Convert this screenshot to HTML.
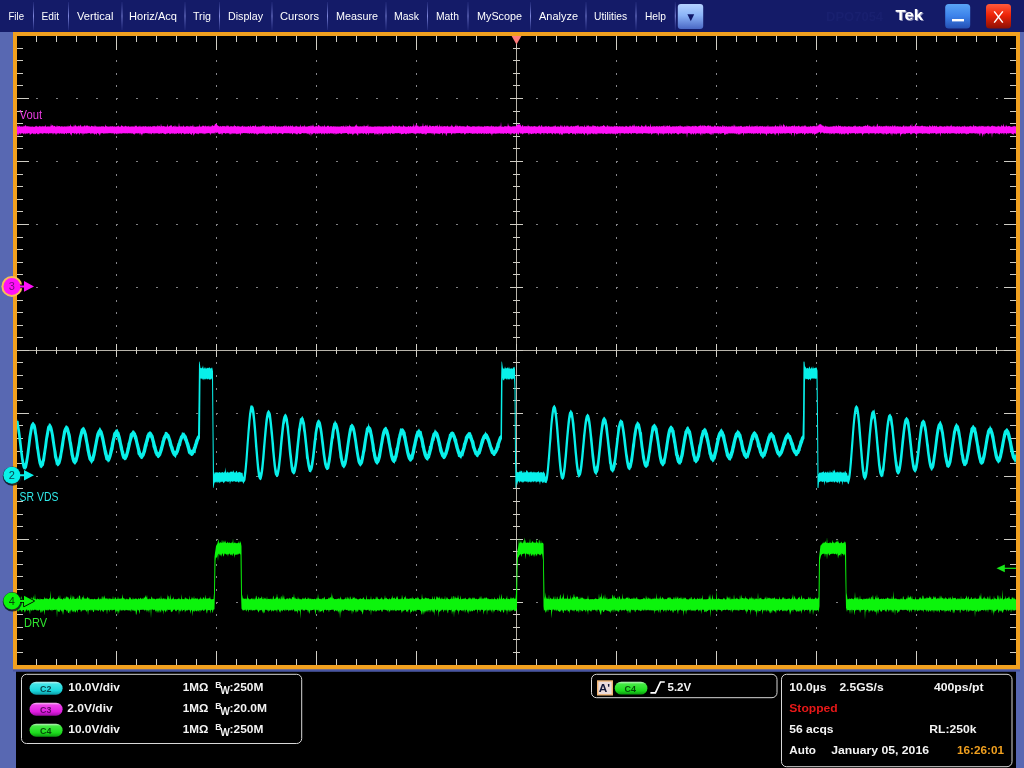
<!DOCTYPE html>
<html lang="en">
<head>
<meta charset="utf-8">
<title>Tek oscilloscope</title>
<style>
html,body{margin:0;padding:0;background:#000;}
body{width:1024px;height:768px;overflow:hidden;font-family:"Liberation Sans", sans-serif;}
svg{display:block;will-change:transform;}
</style>
</head>
<body>
<svg width="1024" height="768" viewBox="0 0 1024 768" font-family='"Liberation Sans", sans-serif'>
<defs>
<linearGradient id="gsep" x1="0" y1="0" x2="0" y2="1"><stop offset="0" stop-color="#5a64c0" stop-opacity="0.15"/><stop offset="0.5" stop-color="#8088dc" stop-opacity="1"/><stop offset="1" stop-color="#5a64c0" stop-opacity="0.15"/></linearGradient>
<linearGradient id="gdrop" x1="0" y1="0" x2="0" y2="1"><stop offset="0" stop-color="#b4d2ff"/><stop offset="0.45" stop-color="#8cb4f8"/><stop offset="1" stop-color="#4a68c4"/></linearGradient>
<linearGradient id="gmin" x1="0" y1="0" x2="0" y2="1"><stop offset="0" stop-color="#5aa4f6"/><stop offset="0.5" stop-color="#3c82ea"/><stop offset="1" stop-color="#2450b4"/></linearGradient>
<linearGradient id="gcls" x1="0" y1="0" x2="0" y2="1"><stop offset="0" stop-color="#ff5a3c"/><stop offset="0.45" stop-color="#ee2408"/><stop offset="1" stop-color="#8c1004"/></linearGradient>
<linearGradient id="gc2" x1="0" y1="0" x2="0" y2="1"><stop offset="0" stop-color="#c8f4f4"/><stop offset="0.18" stop-color="#44e6e8"/><stop offset="0.7" stop-color="#18d6dc"/><stop offset="1" stop-color="#0c98a2"/></linearGradient>
<linearGradient id="gc3" x1="0" y1="0" x2="0" y2="1"><stop offset="0" stop-color="#f8c8f4"/><stop offset="0.18" stop-color="#ee44ea"/><stop offset="0.7" stop-color="#e01ce0"/><stop offset="1" stop-color="#9c0ca2"/></linearGradient>
<linearGradient id="gc4" x1="0" y1="0" x2="0" y2="1"><stop offset="0" stop-color="#c8f4c8"/><stop offset="0.18" stop-color="#44ea44"/><stop offset="0.7" stop-color="#1cdc1c"/><stop offset="1" stop-color="#0c9810"/></linearGradient>
</defs>
<rect width="1024" height="768" fill="#5868b2"/>
<rect x="0" y="0" width="1024" height="32" fill="#141b68"/>
<rect x="16" y="671.5" width="1000" height="96.5" fill="#000"/>
<rect x="13" y="32" width="1007" height="637.5" fill="#f1a01f"/>
<rect x="17" y="36" width="999" height="629" fill="#000"/>
<rect x="13" y="669.5" width="1007" height="2" fill="#4855a2"/>
<rect x="33" y="2" width="1" height="28" fill="url(#gsep)"/>
<rect x="68" y="2" width="1" height="28" fill="url(#gsep)"/>
<rect x="121.5" y="2" width="1" height="28" fill="url(#gsep)"/>
<rect x="184.5" y="2" width="1" height="28" fill="url(#gsep)"/>
<rect x="219" y="2" width="1" height="28" fill="url(#gsep)"/>
<rect x="271.5" y="2" width="1" height="28" fill="url(#gsep)"/>
<rect x="327" y="2" width="1" height="28" fill="url(#gsep)"/>
<rect x="385.5" y="2" width="1" height="28" fill="url(#gsep)"/>
<rect x="427" y="2" width="1" height="28" fill="url(#gsep)"/>
<rect x="467.5" y="2" width="1" height="28" fill="url(#gsep)"/>
<rect x="530" y="2" width="1" height="28" fill="url(#gsep)"/>
<rect x="585.5" y="2" width="1" height="28" fill="url(#gsep)"/>
<rect x="635.5" y="2" width="1" height="28" fill="url(#gsep)"/>
<rect x="674.8" y="2" width="1" height="28" fill="url(#gsep)"/>
<text x="8.5" y="20" font-size="11" fill="#fff" textLength="15.5" lengthAdjust="spacingAndGlyphs">File</text>
<text x="41.5" y="20" font-size="11" fill="#fff" textLength="17.5" lengthAdjust="spacingAndGlyphs">Edit</text>
<text x="77" y="20" font-size="11" fill="#fff" textLength="36.5" lengthAdjust="spacingAndGlyphs">Vertical</text>
<text x="129" y="20" font-size="11" fill="#fff" textLength="48" lengthAdjust="spacingAndGlyphs">Horiz/Acq</text>
<text x="193" y="20" font-size="11" fill="#fff" textLength="18" lengthAdjust="spacingAndGlyphs">Trig</text>
<text x="228" y="20" font-size="11" fill="#fff" textLength="35" lengthAdjust="spacingAndGlyphs">Display</text>
<text x="280" y="20" font-size="11" fill="#fff" textLength="39" lengthAdjust="spacingAndGlyphs">Cursors</text>
<text x="336" y="20" font-size="11" fill="#fff" textLength="42" lengthAdjust="spacingAndGlyphs">Measure</text>
<text x="394" y="20" font-size="11" fill="#fff" textLength="25" lengthAdjust="spacingAndGlyphs">Mask</text>
<text x="436" y="20" font-size="11" fill="#fff" textLength="23" lengthAdjust="spacingAndGlyphs">Math</text>
<text x="477" y="20" font-size="11" fill="#fff" textLength="45" lengthAdjust="spacingAndGlyphs">MyScope</text>
<text x="539" y="20" font-size="11" fill="#fff" textLength="39" lengthAdjust="spacingAndGlyphs">Analyze</text>
<text x="594" y="20" font-size="11" fill="#fff" textLength="33" lengthAdjust="spacingAndGlyphs">Utilities</text>
<text x="645" y="20" font-size="11" fill="#fff" textLength="21" lengthAdjust="spacingAndGlyphs">Help</text>
<rect x="677.8" y="4" width="25.4" height="25" rx="3" fill="url(#gdrop)"/>
<path d="M687.4 14.3 L694.2 14.3 L690.8 21.3 Z" fill="#0e1668"/>
<text x="826" y="21" font-size="13" font-weight="bold" fill="#19206f">DPO7054</text>
<text x="895.6" y="20.4" font-size="15" font-weight="bold" fill="#fff" textLength="27.4" lengthAdjust="spacingAndGlyphs" style="filter:drop-shadow(1px 1px 0 #8d90b8)">Tek</text>
<rect x="945.2" y="4" width="25" height="24.4" rx="3.5" fill="url(#gmin)"/>
<rect x="952" y="19" width="12" height="2.4" fill="#fff"/>
<rect x="986" y="4" width="25" height="24.4" rx="3.5" fill="url(#gcls)"/>
<path d="M994.2 11.4 L1002.8 22.6 M1002.8 11.4 L994.2 22.6" stroke="#fff" stroke-width="1.5" fill="none"/>
<g shape-rendering="crispEdges">
<rect x="35.7" y="98" width="2.2" height="1" fill="#7e7e80"/>
<rect x="55.7" y="98" width="2.2" height="1" fill="#7e7e80"/>
<rect x="75.7" y="98" width="2.2" height="1" fill="#7e7e80"/>
<rect x="95.7" y="98" width="2.2" height="1" fill="#7e7e80"/>
<rect x="115.7" y="98" width="2.2" height="1" fill="#7e7e80"/>
<rect x="135.7" y="98" width="2.2" height="1" fill="#7e7e80"/>
<rect x="155.7" y="98" width="2.2" height="1" fill="#7e7e80"/>
<rect x="175.7" y="98" width="2.2" height="1" fill="#7e7e80"/>
<rect x="195.7" y="98" width="2.2" height="1" fill="#7e7e80"/>
<rect x="215.7" y="98" width="2.2" height="1" fill="#7e7e80"/>
<rect x="235.7" y="98" width="2.2" height="1" fill="#7e7e80"/>
<rect x="255.7" y="98" width="2.2" height="1" fill="#7e7e80"/>
<rect x="275.7" y="98" width="2.2" height="1" fill="#7e7e80"/>
<rect x="295.7" y="98" width="2.2" height="1" fill="#7e7e80"/>
<rect x="315.7" y="98" width="2.2" height="1" fill="#7e7e80"/>
<rect x="335.7" y="98" width="2.2" height="1" fill="#7e7e80"/>
<rect x="355.7" y="98" width="2.2" height="1" fill="#7e7e80"/>
<rect x="375.7" y="98" width="2.2" height="1" fill="#7e7e80"/>
<rect x="395.7" y="98" width="2.2" height="1" fill="#7e7e80"/>
<rect x="415.7" y="98" width="2.2" height="1" fill="#7e7e80"/>
<rect x="435.7" y="98" width="2.2" height="1" fill="#7e7e80"/>
<rect x="455.7" y="98" width="2.2" height="1" fill="#7e7e80"/>
<rect x="475.7" y="98" width="2.2" height="1" fill="#7e7e80"/>
<rect x="495.7" y="98" width="2.2" height="1" fill="#7e7e80"/>
<rect x="515.7" y="98" width="2.2" height="1" fill="#7e7e80"/>
<rect x="535.7" y="98" width="2.2" height="1" fill="#7e7e80"/>
<rect x="555.7" y="98" width="2.2" height="1" fill="#7e7e80"/>
<rect x="575.7" y="98" width="2.2" height="1" fill="#7e7e80"/>
<rect x="595.7" y="98" width="2.2" height="1" fill="#7e7e80"/>
<rect x="615.7" y="98" width="2.2" height="1" fill="#7e7e80"/>
<rect x="635.7" y="98" width="2.2" height="1" fill="#7e7e80"/>
<rect x="655.7" y="98" width="2.2" height="1" fill="#7e7e80"/>
<rect x="675.7" y="98" width="2.2" height="1" fill="#7e7e80"/>
<rect x="695.7" y="98" width="2.2" height="1" fill="#7e7e80"/>
<rect x="715.7" y="98" width="2.2" height="1" fill="#7e7e80"/>
<rect x="735.7" y="98" width="2.2" height="1" fill="#7e7e80"/>
<rect x="755.7" y="98" width="2.2" height="1" fill="#7e7e80"/>
<rect x="775.7" y="98" width="2.2" height="1" fill="#7e7e80"/>
<rect x="795.7" y="98" width="2.2" height="1" fill="#7e7e80"/>
<rect x="815.7" y="98" width="2.2" height="1" fill="#7e7e80"/>
<rect x="835.7" y="98" width="2.2" height="1" fill="#7e7e80"/>
<rect x="855.7" y="98" width="2.2" height="1" fill="#7e7e80"/>
<rect x="875.7" y="98" width="2.2" height="1" fill="#7e7e80"/>
<rect x="895.7" y="98" width="2.2" height="1" fill="#7e7e80"/>
<rect x="915.7" y="98" width="2.2" height="1" fill="#7e7e80"/>
<rect x="935.7" y="98" width="2.2" height="1" fill="#7e7e80"/>
<rect x="955.7" y="98" width="2.2" height="1" fill="#7e7e80"/>
<rect x="975.7" y="98" width="2.2" height="1" fill="#7e7e80"/>
<rect x="995.7" y="98" width="2.2" height="1" fill="#7e7e80"/>
<rect x="116" y="47.5" width="1" height="2" fill="#86868a"/>
<rect x="116" y="59.5" width="1" height="2" fill="#86868a"/>
<rect x="116" y="72.5" width="1" height="2" fill="#86868a"/>
<rect x="116" y="84.5" width="1" height="2" fill="#86868a"/>
<rect x="116" y="97.5" width="1" height="2" fill="#86868a"/>
<rect x="116" y="110.5" width="1" height="2" fill="#86868a"/>
<rect x="116" y="122.5" width="1" height="2" fill="#86868a"/>
<rect x="116" y="135.5" width="1" height="2" fill="#86868a"/>
<rect x="116" y="147.5" width="1" height="2" fill="#86868a"/>
<rect x="116" y="160.5" width="1" height="2" fill="#86868a"/>
<rect x="116" y="173.5" width="1" height="2" fill="#86868a"/>
<rect x="116" y="185.5" width="1" height="2" fill="#86868a"/>
<rect x="116" y="198.5" width="1" height="2" fill="#86868a"/>
<rect x="116" y="210.5" width="1" height="2" fill="#86868a"/>
<rect x="116" y="223.5" width="1" height="2" fill="#86868a"/>
<rect x="116" y="236.5" width="1" height="2" fill="#86868a"/>
<rect x="116" y="248.5" width="1" height="2" fill="#86868a"/>
<rect x="116" y="261.5" width="1" height="2" fill="#86868a"/>
<rect x="116" y="273.5" width="1" height="2" fill="#86868a"/>
<rect x="116" y="286.5" width="1" height="2" fill="#86868a"/>
<rect x="116" y="299.5" width="1" height="2" fill="#86868a"/>
<rect x="116" y="311.5" width="1" height="2" fill="#86868a"/>
<rect x="116" y="324.5" width="1" height="2" fill="#86868a"/>
<rect x="116" y="336.5" width="1" height="2" fill="#86868a"/>
<rect x="116" y="349.5" width="1" height="2" fill="#86868a"/>
<rect x="116" y="361.5" width="1" height="2" fill="#86868a"/>
<rect x="116" y="374.5" width="1" height="2" fill="#86868a"/>
<rect x="116" y="387.5" width="1" height="2" fill="#86868a"/>
<rect x="116" y="399.5" width="1" height="2" fill="#86868a"/>
<rect x="116" y="412.5" width="1" height="2" fill="#86868a"/>
<rect x="116" y="424.5" width="1" height="2" fill="#86868a"/>
<rect x="116" y="437.5" width="1" height="2" fill="#86868a"/>
<rect x="116" y="450.5" width="1" height="2" fill="#86868a"/>
<rect x="116" y="462.5" width="1" height="2" fill="#86868a"/>
<rect x="116" y="475.5" width="1" height="2" fill="#86868a"/>
<rect x="116" y="487.5" width="1" height="2" fill="#86868a"/>
<rect x="116" y="500.5" width="1" height="2" fill="#86868a"/>
<rect x="116" y="513.5" width="1" height="2" fill="#86868a"/>
<rect x="116" y="525.5" width="1" height="2" fill="#86868a"/>
<rect x="116" y="538.5" width="1" height="2" fill="#86868a"/>
<rect x="116" y="550.5" width="1" height="2" fill="#86868a"/>
<rect x="116" y="563.5" width="1" height="2" fill="#86868a"/>
<rect x="116" y="575.5" width="1" height="2" fill="#86868a"/>
<rect x="116" y="588.5" width="1" height="2" fill="#86868a"/>
<rect x="116" y="601.5" width="1" height="2" fill="#86868a"/>
<rect x="116" y="613.5" width="1" height="2" fill="#86868a"/>
<rect x="116" y="626.5" width="1" height="2" fill="#86868a"/>
<rect x="116" y="638.5" width="1" height="2" fill="#86868a"/>
<rect x="116" y="651.5" width="1" height="2" fill="#86868a"/>
<rect x="35.7" y="161" width="2.2" height="1" fill="#7e7e80"/>
<rect x="55.7" y="161" width="2.2" height="1" fill="#7e7e80"/>
<rect x="75.7" y="161" width="2.2" height="1" fill="#7e7e80"/>
<rect x="95.7" y="161" width="2.2" height="1" fill="#7e7e80"/>
<rect x="115.7" y="161" width="2.2" height="1" fill="#7e7e80"/>
<rect x="135.7" y="161" width="2.2" height="1" fill="#7e7e80"/>
<rect x="155.7" y="161" width="2.2" height="1" fill="#7e7e80"/>
<rect x="175.7" y="161" width="2.2" height="1" fill="#7e7e80"/>
<rect x="195.7" y="161" width="2.2" height="1" fill="#7e7e80"/>
<rect x="215.7" y="161" width="2.2" height="1" fill="#7e7e80"/>
<rect x="235.7" y="161" width="2.2" height="1" fill="#7e7e80"/>
<rect x="255.7" y="161" width="2.2" height="1" fill="#7e7e80"/>
<rect x="275.7" y="161" width="2.2" height="1" fill="#7e7e80"/>
<rect x="295.7" y="161" width="2.2" height="1" fill="#7e7e80"/>
<rect x="315.7" y="161" width="2.2" height="1" fill="#7e7e80"/>
<rect x="335.7" y="161" width="2.2" height="1" fill="#7e7e80"/>
<rect x="355.7" y="161" width="2.2" height="1" fill="#7e7e80"/>
<rect x="375.7" y="161" width="2.2" height="1" fill="#7e7e80"/>
<rect x="395.7" y="161" width="2.2" height="1" fill="#7e7e80"/>
<rect x="415.7" y="161" width="2.2" height="1" fill="#7e7e80"/>
<rect x="435.7" y="161" width="2.2" height="1" fill="#7e7e80"/>
<rect x="455.7" y="161" width="2.2" height="1" fill="#7e7e80"/>
<rect x="475.7" y="161" width="2.2" height="1" fill="#7e7e80"/>
<rect x="495.7" y="161" width="2.2" height="1" fill="#7e7e80"/>
<rect x="515.7" y="161" width="2.2" height="1" fill="#7e7e80"/>
<rect x="535.7" y="161" width="2.2" height="1" fill="#7e7e80"/>
<rect x="555.7" y="161" width="2.2" height="1" fill="#7e7e80"/>
<rect x="575.7" y="161" width="2.2" height="1" fill="#7e7e80"/>
<rect x="595.7" y="161" width="2.2" height="1" fill="#7e7e80"/>
<rect x="615.7" y="161" width="2.2" height="1" fill="#7e7e80"/>
<rect x="635.7" y="161" width="2.2" height="1" fill="#7e7e80"/>
<rect x="655.7" y="161" width="2.2" height="1" fill="#7e7e80"/>
<rect x="675.7" y="161" width="2.2" height="1" fill="#7e7e80"/>
<rect x="695.7" y="161" width="2.2" height="1" fill="#7e7e80"/>
<rect x="715.7" y="161" width="2.2" height="1" fill="#7e7e80"/>
<rect x="735.7" y="161" width="2.2" height="1" fill="#7e7e80"/>
<rect x="755.7" y="161" width="2.2" height="1" fill="#7e7e80"/>
<rect x="775.7" y="161" width="2.2" height="1" fill="#7e7e80"/>
<rect x="795.7" y="161" width="2.2" height="1" fill="#7e7e80"/>
<rect x="815.7" y="161" width="2.2" height="1" fill="#7e7e80"/>
<rect x="835.7" y="161" width="2.2" height="1" fill="#7e7e80"/>
<rect x="855.7" y="161" width="2.2" height="1" fill="#7e7e80"/>
<rect x="875.7" y="161" width="2.2" height="1" fill="#7e7e80"/>
<rect x="895.7" y="161" width="2.2" height="1" fill="#7e7e80"/>
<rect x="915.7" y="161" width="2.2" height="1" fill="#7e7e80"/>
<rect x="935.7" y="161" width="2.2" height="1" fill="#7e7e80"/>
<rect x="955.7" y="161" width="2.2" height="1" fill="#7e7e80"/>
<rect x="975.7" y="161" width="2.2" height="1" fill="#7e7e80"/>
<rect x="995.7" y="161" width="2.2" height="1" fill="#7e7e80"/>
<rect x="216" y="47.5" width="1" height="2" fill="#86868a"/>
<rect x="216" y="59.5" width="1" height="2" fill="#86868a"/>
<rect x="216" y="72.5" width="1" height="2" fill="#86868a"/>
<rect x="216" y="84.5" width="1" height="2" fill="#86868a"/>
<rect x="216" y="97.5" width="1" height="2" fill="#86868a"/>
<rect x="216" y="110.5" width="1" height="2" fill="#86868a"/>
<rect x="216" y="122.5" width="1" height="2" fill="#86868a"/>
<rect x="216" y="135.5" width="1" height="2" fill="#86868a"/>
<rect x="216" y="147.5" width="1" height="2" fill="#86868a"/>
<rect x="216" y="160.5" width="1" height="2" fill="#86868a"/>
<rect x="216" y="173.5" width="1" height="2" fill="#86868a"/>
<rect x="216" y="185.5" width="1" height="2" fill="#86868a"/>
<rect x="216" y="198.5" width="1" height="2" fill="#86868a"/>
<rect x="216" y="210.5" width="1" height="2" fill="#86868a"/>
<rect x="216" y="223.5" width="1" height="2" fill="#86868a"/>
<rect x="216" y="236.5" width="1" height="2" fill="#86868a"/>
<rect x="216" y="248.5" width="1" height="2" fill="#86868a"/>
<rect x="216" y="261.5" width="1" height="2" fill="#86868a"/>
<rect x="216" y="273.5" width="1" height="2" fill="#86868a"/>
<rect x="216" y="286.5" width="1" height="2" fill="#86868a"/>
<rect x="216" y="299.5" width="1" height="2" fill="#86868a"/>
<rect x="216" y="311.5" width="1" height="2" fill="#86868a"/>
<rect x="216" y="324.5" width="1" height="2" fill="#86868a"/>
<rect x="216" y="336.5" width="1" height="2" fill="#86868a"/>
<rect x="216" y="349.5" width="1" height="2" fill="#86868a"/>
<rect x="216" y="361.5" width="1" height="2" fill="#86868a"/>
<rect x="216" y="374.5" width="1" height="2" fill="#86868a"/>
<rect x="216" y="387.5" width="1" height="2" fill="#86868a"/>
<rect x="216" y="399.5" width="1" height="2" fill="#86868a"/>
<rect x="216" y="412.5" width="1" height="2" fill="#86868a"/>
<rect x="216" y="424.5" width="1" height="2" fill="#86868a"/>
<rect x="216" y="437.5" width="1" height="2" fill="#86868a"/>
<rect x="216" y="450.5" width="1" height="2" fill="#86868a"/>
<rect x="216" y="462.5" width="1" height="2" fill="#86868a"/>
<rect x="216" y="475.5" width="1" height="2" fill="#86868a"/>
<rect x="216" y="487.5" width="1" height="2" fill="#86868a"/>
<rect x="216" y="500.5" width="1" height="2" fill="#86868a"/>
<rect x="216" y="513.5" width="1" height="2" fill="#86868a"/>
<rect x="216" y="525.5" width="1" height="2" fill="#86868a"/>
<rect x="216" y="538.5" width="1" height="2" fill="#86868a"/>
<rect x="216" y="550.5" width="1" height="2" fill="#86868a"/>
<rect x="216" y="563.5" width="1" height="2" fill="#86868a"/>
<rect x="216" y="575.5" width="1" height="2" fill="#86868a"/>
<rect x="216" y="588.5" width="1" height="2" fill="#86868a"/>
<rect x="216" y="601.5" width="1" height="2" fill="#86868a"/>
<rect x="216" y="613.5" width="1" height="2" fill="#86868a"/>
<rect x="216" y="626.5" width="1" height="2" fill="#86868a"/>
<rect x="216" y="638.5" width="1" height="2" fill="#86868a"/>
<rect x="216" y="651.5" width="1" height="2" fill="#86868a"/>
<rect x="35.7" y="224" width="2.2" height="1" fill="#7e7e80"/>
<rect x="55.7" y="224" width="2.2" height="1" fill="#7e7e80"/>
<rect x="75.7" y="224" width="2.2" height="1" fill="#7e7e80"/>
<rect x="95.7" y="224" width="2.2" height="1" fill="#7e7e80"/>
<rect x="115.7" y="224" width="2.2" height="1" fill="#7e7e80"/>
<rect x="135.7" y="224" width="2.2" height="1" fill="#7e7e80"/>
<rect x="155.7" y="224" width="2.2" height="1" fill="#7e7e80"/>
<rect x="175.7" y="224" width="2.2" height="1" fill="#7e7e80"/>
<rect x="195.7" y="224" width="2.2" height="1" fill="#7e7e80"/>
<rect x="215.7" y="224" width="2.2" height="1" fill="#7e7e80"/>
<rect x="235.7" y="224" width="2.2" height="1" fill="#7e7e80"/>
<rect x="255.7" y="224" width="2.2" height="1" fill="#7e7e80"/>
<rect x="275.7" y="224" width="2.2" height="1" fill="#7e7e80"/>
<rect x="295.7" y="224" width="2.2" height="1" fill="#7e7e80"/>
<rect x="315.7" y="224" width="2.2" height="1" fill="#7e7e80"/>
<rect x="335.7" y="224" width="2.2" height="1" fill="#7e7e80"/>
<rect x="355.7" y="224" width="2.2" height="1" fill="#7e7e80"/>
<rect x="375.7" y="224" width="2.2" height="1" fill="#7e7e80"/>
<rect x="395.7" y="224" width="2.2" height="1" fill="#7e7e80"/>
<rect x="415.7" y="224" width="2.2" height="1" fill="#7e7e80"/>
<rect x="435.7" y="224" width="2.2" height="1" fill="#7e7e80"/>
<rect x="455.7" y="224" width="2.2" height="1" fill="#7e7e80"/>
<rect x="475.7" y="224" width="2.2" height="1" fill="#7e7e80"/>
<rect x="495.7" y="224" width="2.2" height="1" fill="#7e7e80"/>
<rect x="515.7" y="224" width="2.2" height="1" fill="#7e7e80"/>
<rect x="535.7" y="224" width="2.2" height="1" fill="#7e7e80"/>
<rect x="555.7" y="224" width="2.2" height="1" fill="#7e7e80"/>
<rect x="575.7" y="224" width="2.2" height="1" fill="#7e7e80"/>
<rect x="595.7" y="224" width="2.2" height="1" fill="#7e7e80"/>
<rect x="615.7" y="224" width="2.2" height="1" fill="#7e7e80"/>
<rect x="635.7" y="224" width="2.2" height="1" fill="#7e7e80"/>
<rect x="655.7" y="224" width="2.2" height="1" fill="#7e7e80"/>
<rect x="675.7" y="224" width="2.2" height="1" fill="#7e7e80"/>
<rect x="695.7" y="224" width="2.2" height="1" fill="#7e7e80"/>
<rect x="715.7" y="224" width="2.2" height="1" fill="#7e7e80"/>
<rect x="735.7" y="224" width="2.2" height="1" fill="#7e7e80"/>
<rect x="755.7" y="224" width="2.2" height="1" fill="#7e7e80"/>
<rect x="775.7" y="224" width="2.2" height="1" fill="#7e7e80"/>
<rect x="795.7" y="224" width="2.2" height="1" fill="#7e7e80"/>
<rect x="815.7" y="224" width="2.2" height="1" fill="#7e7e80"/>
<rect x="835.7" y="224" width="2.2" height="1" fill="#7e7e80"/>
<rect x="855.7" y="224" width="2.2" height="1" fill="#7e7e80"/>
<rect x="875.7" y="224" width="2.2" height="1" fill="#7e7e80"/>
<rect x="895.7" y="224" width="2.2" height="1" fill="#7e7e80"/>
<rect x="915.7" y="224" width="2.2" height="1" fill="#7e7e80"/>
<rect x="935.7" y="224" width="2.2" height="1" fill="#7e7e80"/>
<rect x="955.7" y="224" width="2.2" height="1" fill="#7e7e80"/>
<rect x="975.7" y="224" width="2.2" height="1" fill="#7e7e80"/>
<rect x="995.7" y="224" width="2.2" height="1" fill="#7e7e80"/>
<rect x="316" y="47.5" width="1" height="2" fill="#86868a"/>
<rect x="316" y="59.5" width="1" height="2" fill="#86868a"/>
<rect x="316" y="72.5" width="1" height="2" fill="#86868a"/>
<rect x="316" y="84.5" width="1" height="2" fill="#86868a"/>
<rect x="316" y="97.5" width="1" height="2" fill="#86868a"/>
<rect x="316" y="110.5" width="1" height="2" fill="#86868a"/>
<rect x="316" y="122.5" width="1" height="2" fill="#86868a"/>
<rect x="316" y="135.5" width="1" height="2" fill="#86868a"/>
<rect x="316" y="147.5" width="1" height="2" fill="#86868a"/>
<rect x="316" y="160.5" width="1" height="2" fill="#86868a"/>
<rect x="316" y="173.5" width="1" height="2" fill="#86868a"/>
<rect x="316" y="185.5" width="1" height="2" fill="#86868a"/>
<rect x="316" y="198.5" width="1" height="2" fill="#86868a"/>
<rect x="316" y="210.5" width="1" height="2" fill="#86868a"/>
<rect x="316" y="223.5" width="1" height="2" fill="#86868a"/>
<rect x="316" y="236.5" width="1" height="2" fill="#86868a"/>
<rect x="316" y="248.5" width="1" height="2" fill="#86868a"/>
<rect x="316" y="261.5" width="1" height="2" fill="#86868a"/>
<rect x="316" y="273.5" width="1" height="2" fill="#86868a"/>
<rect x="316" y="286.5" width="1" height="2" fill="#86868a"/>
<rect x="316" y="299.5" width="1" height="2" fill="#86868a"/>
<rect x="316" y="311.5" width="1" height="2" fill="#86868a"/>
<rect x="316" y="324.5" width="1" height="2" fill="#86868a"/>
<rect x="316" y="336.5" width="1" height="2" fill="#86868a"/>
<rect x="316" y="349.5" width="1" height="2" fill="#86868a"/>
<rect x="316" y="361.5" width="1" height="2" fill="#86868a"/>
<rect x="316" y="374.5" width="1" height="2" fill="#86868a"/>
<rect x="316" y="387.5" width="1" height="2" fill="#86868a"/>
<rect x="316" y="399.5" width="1" height="2" fill="#86868a"/>
<rect x="316" y="412.5" width="1" height="2" fill="#86868a"/>
<rect x="316" y="424.5" width="1" height="2" fill="#86868a"/>
<rect x="316" y="437.5" width="1" height="2" fill="#86868a"/>
<rect x="316" y="450.5" width="1" height="2" fill="#86868a"/>
<rect x="316" y="462.5" width="1" height="2" fill="#86868a"/>
<rect x="316" y="475.5" width="1" height="2" fill="#86868a"/>
<rect x="316" y="487.5" width="1" height="2" fill="#86868a"/>
<rect x="316" y="500.5" width="1" height="2" fill="#86868a"/>
<rect x="316" y="513.5" width="1" height="2" fill="#86868a"/>
<rect x="316" y="525.5" width="1" height="2" fill="#86868a"/>
<rect x="316" y="538.5" width="1" height="2" fill="#86868a"/>
<rect x="316" y="550.5" width="1" height="2" fill="#86868a"/>
<rect x="316" y="563.5" width="1" height="2" fill="#86868a"/>
<rect x="316" y="575.5" width="1" height="2" fill="#86868a"/>
<rect x="316" y="588.5" width="1" height="2" fill="#86868a"/>
<rect x="316" y="601.5" width="1" height="2" fill="#86868a"/>
<rect x="316" y="613.5" width="1" height="2" fill="#86868a"/>
<rect x="316" y="626.5" width="1" height="2" fill="#86868a"/>
<rect x="316" y="638.5" width="1" height="2" fill="#86868a"/>
<rect x="316" y="651.5" width="1" height="2" fill="#86868a"/>
<rect x="35.7" y="287" width="2.2" height="1" fill="#7e7e80"/>
<rect x="55.7" y="287" width="2.2" height="1" fill="#7e7e80"/>
<rect x="75.7" y="287" width="2.2" height="1" fill="#7e7e80"/>
<rect x="95.7" y="287" width="2.2" height="1" fill="#7e7e80"/>
<rect x="115.7" y="287" width="2.2" height="1" fill="#7e7e80"/>
<rect x="135.7" y="287" width="2.2" height="1" fill="#7e7e80"/>
<rect x="155.7" y="287" width="2.2" height="1" fill="#7e7e80"/>
<rect x="175.7" y="287" width="2.2" height="1" fill="#7e7e80"/>
<rect x="195.7" y="287" width="2.2" height="1" fill="#7e7e80"/>
<rect x="215.7" y="287" width="2.2" height="1" fill="#7e7e80"/>
<rect x="235.7" y="287" width="2.2" height="1" fill="#7e7e80"/>
<rect x="255.7" y="287" width="2.2" height="1" fill="#7e7e80"/>
<rect x="275.7" y="287" width="2.2" height="1" fill="#7e7e80"/>
<rect x="295.7" y="287" width="2.2" height="1" fill="#7e7e80"/>
<rect x="315.7" y="287" width="2.2" height="1" fill="#7e7e80"/>
<rect x="335.7" y="287" width="2.2" height="1" fill="#7e7e80"/>
<rect x="355.7" y="287" width="2.2" height="1" fill="#7e7e80"/>
<rect x="375.7" y="287" width="2.2" height="1" fill="#7e7e80"/>
<rect x="395.7" y="287" width="2.2" height="1" fill="#7e7e80"/>
<rect x="415.7" y="287" width="2.2" height="1" fill="#7e7e80"/>
<rect x="435.7" y="287" width="2.2" height="1" fill="#7e7e80"/>
<rect x="455.7" y="287" width="2.2" height="1" fill="#7e7e80"/>
<rect x="475.7" y="287" width="2.2" height="1" fill="#7e7e80"/>
<rect x="495.7" y="287" width="2.2" height="1" fill="#7e7e80"/>
<rect x="515.7" y="287" width="2.2" height="1" fill="#7e7e80"/>
<rect x="535.7" y="287" width="2.2" height="1" fill="#7e7e80"/>
<rect x="555.7" y="287" width="2.2" height="1" fill="#7e7e80"/>
<rect x="575.7" y="287" width="2.2" height="1" fill="#7e7e80"/>
<rect x="595.7" y="287" width="2.2" height="1" fill="#7e7e80"/>
<rect x="615.7" y="287" width="2.2" height="1" fill="#7e7e80"/>
<rect x="635.7" y="287" width="2.2" height="1" fill="#7e7e80"/>
<rect x="655.7" y="287" width="2.2" height="1" fill="#7e7e80"/>
<rect x="675.7" y="287" width="2.2" height="1" fill="#7e7e80"/>
<rect x="695.7" y="287" width="2.2" height="1" fill="#7e7e80"/>
<rect x="715.7" y="287" width="2.2" height="1" fill="#7e7e80"/>
<rect x="735.7" y="287" width="2.2" height="1" fill="#7e7e80"/>
<rect x="755.7" y="287" width="2.2" height="1" fill="#7e7e80"/>
<rect x="775.7" y="287" width="2.2" height="1" fill="#7e7e80"/>
<rect x="795.7" y="287" width="2.2" height="1" fill="#7e7e80"/>
<rect x="815.7" y="287" width="2.2" height="1" fill="#7e7e80"/>
<rect x="835.7" y="287" width="2.2" height="1" fill="#7e7e80"/>
<rect x="855.7" y="287" width="2.2" height="1" fill="#7e7e80"/>
<rect x="875.7" y="287" width="2.2" height="1" fill="#7e7e80"/>
<rect x="895.7" y="287" width="2.2" height="1" fill="#7e7e80"/>
<rect x="915.7" y="287" width="2.2" height="1" fill="#7e7e80"/>
<rect x="935.7" y="287" width="2.2" height="1" fill="#7e7e80"/>
<rect x="955.7" y="287" width="2.2" height="1" fill="#7e7e80"/>
<rect x="975.7" y="287" width="2.2" height="1" fill="#7e7e80"/>
<rect x="995.7" y="287" width="2.2" height="1" fill="#7e7e80"/>
<rect x="416" y="47.5" width="1" height="2" fill="#86868a"/>
<rect x="416" y="59.5" width="1" height="2" fill="#86868a"/>
<rect x="416" y="72.5" width="1" height="2" fill="#86868a"/>
<rect x="416" y="84.5" width="1" height="2" fill="#86868a"/>
<rect x="416" y="97.5" width="1" height="2" fill="#86868a"/>
<rect x="416" y="110.5" width="1" height="2" fill="#86868a"/>
<rect x="416" y="122.5" width="1" height="2" fill="#86868a"/>
<rect x="416" y="135.5" width="1" height="2" fill="#86868a"/>
<rect x="416" y="147.5" width="1" height="2" fill="#86868a"/>
<rect x="416" y="160.5" width="1" height="2" fill="#86868a"/>
<rect x="416" y="173.5" width="1" height="2" fill="#86868a"/>
<rect x="416" y="185.5" width="1" height="2" fill="#86868a"/>
<rect x="416" y="198.5" width="1" height="2" fill="#86868a"/>
<rect x="416" y="210.5" width="1" height="2" fill="#86868a"/>
<rect x="416" y="223.5" width="1" height="2" fill="#86868a"/>
<rect x="416" y="236.5" width="1" height="2" fill="#86868a"/>
<rect x="416" y="248.5" width="1" height="2" fill="#86868a"/>
<rect x="416" y="261.5" width="1" height="2" fill="#86868a"/>
<rect x="416" y="273.5" width="1" height="2" fill="#86868a"/>
<rect x="416" y="286.5" width="1" height="2" fill="#86868a"/>
<rect x="416" y="299.5" width="1" height="2" fill="#86868a"/>
<rect x="416" y="311.5" width="1" height="2" fill="#86868a"/>
<rect x="416" y="324.5" width="1" height="2" fill="#86868a"/>
<rect x="416" y="336.5" width="1" height="2" fill="#86868a"/>
<rect x="416" y="349.5" width="1" height="2" fill="#86868a"/>
<rect x="416" y="361.5" width="1" height="2" fill="#86868a"/>
<rect x="416" y="374.5" width="1" height="2" fill="#86868a"/>
<rect x="416" y="387.5" width="1" height="2" fill="#86868a"/>
<rect x="416" y="399.5" width="1" height="2" fill="#86868a"/>
<rect x="416" y="412.5" width="1" height="2" fill="#86868a"/>
<rect x="416" y="424.5" width="1" height="2" fill="#86868a"/>
<rect x="416" y="437.5" width="1" height="2" fill="#86868a"/>
<rect x="416" y="450.5" width="1" height="2" fill="#86868a"/>
<rect x="416" y="462.5" width="1" height="2" fill="#86868a"/>
<rect x="416" y="475.5" width="1" height="2" fill="#86868a"/>
<rect x="416" y="487.5" width="1" height="2" fill="#86868a"/>
<rect x="416" y="500.5" width="1" height="2" fill="#86868a"/>
<rect x="416" y="513.5" width="1" height="2" fill="#86868a"/>
<rect x="416" y="525.5" width="1" height="2" fill="#86868a"/>
<rect x="416" y="538.5" width="1" height="2" fill="#86868a"/>
<rect x="416" y="550.5" width="1" height="2" fill="#86868a"/>
<rect x="416" y="563.5" width="1" height="2" fill="#86868a"/>
<rect x="416" y="575.5" width="1" height="2" fill="#86868a"/>
<rect x="416" y="588.5" width="1" height="2" fill="#86868a"/>
<rect x="416" y="601.5" width="1" height="2" fill="#86868a"/>
<rect x="416" y="613.5" width="1" height="2" fill="#86868a"/>
<rect x="416" y="626.5" width="1" height="2" fill="#86868a"/>
<rect x="416" y="638.5" width="1" height="2" fill="#86868a"/>
<rect x="416" y="651.5" width="1" height="2" fill="#86868a"/>
<rect x="35.7" y="413" width="2.2" height="1" fill="#7e7e80"/>
<rect x="55.7" y="413" width="2.2" height="1" fill="#7e7e80"/>
<rect x="75.7" y="413" width="2.2" height="1" fill="#7e7e80"/>
<rect x="95.7" y="413" width="2.2" height="1" fill="#7e7e80"/>
<rect x="115.7" y="413" width="2.2" height="1" fill="#7e7e80"/>
<rect x="135.7" y="413" width="2.2" height="1" fill="#7e7e80"/>
<rect x="155.7" y="413" width="2.2" height="1" fill="#7e7e80"/>
<rect x="175.7" y="413" width="2.2" height="1" fill="#7e7e80"/>
<rect x="195.7" y="413" width="2.2" height="1" fill="#7e7e80"/>
<rect x="215.7" y="413" width="2.2" height="1" fill="#7e7e80"/>
<rect x="235.7" y="413" width="2.2" height="1" fill="#7e7e80"/>
<rect x="255.7" y="413" width="2.2" height="1" fill="#7e7e80"/>
<rect x="275.7" y="413" width="2.2" height="1" fill="#7e7e80"/>
<rect x="295.7" y="413" width="2.2" height="1" fill="#7e7e80"/>
<rect x="315.7" y="413" width="2.2" height="1" fill="#7e7e80"/>
<rect x="335.7" y="413" width="2.2" height="1" fill="#7e7e80"/>
<rect x="355.7" y="413" width="2.2" height="1" fill="#7e7e80"/>
<rect x="375.7" y="413" width="2.2" height="1" fill="#7e7e80"/>
<rect x="395.7" y="413" width="2.2" height="1" fill="#7e7e80"/>
<rect x="415.7" y="413" width="2.2" height="1" fill="#7e7e80"/>
<rect x="435.7" y="413" width="2.2" height="1" fill="#7e7e80"/>
<rect x="455.7" y="413" width="2.2" height="1" fill="#7e7e80"/>
<rect x="475.7" y="413" width="2.2" height="1" fill="#7e7e80"/>
<rect x="495.7" y="413" width="2.2" height="1" fill="#7e7e80"/>
<rect x="515.7" y="413" width="2.2" height="1" fill="#7e7e80"/>
<rect x="535.7" y="413" width="2.2" height="1" fill="#7e7e80"/>
<rect x="555.7" y="413" width="2.2" height="1" fill="#7e7e80"/>
<rect x="575.7" y="413" width="2.2" height="1" fill="#7e7e80"/>
<rect x="595.7" y="413" width="2.2" height="1" fill="#7e7e80"/>
<rect x="615.7" y="413" width="2.2" height="1" fill="#7e7e80"/>
<rect x="635.7" y="413" width="2.2" height="1" fill="#7e7e80"/>
<rect x="655.7" y="413" width="2.2" height="1" fill="#7e7e80"/>
<rect x="675.7" y="413" width="2.2" height="1" fill="#7e7e80"/>
<rect x="695.7" y="413" width="2.2" height="1" fill="#7e7e80"/>
<rect x="715.7" y="413" width="2.2" height="1" fill="#7e7e80"/>
<rect x="735.7" y="413" width="2.2" height="1" fill="#7e7e80"/>
<rect x="755.7" y="413" width="2.2" height="1" fill="#7e7e80"/>
<rect x="775.7" y="413" width="2.2" height="1" fill="#7e7e80"/>
<rect x="795.7" y="413" width="2.2" height="1" fill="#7e7e80"/>
<rect x="815.7" y="413" width="2.2" height="1" fill="#7e7e80"/>
<rect x="835.7" y="413" width="2.2" height="1" fill="#7e7e80"/>
<rect x="855.7" y="413" width="2.2" height="1" fill="#7e7e80"/>
<rect x="875.7" y="413" width="2.2" height="1" fill="#7e7e80"/>
<rect x="895.7" y="413" width="2.2" height="1" fill="#7e7e80"/>
<rect x="915.7" y="413" width="2.2" height="1" fill="#7e7e80"/>
<rect x="935.7" y="413" width="2.2" height="1" fill="#7e7e80"/>
<rect x="955.7" y="413" width="2.2" height="1" fill="#7e7e80"/>
<rect x="975.7" y="413" width="2.2" height="1" fill="#7e7e80"/>
<rect x="995.7" y="413" width="2.2" height="1" fill="#7e7e80"/>
<rect x="616" y="47.5" width="1" height="2" fill="#86868a"/>
<rect x="616" y="59.5" width="1" height="2" fill="#86868a"/>
<rect x="616" y="72.5" width="1" height="2" fill="#86868a"/>
<rect x="616" y="84.5" width="1" height="2" fill="#86868a"/>
<rect x="616" y="97.5" width="1" height="2" fill="#86868a"/>
<rect x="616" y="110.5" width="1" height="2" fill="#86868a"/>
<rect x="616" y="122.5" width="1" height="2" fill="#86868a"/>
<rect x="616" y="135.5" width="1" height="2" fill="#86868a"/>
<rect x="616" y="147.5" width="1" height="2" fill="#86868a"/>
<rect x="616" y="160.5" width="1" height="2" fill="#86868a"/>
<rect x="616" y="173.5" width="1" height="2" fill="#86868a"/>
<rect x="616" y="185.5" width="1" height="2" fill="#86868a"/>
<rect x="616" y="198.5" width="1" height="2" fill="#86868a"/>
<rect x="616" y="210.5" width="1" height="2" fill="#86868a"/>
<rect x="616" y="223.5" width="1" height="2" fill="#86868a"/>
<rect x="616" y="236.5" width="1" height="2" fill="#86868a"/>
<rect x="616" y="248.5" width="1" height="2" fill="#86868a"/>
<rect x="616" y="261.5" width="1" height="2" fill="#86868a"/>
<rect x="616" y="273.5" width="1" height="2" fill="#86868a"/>
<rect x="616" y="286.5" width="1" height="2" fill="#86868a"/>
<rect x="616" y="299.5" width="1" height="2" fill="#86868a"/>
<rect x="616" y="311.5" width="1" height="2" fill="#86868a"/>
<rect x="616" y="324.5" width="1" height="2" fill="#86868a"/>
<rect x="616" y="336.5" width="1" height="2" fill="#86868a"/>
<rect x="616" y="349.5" width="1" height="2" fill="#86868a"/>
<rect x="616" y="361.5" width="1" height="2" fill="#86868a"/>
<rect x="616" y="374.5" width="1" height="2" fill="#86868a"/>
<rect x="616" y="387.5" width="1" height="2" fill="#86868a"/>
<rect x="616" y="399.5" width="1" height="2" fill="#86868a"/>
<rect x="616" y="412.5" width="1" height="2" fill="#86868a"/>
<rect x="616" y="424.5" width="1" height="2" fill="#86868a"/>
<rect x="616" y="437.5" width="1" height="2" fill="#86868a"/>
<rect x="616" y="450.5" width="1" height="2" fill="#86868a"/>
<rect x="616" y="462.5" width="1" height="2" fill="#86868a"/>
<rect x="616" y="475.5" width="1" height="2" fill="#86868a"/>
<rect x="616" y="487.5" width="1" height="2" fill="#86868a"/>
<rect x="616" y="500.5" width="1" height="2" fill="#86868a"/>
<rect x="616" y="513.5" width="1" height="2" fill="#86868a"/>
<rect x="616" y="525.5" width="1" height="2" fill="#86868a"/>
<rect x="616" y="538.5" width="1" height="2" fill="#86868a"/>
<rect x="616" y="550.5" width="1" height="2" fill="#86868a"/>
<rect x="616" y="563.5" width="1" height="2" fill="#86868a"/>
<rect x="616" y="575.5" width="1" height="2" fill="#86868a"/>
<rect x="616" y="588.5" width="1" height="2" fill="#86868a"/>
<rect x="616" y="601.5" width="1" height="2" fill="#86868a"/>
<rect x="616" y="613.5" width="1" height="2" fill="#86868a"/>
<rect x="616" y="626.5" width="1" height="2" fill="#86868a"/>
<rect x="616" y="638.5" width="1" height="2" fill="#86868a"/>
<rect x="616" y="651.5" width="1" height="2" fill="#86868a"/>
<rect x="35.7" y="476" width="2.2" height="1" fill="#7e7e80"/>
<rect x="55.7" y="476" width="2.2" height="1" fill="#7e7e80"/>
<rect x="75.7" y="476" width="2.2" height="1" fill="#7e7e80"/>
<rect x="95.7" y="476" width="2.2" height="1" fill="#7e7e80"/>
<rect x="115.7" y="476" width="2.2" height="1" fill="#7e7e80"/>
<rect x="135.7" y="476" width="2.2" height="1" fill="#7e7e80"/>
<rect x="155.7" y="476" width="2.2" height="1" fill="#7e7e80"/>
<rect x="175.7" y="476" width="2.2" height="1" fill="#7e7e80"/>
<rect x="195.7" y="476" width="2.2" height="1" fill="#7e7e80"/>
<rect x="215.7" y="476" width="2.2" height="1" fill="#7e7e80"/>
<rect x="235.7" y="476" width="2.2" height="1" fill="#7e7e80"/>
<rect x="255.7" y="476" width="2.2" height="1" fill="#7e7e80"/>
<rect x="275.7" y="476" width="2.2" height="1" fill="#7e7e80"/>
<rect x="295.7" y="476" width="2.2" height="1" fill="#7e7e80"/>
<rect x="315.7" y="476" width="2.2" height="1" fill="#7e7e80"/>
<rect x="335.7" y="476" width="2.2" height="1" fill="#7e7e80"/>
<rect x="355.7" y="476" width="2.2" height="1" fill="#7e7e80"/>
<rect x="375.7" y="476" width="2.2" height="1" fill="#7e7e80"/>
<rect x="395.7" y="476" width="2.2" height="1" fill="#7e7e80"/>
<rect x="415.7" y="476" width="2.2" height="1" fill="#7e7e80"/>
<rect x="435.7" y="476" width="2.2" height="1" fill="#7e7e80"/>
<rect x="455.7" y="476" width="2.2" height="1" fill="#7e7e80"/>
<rect x="475.7" y="476" width="2.2" height="1" fill="#7e7e80"/>
<rect x="495.7" y="476" width="2.2" height="1" fill="#7e7e80"/>
<rect x="515.7" y="476" width="2.2" height="1" fill="#7e7e80"/>
<rect x="535.7" y="476" width="2.2" height="1" fill="#7e7e80"/>
<rect x="555.7" y="476" width="2.2" height="1" fill="#7e7e80"/>
<rect x="575.7" y="476" width="2.2" height="1" fill="#7e7e80"/>
<rect x="595.7" y="476" width="2.2" height="1" fill="#7e7e80"/>
<rect x="615.7" y="476" width="2.2" height="1" fill="#7e7e80"/>
<rect x="635.7" y="476" width="2.2" height="1" fill="#7e7e80"/>
<rect x="655.7" y="476" width="2.2" height="1" fill="#7e7e80"/>
<rect x="675.7" y="476" width="2.2" height="1" fill="#7e7e80"/>
<rect x="695.7" y="476" width="2.2" height="1" fill="#7e7e80"/>
<rect x="715.7" y="476" width="2.2" height="1" fill="#7e7e80"/>
<rect x="735.7" y="476" width="2.2" height="1" fill="#7e7e80"/>
<rect x="755.7" y="476" width="2.2" height="1" fill="#7e7e80"/>
<rect x="775.7" y="476" width="2.2" height="1" fill="#7e7e80"/>
<rect x="795.7" y="476" width="2.2" height="1" fill="#7e7e80"/>
<rect x="815.7" y="476" width="2.2" height="1" fill="#7e7e80"/>
<rect x="835.7" y="476" width="2.2" height="1" fill="#7e7e80"/>
<rect x="855.7" y="476" width="2.2" height="1" fill="#7e7e80"/>
<rect x="875.7" y="476" width="2.2" height="1" fill="#7e7e80"/>
<rect x="895.7" y="476" width="2.2" height="1" fill="#7e7e80"/>
<rect x="915.7" y="476" width="2.2" height="1" fill="#7e7e80"/>
<rect x="935.7" y="476" width="2.2" height="1" fill="#7e7e80"/>
<rect x="955.7" y="476" width="2.2" height="1" fill="#7e7e80"/>
<rect x="975.7" y="476" width="2.2" height="1" fill="#7e7e80"/>
<rect x="995.7" y="476" width="2.2" height="1" fill="#7e7e80"/>
<rect x="716" y="47.5" width="1" height="2" fill="#86868a"/>
<rect x="716" y="59.5" width="1" height="2" fill="#86868a"/>
<rect x="716" y="72.5" width="1" height="2" fill="#86868a"/>
<rect x="716" y="84.5" width="1" height="2" fill="#86868a"/>
<rect x="716" y="97.5" width="1" height="2" fill="#86868a"/>
<rect x="716" y="110.5" width="1" height="2" fill="#86868a"/>
<rect x="716" y="122.5" width="1" height="2" fill="#86868a"/>
<rect x="716" y="135.5" width="1" height="2" fill="#86868a"/>
<rect x="716" y="147.5" width="1" height="2" fill="#86868a"/>
<rect x="716" y="160.5" width="1" height="2" fill="#86868a"/>
<rect x="716" y="173.5" width="1" height="2" fill="#86868a"/>
<rect x="716" y="185.5" width="1" height="2" fill="#86868a"/>
<rect x="716" y="198.5" width="1" height="2" fill="#86868a"/>
<rect x="716" y="210.5" width="1" height="2" fill="#86868a"/>
<rect x="716" y="223.5" width="1" height="2" fill="#86868a"/>
<rect x="716" y="236.5" width="1" height="2" fill="#86868a"/>
<rect x="716" y="248.5" width="1" height="2" fill="#86868a"/>
<rect x="716" y="261.5" width="1" height="2" fill="#86868a"/>
<rect x="716" y="273.5" width="1" height="2" fill="#86868a"/>
<rect x="716" y="286.5" width="1" height="2" fill="#86868a"/>
<rect x="716" y="299.5" width="1" height="2" fill="#86868a"/>
<rect x="716" y="311.5" width="1" height="2" fill="#86868a"/>
<rect x="716" y="324.5" width="1" height="2" fill="#86868a"/>
<rect x="716" y="336.5" width="1" height="2" fill="#86868a"/>
<rect x="716" y="349.5" width="1" height="2" fill="#86868a"/>
<rect x="716" y="361.5" width="1" height="2" fill="#86868a"/>
<rect x="716" y="374.5" width="1" height="2" fill="#86868a"/>
<rect x="716" y="387.5" width="1" height="2" fill="#86868a"/>
<rect x="716" y="399.5" width="1" height="2" fill="#86868a"/>
<rect x="716" y="412.5" width="1" height="2" fill="#86868a"/>
<rect x="716" y="424.5" width="1" height="2" fill="#86868a"/>
<rect x="716" y="437.5" width="1" height="2" fill="#86868a"/>
<rect x="716" y="450.5" width="1" height="2" fill="#86868a"/>
<rect x="716" y="462.5" width="1" height="2" fill="#86868a"/>
<rect x="716" y="475.5" width="1" height="2" fill="#86868a"/>
<rect x="716" y="487.5" width="1" height="2" fill="#86868a"/>
<rect x="716" y="500.5" width="1" height="2" fill="#86868a"/>
<rect x="716" y="513.5" width="1" height="2" fill="#86868a"/>
<rect x="716" y="525.5" width="1" height="2" fill="#86868a"/>
<rect x="716" y="538.5" width="1" height="2" fill="#86868a"/>
<rect x="716" y="550.5" width="1" height="2" fill="#86868a"/>
<rect x="716" y="563.5" width="1" height="2" fill="#86868a"/>
<rect x="716" y="575.5" width="1" height="2" fill="#86868a"/>
<rect x="716" y="588.5" width="1" height="2" fill="#86868a"/>
<rect x="716" y="601.5" width="1" height="2" fill="#86868a"/>
<rect x="716" y="613.5" width="1" height="2" fill="#86868a"/>
<rect x="716" y="626.5" width="1" height="2" fill="#86868a"/>
<rect x="716" y="638.5" width="1" height="2" fill="#86868a"/>
<rect x="716" y="651.5" width="1" height="2" fill="#86868a"/>
<rect x="35.7" y="539" width="2.2" height="1" fill="#7e7e80"/>
<rect x="55.7" y="539" width="2.2" height="1" fill="#7e7e80"/>
<rect x="75.7" y="539" width="2.2" height="1" fill="#7e7e80"/>
<rect x="95.7" y="539" width="2.2" height="1" fill="#7e7e80"/>
<rect x="115.7" y="539" width="2.2" height="1" fill="#7e7e80"/>
<rect x="135.7" y="539" width="2.2" height="1" fill="#7e7e80"/>
<rect x="155.7" y="539" width="2.2" height="1" fill="#7e7e80"/>
<rect x="175.7" y="539" width="2.2" height="1" fill="#7e7e80"/>
<rect x="195.7" y="539" width="2.2" height="1" fill="#7e7e80"/>
<rect x="215.7" y="539" width="2.2" height="1" fill="#7e7e80"/>
<rect x="235.7" y="539" width="2.2" height="1" fill="#7e7e80"/>
<rect x="255.7" y="539" width="2.2" height="1" fill="#7e7e80"/>
<rect x="275.7" y="539" width="2.2" height="1" fill="#7e7e80"/>
<rect x="295.7" y="539" width="2.2" height="1" fill="#7e7e80"/>
<rect x="315.7" y="539" width="2.2" height="1" fill="#7e7e80"/>
<rect x="335.7" y="539" width="2.2" height="1" fill="#7e7e80"/>
<rect x="355.7" y="539" width="2.2" height="1" fill="#7e7e80"/>
<rect x="375.7" y="539" width="2.2" height="1" fill="#7e7e80"/>
<rect x="395.7" y="539" width="2.2" height="1" fill="#7e7e80"/>
<rect x="415.7" y="539" width="2.2" height="1" fill="#7e7e80"/>
<rect x="435.7" y="539" width="2.2" height="1" fill="#7e7e80"/>
<rect x="455.7" y="539" width="2.2" height="1" fill="#7e7e80"/>
<rect x="475.7" y="539" width="2.2" height="1" fill="#7e7e80"/>
<rect x="495.7" y="539" width="2.2" height="1" fill="#7e7e80"/>
<rect x="515.7" y="539" width="2.2" height="1" fill="#7e7e80"/>
<rect x="535.7" y="539" width="2.2" height="1" fill="#7e7e80"/>
<rect x="555.7" y="539" width="2.2" height="1" fill="#7e7e80"/>
<rect x="575.7" y="539" width="2.2" height="1" fill="#7e7e80"/>
<rect x="595.7" y="539" width="2.2" height="1" fill="#7e7e80"/>
<rect x="615.7" y="539" width="2.2" height="1" fill="#7e7e80"/>
<rect x="635.7" y="539" width="2.2" height="1" fill="#7e7e80"/>
<rect x="655.7" y="539" width="2.2" height="1" fill="#7e7e80"/>
<rect x="675.7" y="539" width="2.2" height="1" fill="#7e7e80"/>
<rect x="695.7" y="539" width="2.2" height="1" fill="#7e7e80"/>
<rect x="715.7" y="539" width="2.2" height="1" fill="#7e7e80"/>
<rect x="735.7" y="539" width="2.2" height="1" fill="#7e7e80"/>
<rect x="755.7" y="539" width="2.2" height="1" fill="#7e7e80"/>
<rect x="775.7" y="539" width="2.2" height="1" fill="#7e7e80"/>
<rect x="795.7" y="539" width="2.2" height="1" fill="#7e7e80"/>
<rect x="815.7" y="539" width="2.2" height="1" fill="#7e7e80"/>
<rect x="835.7" y="539" width="2.2" height="1" fill="#7e7e80"/>
<rect x="855.7" y="539" width="2.2" height="1" fill="#7e7e80"/>
<rect x="875.7" y="539" width="2.2" height="1" fill="#7e7e80"/>
<rect x="895.7" y="539" width="2.2" height="1" fill="#7e7e80"/>
<rect x="915.7" y="539" width="2.2" height="1" fill="#7e7e80"/>
<rect x="935.7" y="539" width="2.2" height="1" fill="#7e7e80"/>
<rect x="955.7" y="539" width="2.2" height="1" fill="#7e7e80"/>
<rect x="975.7" y="539" width="2.2" height="1" fill="#7e7e80"/>
<rect x="995.7" y="539" width="2.2" height="1" fill="#7e7e80"/>
<rect x="816" y="47.5" width="1" height="2" fill="#86868a"/>
<rect x="816" y="59.5" width="1" height="2" fill="#86868a"/>
<rect x="816" y="72.5" width="1" height="2" fill="#86868a"/>
<rect x="816" y="84.5" width="1" height="2" fill="#86868a"/>
<rect x="816" y="97.5" width="1" height="2" fill="#86868a"/>
<rect x="816" y="110.5" width="1" height="2" fill="#86868a"/>
<rect x="816" y="122.5" width="1" height="2" fill="#86868a"/>
<rect x="816" y="135.5" width="1" height="2" fill="#86868a"/>
<rect x="816" y="147.5" width="1" height="2" fill="#86868a"/>
<rect x="816" y="160.5" width="1" height="2" fill="#86868a"/>
<rect x="816" y="173.5" width="1" height="2" fill="#86868a"/>
<rect x="816" y="185.5" width="1" height="2" fill="#86868a"/>
<rect x="816" y="198.5" width="1" height="2" fill="#86868a"/>
<rect x="816" y="210.5" width="1" height="2" fill="#86868a"/>
<rect x="816" y="223.5" width="1" height="2" fill="#86868a"/>
<rect x="816" y="236.5" width="1" height="2" fill="#86868a"/>
<rect x="816" y="248.5" width="1" height="2" fill="#86868a"/>
<rect x="816" y="261.5" width="1" height="2" fill="#86868a"/>
<rect x="816" y="273.5" width="1" height="2" fill="#86868a"/>
<rect x="816" y="286.5" width="1" height="2" fill="#86868a"/>
<rect x="816" y="299.5" width="1" height="2" fill="#86868a"/>
<rect x="816" y="311.5" width="1" height="2" fill="#86868a"/>
<rect x="816" y="324.5" width="1" height="2" fill="#86868a"/>
<rect x="816" y="336.5" width="1" height="2" fill="#86868a"/>
<rect x="816" y="349.5" width="1" height="2" fill="#86868a"/>
<rect x="816" y="361.5" width="1" height="2" fill="#86868a"/>
<rect x="816" y="374.5" width="1" height="2" fill="#86868a"/>
<rect x="816" y="387.5" width="1" height="2" fill="#86868a"/>
<rect x="816" y="399.5" width="1" height="2" fill="#86868a"/>
<rect x="816" y="412.5" width="1" height="2" fill="#86868a"/>
<rect x="816" y="424.5" width="1" height="2" fill="#86868a"/>
<rect x="816" y="437.5" width="1" height="2" fill="#86868a"/>
<rect x="816" y="450.5" width="1" height="2" fill="#86868a"/>
<rect x="816" y="462.5" width="1" height="2" fill="#86868a"/>
<rect x="816" y="475.5" width="1" height="2" fill="#86868a"/>
<rect x="816" y="487.5" width="1" height="2" fill="#86868a"/>
<rect x="816" y="500.5" width="1" height="2" fill="#86868a"/>
<rect x="816" y="513.5" width="1" height="2" fill="#86868a"/>
<rect x="816" y="525.5" width="1" height="2" fill="#86868a"/>
<rect x="816" y="538.5" width="1" height="2" fill="#86868a"/>
<rect x="816" y="550.5" width="1" height="2" fill="#86868a"/>
<rect x="816" y="563.5" width="1" height="2" fill="#86868a"/>
<rect x="816" y="575.5" width="1" height="2" fill="#86868a"/>
<rect x="816" y="588.5" width="1" height="2" fill="#86868a"/>
<rect x="816" y="601.5" width="1" height="2" fill="#86868a"/>
<rect x="816" y="613.5" width="1" height="2" fill="#86868a"/>
<rect x="816" y="626.5" width="1" height="2" fill="#86868a"/>
<rect x="816" y="638.5" width="1" height="2" fill="#86868a"/>
<rect x="816" y="651.5" width="1" height="2" fill="#86868a"/>
<rect x="35.7" y="602" width="2.2" height="1" fill="#7e7e80"/>
<rect x="55.7" y="602" width="2.2" height="1" fill="#7e7e80"/>
<rect x="75.7" y="602" width="2.2" height="1" fill="#7e7e80"/>
<rect x="95.7" y="602" width="2.2" height="1" fill="#7e7e80"/>
<rect x="115.7" y="602" width="2.2" height="1" fill="#7e7e80"/>
<rect x="135.7" y="602" width="2.2" height="1" fill="#7e7e80"/>
<rect x="155.7" y="602" width="2.2" height="1" fill="#7e7e80"/>
<rect x="175.7" y="602" width="2.2" height="1" fill="#7e7e80"/>
<rect x="195.7" y="602" width="2.2" height="1" fill="#7e7e80"/>
<rect x="215.7" y="602" width="2.2" height="1" fill="#7e7e80"/>
<rect x="235.7" y="602" width="2.2" height="1" fill="#7e7e80"/>
<rect x="255.7" y="602" width="2.2" height="1" fill="#7e7e80"/>
<rect x="275.7" y="602" width="2.2" height="1" fill="#7e7e80"/>
<rect x="295.7" y="602" width="2.2" height="1" fill="#7e7e80"/>
<rect x="315.7" y="602" width="2.2" height="1" fill="#7e7e80"/>
<rect x="335.7" y="602" width="2.2" height="1" fill="#7e7e80"/>
<rect x="355.7" y="602" width="2.2" height="1" fill="#7e7e80"/>
<rect x="375.7" y="602" width="2.2" height="1" fill="#7e7e80"/>
<rect x="395.7" y="602" width="2.2" height="1" fill="#7e7e80"/>
<rect x="415.7" y="602" width="2.2" height="1" fill="#7e7e80"/>
<rect x="435.7" y="602" width="2.2" height="1" fill="#7e7e80"/>
<rect x="455.7" y="602" width="2.2" height="1" fill="#7e7e80"/>
<rect x="475.7" y="602" width="2.2" height="1" fill="#7e7e80"/>
<rect x="495.7" y="602" width="2.2" height="1" fill="#7e7e80"/>
<rect x="515.7" y="602" width="2.2" height="1" fill="#7e7e80"/>
<rect x="535.7" y="602" width="2.2" height="1" fill="#7e7e80"/>
<rect x="555.7" y="602" width="2.2" height="1" fill="#7e7e80"/>
<rect x="575.7" y="602" width="2.2" height="1" fill="#7e7e80"/>
<rect x="595.7" y="602" width="2.2" height="1" fill="#7e7e80"/>
<rect x="615.7" y="602" width="2.2" height="1" fill="#7e7e80"/>
<rect x="635.7" y="602" width="2.2" height="1" fill="#7e7e80"/>
<rect x="655.7" y="602" width="2.2" height="1" fill="#7e7e80"/>
<rect x="675.7" y="602" width="2.2" height="1" fill="#7e7e80"/>
<rect x="695.7" y="602" width="2.2" height="1" fill="#7e7e80"/>
<rect x="715.7" y="602" width="2.2" height="1" fill="#7e7e80"/>
<rect x="735.7" y="602" width="2.2" height="1" fill="#7e7e80"/>
<rect x="755.7" y="602" width="2.2" height="1" fill="#7e7e80"/>
<rect x="775.7" y="602" width="2.2" height="1" fill="#7e7e80"/>
<rect x="795.7" y="602" width="2.2" height="1" fill="#7e7e80"/>
<rect x="815.7" y="602" width="2.2" height="1" fill="#7e7e80"/>
<rect x="835.7" y="602" width="2.2" height="1" fill="#7e7e80"/>
<rect x="855.7" y="602" width="2.2" height="1" fill="#7e7e80"/>
<rect x="875.7" y="602" width="2.2" height="1" fill="#7e7e80"/>
<rect x="895.7" y="602" width="2.2" height="1" fill="#7e7e80"/>
<rect x="915.7" y="602" width="2.2" height="1" fill="#7e7e80"/>
<rect x="935.7" y="602" width="2.2" height="1" fill="#7e7e80"/>
<rect x="955.7" y="602" width="2.2" height="1" fill="#7e7e80"/>
<rect x="975.7" y="602" width="2.2" height="1" fill="#7e7e80"/>
<rect x="995.7" y="602" width="2.2" height="1" fill="#7e7e80"/>
<rect x="916" y="47.5" width="1" height="2" fill="#86868a"/>
<rect x="916" y="59.5" width="1" height="2" fill="#86868a"/>
<rect x="916" y="72.5" width="1" height="2" fill="#86868a"/>
<rect x="916" y="84.5" width="1" height="2" fill="#86868a"/>
<rect x="916" y="97.5" width="1" height="2" fill="#86868a"/>
<rect x="916" y="110.5" width="1" height="2" fill="#86868a"/>
<rect x="916" y="122.5" width="1" height="2" fill="#86868a"/>
<rect x="916" y="135.5" width="1" height="2" fill="#86868a"/>
<rect x="916" y="147.5" width="1" height="2" fill="#86868a"/>
<rect x="916" y="160.5" width="1" height="2" fill="#86868a"/>
<rect x="916" y="173.5" width="1" height="2" fill="#86868a"/>
<rect x="916" y="185.5" width="1" height="2" fill="#86868a"/>
<rect x="916" y="198.5" width="1" height="2" fill="#86868a"/>
<rect x="916" y="210.5" width="1" height="2" fill="#86868a"/>
<rect x="916" y="223.5" width="1" height="2" fill="#86868a"/>
<rect x="916" y="236.5" width="1" height="2" fill="#86868a"/>
<rect x="916" y="248.5" width="1" height="2" fill="#86868a"/>
<rect x="916" y="261.5" width="1" height="2" fill="#86868a"/>
<rect x="916" y="273.5" width="1" height="2" fill="#86868a"/>
<rect x="916" y="286.5" width="1" height="2" fill="#86868a"/>
<rect x="916" y="299.5" width="1" height="2" fill="#86868a"/>
<rect x="916" y="311.5" width="1" height="2" fill="#86868a"/>
<rect x="916" y="324.5" width="1" height="2" fill="#86868a"/>
<rect x="916" y="336.5" width="1" height="2" fill="#86868a"/>
<rect x="916" y="349.5" width="1" height="2" fill="#86868a"/>
<rect x="916" y="361.5" width="1" height="2" fill="#86868a"/>
<rect x="916" y="374.5" width="1" height="2" fill="#86868a"/>
<rect x="916" y="387.5" width="1" height="2" fill="#86868a"/>
<rect x="916" y="399.5" width="1" height="2" fill="#86868a"/>
<rect x="916" y="412.5" width="1" height="2" fill="#86868a"/>
<rect x="916" y="424.5" width="1" height="2" fill="#86868a"/>
<rect x="916" y="437.5" width="1" height="2" fill="#86868a"/>
<rect x="916" y="450.5" width="1" height="2" fill="#86868a"/>
<rect x="916" y="462.5" width="1" height="2" fill="#86868a"/>
<rect x="916" y="475.5" width="1" height="2" fill="#86868a"/>
<rect x="916" y="487.5" width="1" height="2" fill="#86868a"/>
<rect x="916" y="500.5" width="1" height="2" fill="#86868a"/>
<rect x="916" y="513.5" width="1" height="2" fill="#86868a"/>
<rect x="916" y="525.5" width="1" height="2" fill="#86868a"/>
<rect x="916" y="538.5" width="1" height="2" fill="#86868a"/>
<rect x="916" y="550.5" width="1" height="2" fill="#86868a"/>
<rect x="916" y="563.5" width="1" height="2" fill="#86868a"/>
<rect x="916" y="575.5" width="1" height="2" fill="#86868a"/>
<rect x="916" y="588.5" width="1" height="2" fill="#86868a"/>
<rect x="916" y="601.5" width="1" height="2" fill="#86868a"/>
<rect x="916" y="613.5" width="1" height="2" fill="#86868a"/>
<rect x="916" y="626.5" width="1" height="2" fill="#86868a"/>
<rect x="916" y="638.5" width="1" height="2" fill="#86868a"/>
<rect x="916" y="651.5" width="1" height="2" fill="#86868a"/>
<rect x="516" y="36" width="1" height="629" fill="#b8b4aa"/>
<rect x="17" y="350" width="999" height="1" fill="#b8b4aa"/>
<rect x="36" y="36" width="1" height="6" fill="#cfcdc4"/>
<rect x="36" y="659" width="1" height="6" fill="#cfcdc4"/>
<rect x="17" y="48" width="6" height="1" fill="#cfcdc4"/>
<rect x="1010" y="48" width="6" height="1" fill="#cfcdc4"/>
<rect x="36" y="347" width="1" height="7" fill="#cfcdc4"/>
<rect x="513" y="48" width="7" height="1" fill="#cfcdc4"/>
<rect x="56" y="36" width="1" height="6" fill="#cfcdc4"/>
<rect x="56" y="659" width="1" height="6" fill="#cfcdc4"/>
<rect x="17" y="60" width="6" height="1" fill="#cfcdc4"/>
<rect x="1010" y="60" width="6" height="1" fill="#cfcdc4"/>
<rect x="56" y="347" width="1" height="7" fill="#cfcdc4"/>
<rect x="513" y="60" width="7" height="1" fill="#cfcdc4"/>
<rect x="76" y="36" width="1" height="6" fill="#cfcdc4"/>
<rect x="76" y="659" width="1" height="6" fill="#cfcdc4"/>
<rect x="17" y="73" width="6" height="1" fill="#cfcdc4"/>
<rect x="1010" y="73" width="6" height="1" fill="#cfcdc4"/>
<rect x="76" y="347" width="1" height="7" fill="#cfcdc4"/>
<rect x="513" y="73" width="7" height="1" fill="#cfcdc4"/>
<rect x="96" y="36" width="1" height="6" fill="#cfcdc4"/>
<rect x="96" y="659" width="1" height="6" fill="#cfcdc4"/>
<rect x="17" y="85" width="6" height="1" fill="#cfcdc4"/>
<rect x="1010" y="85" width="6" height="1" fill="#cfcdc4"/>
<rect x="96" y="347" width="1" height="7" fill="#cfcdc4"/>
<rect x="513" y="85" width="7" height="1" fill="#cfcdc4"/>
<rect x="116" y="36" width="1" height="14" fill="#cfcdc4"/>
<rect x="116" y="651" width="1" height="14" fill="#cfcdc4"/>
<rect x="17" y="98" width="12" height="1" fill="#cfcdc4"/>
<rect x="1004" y="98" width="12" height="1" fill="#cfcdc4"/>
<rect x="116" y="344" width="1" height="13" fill="#cfcdc4"/>
<rect x="510" y="98" width="13" height="1" fill="#cfcdc4"/>
<rect x="136" y="36" width="1" height="6" fill="#cfcdc4"/>
<rect x="136" y="659" width="1" height="6" fill="#cfcdc4"/>
<rect x="17" y="111" width="6" height="1" fill="#cfcdc4"/>
<rect x="1010" y="111" width="6" height="1" fill="#cfcdc4"/>
<rect x="136" y="347" width="1" height="7" fill="#cfcdc4"/>
<rect x="513" y="111" width="7" height="1" fill="#cfcdc4"/>
<rect x="156" y="36" width="1" height="6" fill="#cfcdc4"/>
<rect x="156" y="659" width="1" height="6" fill="#cfcdc4"/>
<rect x="17" y="123" width="6" height="1" fill="#cfcdc4"/>
<rect x="1010" y="123" width="6" height="1" fill="#cfcdc4"/>
<rect x="156" y="347" width="1" height="7" fill="#cfcdc4"/>
<rect x="513" y="123" width="7" height="1" fill="#cfcdc4"/>
<rect x="176" y="36" width="1" height="6" fill="#cfcdc4"/>
<rect x="176" y="659" width="1" height="6" fill="#cfcdc4"/>
<rect x="17" y="136" width="6" height="1" fill="#cfcdc4"/>
<rect x="1010" y="136" width="6" height="1" fill="#cfcdc4"/>
<rect x="176" y="347" width="1" height="7" fill="#cfcdc4"/>
<rect x="513" y="136" width="7" height="1" fill="#cfcdc4"/>
<rect x="196" y="36" width="1" height="6" fill="#cfcdc4"/>
<rect x="196" y="659" width="1" height="6" fill="#cfcdc4"/>
<rect x="17" y="148" width="6" height="1" fill="#cfcdc4"/>
<rect x="1010" y="148" width="6" height="1" fill="#cfcdc4"/>
<rect x="196" y="347" width="1" height="7" fill="#cfcdc4"/>
<rect x="513" y="148" width="7" height="1" fill="#cfcdc4"/>
<rect x="216" y="36" width="1" height="14" fill="#cfcdc4"/>
<rect x="216" y="651" width="1" height="14" fill="#cfcdc4"/>
<rect x="17" y="161" width="12" height="1" fill="#cfcdc4"/>
<rect x="1004" y="161" width="12" height="1" fill="#cfcdc4"/>
<rect x="216" y="344" width="1" height="13" fill="#cfcdc4"/>
<rect x="510" y="161" width="13" height="1" fill="#cfcdc4"/>
<rect x="236" y="36" width="1" height="6" fill="#cfcdc4"/>
<rect x="236" y="659" width="1" height="6" fill="#cfcdc4"/>
<rect x="17" y="174" width="6" height="1" fill="#cfcdc4"/>
<rect x="1010" y="174" width="6" height="1" fill="#cfcdc4"/>
<rect x="236" y="347" width="1" height="7" fill="#cfcdc4"/>
<rect x="513" y="174" width="7" height="1" fill="#cfcdc4"/>
<rect x="256" y="36" width="1" height="6" fill="#cfcdc4"/>
<rect x="256" y="659" width="1" height="6" fill="#cfcdc4"/>
<rect x="17" y="186" width="6" height="1" fill="#cfcdc4"/>
<rect x="1010" y="186" width="6" height="1" fill="#cfcdc4"/>
<rect x="256" y="347" width="1" height="7" fill="#cfcdc4"/>
<rect x="513" y="186" width="7" height="1" fill="#cfcdc4"/>
<rect x="276" y="36" width="1" height="6" fill="#cfcdc4"/>
<rect x="276" y="659" width="1" height="6" fill="#cfcdc4"/>
<rect x="17" y="199" width="6" height="1" fill="#cfcdc4"/>
<rect x="1010" y="199" width="6" height="1" fill="#cfcdc4"/>
<rect x="276" y="347" width="1" height="7" fill="#cfcdc4"/>
<rect x="513" y="199" width="7" height="1" fill="#cfcdc4"/>
<rect x="296" y="36" width="1" height="6" fill="#cfcdc4"/>
<rect x="296" y="659" width="1" height="6" fill="#cfcdc4"/>
<rect x="17" y="211" width="6" height="1" fill="#cfcdc4"/>
<rect x="1010" y="211" width="6" height="1" fill="#cfcdc4"/>
<rect x="296" y="347" width="1" height="7" fill="#cfcdc4"/>
<rect x="513" y="211" width="7" height="1" fill="#cfcdc4"/>
<rect x="316" y="36" width="1" height="14" fill="#cfcdc4"/>
<rect x="316" y="651" width="1" height="14" fill="#cfcdc4"/>
<rect x="17" y="224" width="12" height="1" fill="#cfcdc4"/>
<rect x="1004" y="224" width="12" height="1" fill="#cfcdc4"/>
<rect x="316" y="344" width="1" height="13" fill="#cfcdc4"/>
<rect x="510" y="224" width="13" height="1" fill="#cfcdc4"/>
<rect x="336" y="36" width="1" height="6" fill="#cfcdc4"/>
<rect x="336" y="659" width="1" height="6" fill="#cfcdc4"/>
<rect x="17" y="237" width="6" height="1" fill="#cfcdc4"/>
<rect x="1010" y="237" width="6" height="1" fill="#cfcdc4"/>
<rect x="336" y="347" width="1" height="7" fill="#cfcdc4"/>
<rect x="513" y="237" width="7" height="1" fill="#cfcdc4"/>
<rect x="356" y="36" width="1" height="6" fill="#cfcdc4"/>
<rect x="356" y="659" width="1" height="6" fill="#cfcdc4"/>
<rect x="17" y="249" width="6" height="1" fill="#cfcdc4"/>
<rect x="1010" y="249" width="6" height="1" fill="#cfcdc4"/>
<rect x="356" y="347" width="1" height="7" fill="#cfcdc4"/>
<rect x="513" y="249" width="7" height="1" fill="#cfcdc4"/>
<rect x="376" y="36" width="1" height="6" fill="#cfcdc4"/>
<rect x="376" y="659" width="1" height="6" fill="#cfcdc4"/>
<rect x="17" y="262" width="6" height="1" fill="#cfcdc4"/>
<rect x="1010" y="262" width="6" height="1" fill="#cfcdc4"/>
<rect x="376" y="347" width="1" height="7" fill="#cfcdc4"/>
<rect x="513" y="262" width="7" height="1" fill="#cfcdc4"/>
<rect x="396" y="36" width="1" height="6" fill="#cfcdc4"/>
<rect x="396" y="659" width="1" height="6" fill="#cfcdc4"/>
<rect x="17" y="274" width="6" height="1" fill="#cfcdc4"/>
<rect x="1010" y="274" width="6" height="1" fill="#cfcdc4"/>
<rect x="396" y="347" width="1" height="7" fill="#cfcdc4"/>
<rect x="513" y="274" width="7" height="1" fill="#cfcdc4"/>
<rect x="416" y="36" width="1" height="14" fill="#cfcdc4"/>
<rect x="416" y="651" width="1" height="14" fill="#cfcdc4"/>
<rect x="17" y="287" width="12" height="1" fill="#cfcdc4"/>
<rect x="1004" y="287" width="12" height="1" fill="#cfcdc4"/>
<rect x="416" y="344" width="1" height="13" fill="#cfcdc4"/>
<rect x="510" y="287" width="13" height="1" fill="#cfcdc4"/>
<rect x="436" y="36" width="1" height="6" fill="#cfcdc4"/>
<rect x="436" y="659" width="1" height="6" fill="#cfcdc4"/>
<rect x="17" y="300" width="6" height="1" fill="#cfcdc4"/>
<rect x="1010" y="300" width="6" height="1" fill="#cfcdc4"/>
<rect x="436" y="347" width="1" height="7" fill="#cfcdc4"/>
<rect x="513" y="300" width="7" height="1" fill="#cfcdc4"/>
<rect x="456" y="36" width="1" height="6" fill="#cfcdc4"/>
<rect x="456" y="659" width="1" height="6" fill="#cfcdc4"/>
<rect x="17" y="312" width="6" height="1" fill="#cfcdc4"/>
<rect x="1010" y="312" width="6" height="1" fill="#cfcdc4"/>
<rect x="456" y="347" width="1" height="7" fill="#cfcdc4"/>
<rect x="513" y="312" width="7" height="1" fill="#cfcdc4"/>
<rect x="476" y="36" width="1" height="6" fill="#cfcdc4"/>
<rect x="476" y="659" width="1" height="6" fill="#cfcdc4"/>
<rect x="17" y="325" width="6" height="1" fill="#cfcdc4"/>
<rect x="1010" y="325" width="6" height="1" fill="#cfcdc4"/>
<rect x="476" y="347" width="1" height="7" fill="#cfcdc4"/>
<rect x="513" y="325" width="7" height="1" fill="#cfcdc4"/>
<rect x="496" y="36" width="1" height="6" fill="#cfcdc4"/>
<rect x="496" y="659" width="1" height="6" fill="#cfcdc4"/>
<rect x="17" y="337" width="6" height="1" fill="#cfcdc4"/>
<rect x="1010" y="337" width="6" height="1" fill="#cfcdc4"/>
<rect x="496" y="347" width="1" height="7" fill="#cfcdc4"/>
<rect x="513" y="337" width="7" height="1" fill="#cfcdc4"/>
<rect x="516" y="36" width="1" height="14" fill="#cfcdc4"/>
<rect x="516" y="651" width="1" height="14" fill="#cfcdc4"/>
<rect x="17" y="350" width="12" height="1" fill="#cfcdc4"/>
<rect x="1004" y="350" width="12" height="1" fill="#cfcdc4"/>
<rect x="516" y="344" width="1" height="13" fill="#cfcdc4"/>
<rect x="510" y="350" width="13" height="1" fill="#cfcdc4"/>
<rect x="536" y="36" width="1" height="6" fill="#cfcdc4"/>
<rect x="536" y="659" width="1" height="6" fill="#cfcdc4"/>
<rect x="17" y="362" width="6" height="1" fill="#cfcdc4"/>
<rect x="1010" y="362" width="6" height="1" fill="#cfcdc4"/>
<rect x="536" y="347" width="1" height="7" fill="#cfcdc4"/>
<rect x="513" y="362" width="7" height="1" fill="#cfcdc4"/>
<rect x="556" y="36" width="1" height="6" fill="#cfcdc4"/>
<rect x="556" y="659" width="1" height="6" fill="#cfcdc4"/>
<rect x="17" y="375" width="6" height="1" fill="#cfcdc4"/>
<rect x="1010" y="375" width="6" height="1" fill="#cfcdc4"/>
<rect x="556" y="347" width="1" height="7" fill="#cfcdc4"/>
<rect x="513" y="375" width="7" height="1" fill="#cfcdc4"/>
<rect x="576" y="36" width="1" height="6" fill="#cfcdc4"/>
<rect x="576" y="659" width="1" height="6" fill="#cfcdc4"/>
<rect x="17" y="388" width="6" height="1" fill="#cfcdc4"/>
<rect x="1010" y="388" width="6" height="1" fill="#cfcdc4"/>
<rect x="576" y="347" width="1" height="7" fill="#cfcdc4"/>
<rect x="513" y="388" width="7" height="1" fill="#cfcdc4"/>
<rect x="596" y="36" width="1" height="6" fill="#cfcdc4"/>
<rect x="596" y="659" width="1" height="6" fill="#cfcdc4"/>
<rect x="17" y="400" width="6" height="1" fill="#cfcdc4"/>
<rect x="1010" y="400" width="6" height="1" fill="#cfcdc4"/>
<rect x="596" y="347" width="1" height="7" fill="#cfcdc4"/>
<rect x="513" y="400" width="7" height="1" fill="#cfcdc4"/>
<rect x="616" y="36" width="1" height="14" fill="#cfcdc4"/>
<rect x="616" y="651" width="1" height="14" fill="#cfcdc4"/>
<rect x="17" y="413" width="12" height="1" fill="#cfcdc4"/>
<rect x="1004" y="413" width="12" height="1" fill="#cfcdc4"/>
<rect x="616" y="344" width="1" height="13" fill="#cfcdc4"/>
<rect x="510" y="413" width="13" height="1" fill="#cfcdc4"/>
<rect x="636" y="36" width="1" height="6" fill="#cfcdc4"/>
<rect x="636" y="659" width="1" height="6" fill="#cfcdc4"/>
<rect x="17" y="425" width="6" height="1" fill="#cfcdc4"/>
<rect x="1010" y="425" width="6" height="1" fill="#cfcdc4"/>
<rect x="636" y="347" width="1" height="7" fill="#cfcdc4"/>
<rect x="513" y="425" width="7" height="1" fill="#cfcdc4"/>
<rect x="656" y="36" width="1" height="6" fill="#cfcdc4"/>
<rect x="656" y="659" width="1" height="6" fill="#cfcdc4"/>
<rect x="17" y="438" width="6" height="1" fill="#cfcdc4"/>
<rect x="1010" y="438" width="6" height="1" fill="#cfcdc4"/>
<rect x="656" y="347" width="1" height="7" fill="#cfcdc4"/>
<rect x="513" y="438" width="7" height="1" fill="#cfcdc4"/>
<rect x="676" y="36" width="1" height="6" fill="#cfcdc4"/>
<rect x="676" y="659" width="1" height="6" fill="#cfcdc4"/>
<rect x="17" y="451" width="6" height="1" fill="#cfcdc4"/>
<rect x="1010" y="451" width="6" height="1" fill="#cfcdc4"/>
<rect x="676" y="347" width="1" height="7" fill="#cfcdc4"/>
<rect x="513" y="451" width="7" height="1" fill="#cfcdc4"/>
<rect x="696" y="36" width="1" height="6" fill="#cfcdc4"/>
<rect x="696" y="659" width="1" height="6" fill="#cfcdc4"/>
<rect x="17" y="463" width="6" height="1" fill="#cfcdc4"/>
<rect x="1010" y="463" width="6" height="1" fill="#cfcdc4"/>
<rect x="696" y="347" width="1" height="7" fill="#cfcdc4"/>
<rect x="513" y="463" width="7" height="1" fill="#cfcdc4"/>
<rect x="716" y="36" width="1" height="14" fill="#cfcdc4"/>
<rect x="716" y="651" width="1" height="14" fill="#cfcdc4"/>
<rect x="17" y="476" width="12" height="1" fill="#cfcdc4"/>
<rect x="1004" y="476" width="12" height="1" fill="#cfcdc4"/>
<rect x="716" y="344" width="1" height="13" fill="#cfcdc4"/>
<rect x="510" y="476" width="13" height="1" fill="#cfcdc4"/>
<rect x="736" y="36" width="1" height="6" fill="#cfcdc4"/>
<rect x="736" y="659" width="1" height="6" fill="#cfcdc4"/>
<rect x="17" y="488" width="6" height="1" fill="#cfcdc4"/>
<rect x="1010" y="488" width="6" height="1" fill="#cfcdc4"/>
<rect x="736" y="347" width="1" height="7" fill="#cfcdc4"/>
<rect x="513" y="488" width="7" height="1" fill="#cfcdc4"/>
<rect x="756" y="36" width="1" height="6" fill="#cfcdc4"/>
<rect x="756" y="659" width="1" height="6" fill="#cfcdc4"/>
<rect x="17" y="501" width="6" height="1" fill="#cfcdc4"/>
<rect x="1010" y="501" width="6" height="1" fill="#cfcdc4"/>
<rect x="756" y="347" width="1" height="7" fill="#cfcdc4"/>
<rect x="513" y="501" width="7" height="1" fill="#cfcdc4"/>
<rect x="776" y="36" width="1" height="6" fill="#cfcdc4"/>
<rect x="776" y="659" width="1" height="6" fill="#cfcdc4"/>
<rect x="17" y="514" width="6" height="1" fill="#cfcdc4"/>
<rect x="1010" y="514" width="6" height="1" fill="#cfcdc4"/>
<rect x="776" y="347" width="1" height="7" fill="#cfcdc4"/>
<rect x="513" y="514" width="7" height="1" fill="#cfcdc4"/>
<rect x="796" y="36" width="1" height="6" fill="#cfcdc4"/>
<rect x="796" y="659" width="1" height="6" fill="#cfcdc4"/>
<rect x="17" y="526" width="6" height="1" fill="#cfcdc4"/>
<rect x="1010" y="526" width="6" height="1" fill="#cfcdc4"/>
<rect x="796" y="347" width="1" height="7" fill="#cfcdc4"/>
<rect x="513" y="526" width="7" height="1" fill="#cfcdc4"/>
<rect x="816" y="36" width="1" height="14" fill="#cfcdc4"/>
<rect x="816" y="651" width="1" height="14" fill="#cfcdc4"/>
<rect x="17" y="539" width="12" height="1" fill="#cfcdc4"/>
<rect x="1004" y="539" width="12" height="1" fill="#cfcdc4"/>
<rect x="816" y="344" width="1" height="13" fill="#cfcdc4"/>
<rect x="510" y="539" width="13" height="1" fill="#cfcdc4"/>
<rect x="836" y="36" width="1" height="6" fill="#cfcdc4"/>
<rect x="836" y="659" width="1" height="6" fill="#cfcdc4"/>
<rect x="17" y="551" width="6" height="1" fill="#cfcdc4"/>
<rect x="1010" y="551" width="6" height="1" fill="#cfcdc4"/>
<rect x="836" y="347" width="1" height="7" fill="#cfcdc4"/>
<rect x="513" y="551" width="7" height="1" fill="#cfcdc4"/>
<rect x="856" y="36" width="1" height="6" fill="#cfcdc4"/>
<rect x="856" y="659" width="1" height="6" fill="#cfcdc4"/>
<rect x="17" y="564" width="6" height="1" fill="#cfcdc4"/>
<rect x="1010" y="564" width="6" height="1" fill="#cfcdc4"/>
<rect x="856" y="347" width="1" height="7" fill="#cfcdc4"/>
<rect x="513" y="564" width="7" height="1" fill="#cfcdc4"/>
<rect x="876" y="36" width="1" height="6" fill="#cfcdc4"/>
<rect x="876" y="659" width="1" height="6" fill="#cfcdc4"/>
<rect x="17" y="576" width="6" height="1" fill="#cfcdc4"/>
<rect x="1010" y="576" width="6" height="1" fill="#cfcdc4"/>
<rect x="876" y="347" width="1" height="7" fill="#cfcdc4"/>
<rect x="513" y="576" width="7" height="1" fill="#cfcdc4"/>
<rect x="896" y="36" width="1" height="6" fill="#cfcdc4"/>
<rect x="896" y="659" width="1" height="6" fill="#cfcdc4"/>
<rect x="17" y="589" width="6" height="1" fill="#cfcdc4"/>
<rect x="1010" y="589" width="6" height="1" fill="#cfcdc4"/>
<rect x="896" y="347" width="1" height="7" fill="#cfcdc4"/>
<rect x="513" y="589" width="7" height="1" fill="#cfcdc4"/>
<rect x="916" y="36" width="1" height="14" fill="#cfcdc4"/>
<rect x="916" y="651" width="1" height="14" fill="#cfcdc4"/>
<rect x="17" y="602" width="12" height="1" fill="#cfcdc4"/>
<rect x="1004" y="602" width="12" height="1" fill="#cfcdc4"/>
<rect x="916" y="344" width="1" height="13" fill="#cfcdc4"/>
<rect x="510" y="602" width="13" height="1" fill="#cfcdc4"/>
<rect x="936" y="36" width="1" height="6" fill="#cfcdc4"/>
<rect x="936" y="659" width="1" height="6" fill="#cfcdc4"/>
<rect x="17" y="614" width="6" height="1" fill="#cfcdc4"/>
<rect x="1010" y="614" width="6" height="1" fill="#cfcdc4"/>
<rect x="936" y="347" width="1" height="7" fill="#cfcdc4"/>
<rect x="513" y="614" width="7" height="1" fill="#cfcdc4"/>
<rect x="956" y="36" width="1" height="6" fill="#cfcdc4"/>
<rect x="956" y="659" width="1" height="6" fill="#cfcdc4"/>
<rect x="17" y="627" width="6" height="1" fill="#cfcdc4"/>
<rect x="1010" y="627" width="6" height="1" fill="#cfcdc4"/>
<rect x="956" y="347" width="1" height="7" fill="#cfcdc4"/>
<rect x="513" y="627" width="7" height="1" fill="#cfcdc4"/>
<rect x="976" y="36" width="1" height="6" fill="#cfcdc4"/>
<rect x="976" y="659" width="1" height="6" fill="#cfcdc4"/>
<rect x="17" y="639" width="6" height="1" fill="#cfcdc4"/>
<rect x="1010" y="639" width="6" height="1" fill="#cfcdc4"/>
<rect x="976" y="347" width="1" height="7" fill="#cfcdc4"/>
<rect x="513" y="639" width="7" height="1" fill="#cfcdc4"/>
<rect x="996" y="36" width="1" height="6" fill="#cfcdc4"/>
<rect x="996" y="659" width="1" height="6" fill="#cfcdc4"/>
<rect x="17" y="652" width="6" height="1" fill="#cfcdc4"/>
<rect x="1010" y="652" width="6" height="1" fill="#cfcdc4"/>
<rect x="996" y="347" width="1" height="7" fill="#cfcdc4"/>
<rect x="513" y="652" width="7" height="1" fill="#cfcdc4"/>
</g>
<path d="M511.6 36 L521.4 36 L516.5 44.6 Z" fill="#ff7c7c"/>
<path d="M17 126.56L17.5 126.61L18 124.12L18.5 126.65L19 126.69L19.5 125.46L20 126.22L20.5 126.47L21 126.67L21.5 126.61L22 125.93L22.5 126.66L23 126.6L23.5 126.46L24 125.35L24.5 126.39L25 125.98L25.5 125.07L26 125.55L26.5 126.43L27 126.15L27.5 126.26L28 126.25L28.5 126.57L29 126.13L29.5 126.38L30 126.7L30.5 126.6L31 126.7L31.5 126.69L32 126.32L32.5 126.44L33 126.7L33.5 126.69L34 126.7L34.5 126.65L35 126.66L35.5 125.77L36 126.69L36.5 125.49L37 126.62L37.5 126.54L38 126.69L38.5 126.6L39 126.64L39.5 125.82L40 125.99L40.5 126.53L41 126.61L41.5 126.69L42 125.68L42.5 126.66L43 125.8L43.5 126.4L44 126.48L44.5 125.98L45 126.69L45.5 124.42L46 126.42L46.5 126.68L47 126.56L47.5 126.16L48 126.65L48.5 126.29L49 126.48L49.5 126.7L50 125.94L50.5 126.69L51 123.31L51.5 126.32L52 125.04L52.5 125.52L53 125.12L53.5 126.57L54 125.96L54.5 125.7L55 126.25L55.5 126.66L56 126.46L56.5 126.65L57 124.71L57.5 126.61L58 126.35L58.5 126.33L59 126.11L59.5 126.07L60 126.38L60.5 126.66L61 126.34L61.5 126.38L62 125.99L62.5 126.52L63 126.69L63.5 126.4L64 126.47L64.5 126.32L65 126.56L65.5 126.54L66 126.53L66.5 126.52L67 126.32L67.5 126.67L68 125.22L68.5 126.44L69 126.53L69.5 126.11L70 126.27L70.5 123.96L71 125.89L71.5 126.37L72 126.7L72.5 126.53L73 126.3L73.5 126.63L74 124.29L74.5 125.96L75 126.55L75.5 124.46L76 125.59L76.5 126.7L77 125.63L77.5 126.46L78 126.59L78.5 125.67L79 125.18L79.5 126.35L80 126.6L80.5 124.44L81 125.31L81.5 126.63L82 126.58L82.5 126.35L83 126.58L83.5 126.3L84 126.2L84.5 125.38L85 124.73L85.5 126.38L86 126.35L86.5 125.61L87 125.24L87.5 125.61L88 125.91L88.5 126.44L89 125.44L89.5 126.24L90 126.69L90.5 126.7L91 126.23L91.5 125.81L92 125.69L92.5 126.55L93 126.07L93.5 126.59L94 126.62L94.5 126.51L95 124.47L95.5 126.7L96 125.83L96.5 126.7L97 126.43L97.5 126.5L98 126.66L98.5 126.61L99 126.48L99.5 126.57L100 126.52L100.5 126.51L101 126.63L101.5 126.01L102 126.53L102.5 126.39L103 125.64L103.5 126.56L104 126.54L104.5 126.69L105 126.7L105.5 124.2L106 125.9L106.5 126.3L107 126.17L107.5 126.43L108 126.68L108.5 126.66L109 126.09L109.5 126.67L110 126.54L110.5 126.57L111 125.85L111.5 126.48L112 126.65L112.5 125.98L113 126.28L113.5 126.63L114 126.14L114.5 126.22L115 126.7L115.5 126.65L116 126.22L116.5 126.45L117 126.53L117.5 125.98L118 126.45L118.5 125.29L119 126.66L119.5 126.7L120 126.19L120.5 126.66L121 126.6L121.5 124.67L122 126.1L122.5 125.77L123 126.45L123.5 126.51L124 126.6L124.5 126.56L125 126.01L125.5 125.6L126 126.45L126.5 126.05L127 126.68L127.5 126.3L128 126.65L128.5 125.77L129 126.56L129.5 126.7L130 126.6L130.5 126.67L131 126.29L131.5 126.51L132 126.61L132.5 126.2L133 126.68L133.5 126.28L134 126.7L134.5 126.68L135 125.14L135.5 126.14L136 125.58L136.5 125.83L137 126.59L137.5 126.7L138 126.7L138.5 126.34L139 126.62L139.5 126.46L140 125.14L140.5 126.64L141 126.39L141.5 126.57L142 126.68L142.5 126.17L143 126.39L143.5 126.22L144 125.92L144.5 126.39L145 126.67L145.5 125.75L146 126.2L146.5 126.7L147 126.26L147.5 126.63L148 126.38L148.5 126.31L149 126.5L149.5 126.5L150 126.38L150.5 125.93L151 126.69L151.5 126.63L152 126.44L152.5 126.54L153 125.81L153.5 126.48L154 125.64L154.5 125.88L155 126.44L155.5 126.57L156 126.13L156.5 126.33L157 126.7L157.5 124.81L158 126.7L158.5 126.06L159 125.57L159.5 125.94L160 126.38L160.5 126.7L161 123.48L161.5 126.05L162 126.25L162.5 126.5L163 125.84L163.5 126.14L164 125.99L164.5 126.52L165 126.23L165.5 126.67L166 126.61L166.5 126.52L167 126.57L167.5 123.83L168 126.42L168.5 126.52L169 126.54L169.5 126.12L170 125.74L170.5 125.29L171 125.72L171.5 124.69L172 126.57L172.5 126.68L173 126.49L173.5 126.03L174 126.31L174.5 126.66L175 124.75L175.5 126.7L176 126.25L176.5 126.49L177 126.68L177.5 126.59L178 126.67L178.5 126.62L179 122.41L179.5 126.33L180 126.18L180.5 126.49L181 126.4L181.5 126.44L182 125.99L182.5 126.65L183 126.51L183.5 125.07L184 126.6L184.5 126.4L185 126.7L185.5 126.7L186 126.18L186.5 126.29L187 125.86L187.5 125.99L188 126.64L188.5 125.93L189 126.65L189.5 126.7L190 125.4L190.5 125.99L191 126.67L191.5 125.91L192 126.19L192.5 126.21L193 124.3L193.5 126.66L194 126.43L194.5 126.54L195 126.68L195.5 126.66L196 126.68L196.5 126.48L197 126.57L197.5 126.59L198 126.26L198.5 126.3L199 126.67L199.5 123.73L200 126.65L200.5 126.38L201 126.49L201.5 126.59L202 126.39L202.5 125.85L203 125.38L203.5 125.88L204 125.55L204.5 126.68L205 126.07L205.5 125.34L206 126.66L206.5 126.12L207 126.69L207.5 125.83L208 126.4L208.5 126.29L209 125.22L209.5 126.66L210 126.59L210.5 126.65L211 125.62L211.5 126.65L212 125.35L212.5 125.13L213 125.51L213.5 126.2L214 125.51L214.5 125.63L215 123.5L215.5 124.25L216 123.71L216.5 123.67L217 124.63L217.5 125.37L218 125.8L218.5 126.1L219 126.15L219.5 126.47L220 126.42L220.5 125.86L221 126.58L221.5 126.56L222 126.49L222.5 125.98L223 125.73L223.5 126.32L224 126.37L224.5 126.3L225 125.64L225.5 126.58L226 126.68L226.5 125.92L227 124.92L227.5 125.64L228 126.5L228.5 125.31L229 126.66L229.5 126.4L230 126.7L230.5 126.21L231 125.74L231.5 126.46L232 126.06L232.5 126.41L233 126.66L233.5 125.84L234 126.65L234.5 124.46L235 126.07L235.5 125.97L236 126.19L236.5 126.61L237 126.69L237.5 125.56L238 126.69L238.5 125.82L239 126.38L239.5 126.39L240 126.31L240.5 126.68L241 126.66L241.5 126.41L242 125.76L242.5 126.13L243 125.3L243.5 126.63L244 126.65L244.5 125.92L245 126.69L245.5 126.65L246 125.89L246.5 126.63L247 126.68L247.5 126.57L248 126.33L248.5 126.11L249 126.23L249.5 126.67L250 126.59L250.5 125.09L251 126.68L251.5 126.69L252 126.19L252.5 125.95L253 125.74L253.5 126.05L254 125.79L254.5 126.48L255 126.35L255.5 124.58L256 125.93L256.5 126.67L257 126.66L257.5 126.51L258 126.65L258.5 126.31L259 126.55L259.5 126.7L260 126.2L260.5 126.61L261 126.22L261.5 125.96L262 126.69L262.5 124.77L263 126.39L263.5 125.4L264 125.87L264.5 125.12L265 126.65L265.5 126.37L266 126.46L266.5 126.33L267 126.07L267.5 126.54L268 126.28L268.5 126.7L269 126.7L269.5 125.21L270 126.67L270.5 125.85L271 126.35L271.5 125.96L272 126.69L272.5 126L273 125.92L273.5 125.57L274 126.55L274.5 126.42L275 126.64L275.5 124.43L276 126.2L276.5 126.58L277 126.66L277.5 126.67L278 126.1L278.5 126.51L279 126.54L279.5 126.4L280 126.42L280.5 126.69L281 126.39L281.5 126.19L282 126.47L282.5 126.7L283 126.36L283.5 126.18L284 125.92L284.5 125.36L285 126.7L285.5 126.31L286 125.37L286.5 125.7L287 126.63L287.5 126.39L288 126.59L288.5 125.49L289 126.09L289.5 126.61L290 126.68L290.5 125.31L291 125.65L291.5 126.43L292 126.02L292.5 125.01L293 126.7L293.5 126.59L294 126.6L294.5 126.7L295 126.42L295.5 126.58L296 125.49L296.5 125.89L297 126.51L297.5 126.45L298 126.42L298.5 126.69L299 126.44L299.5 126.64L300 126.3L300.5 124.31L301 126.66L301.5 126.48L302 126.69L302.5 126.33L303 125.79L303.5 126.58L304 126.61L304.5 124.4L305 126.63L305.5 126.28L306 126.63L306.5 126.68L307 125.93L307.5 126.65L308 126.47L308.5 126.1L309 126.13L309.5 125.79L310 126.61L310.5 126.34L311 124.84L311.5 126.63L312 125.24L312.5 126.54L313 123.98L313.5 126.11L314 126.54L314.5 126.7L315 126.5L315.5 126.2L316 126.22L316.5 125.52L317 126.54L317.5 126.69L318 125.03L318.5 125.24L319 124.74L319.5 126.11L320 126.58L320.5 125.98L321 126.7L321.5 126.69L322 125.5L322.5 126.67L323 125.65L323.5 126.39L324 126.66L324.5 124.55L325 126.29L325.5 126.66L326 126.61L326.5 126.68L327 126.35L327.5 125.62L328 126.04L328.5 125.55L329 126.54L329.5 126.64L330 126.53L330.5 126.13L331 125.92L331.5 126.24L332 126.61L332.5 126.5L333 126.66L333.5 126.34L334 126.07L334.5 126.63L335 126.14L335.5 126.5L336 126.47L336.5 126.6L337 126.67L337.5 126.6L338 126.24L338.5 126.69L339 126.53L339.5 126.67L340 126.16L340.5 126.39L341 126.69L341.5 126.08L342 125.94L342.5 126.39L343 126.62L343.5 125.27L344 126.68L344.5 126.55L345 126.57L345.5 126.65L346 124.48L346.5 126.7L347 126.69L347.5 126.08L348 125.64L348.5 126.6L349 126.2L349.5 124.19L350 126.5L350.5 126.03L351 126.25L351.5 126.65L352 126.6L352.5 126.6L353 126.7L353.5 126.57L354 126.48L354.5 126.69L355 125.86L355.5 125.12L356 126.26L356.5 123.66L357 125.66L357.5 126.12L358 126.67L358.5 126.16L359 126.56L359.5 126.28L360 126.69L360.5 125.88L361 126.43L361.5 126.25L362 126.68L362.5 126.07L363 126.43L363.5 126.55L364 124.64L364.5 126.06L365 126.5L365.5 126.17L366 126.18L366.5 126.06L367 125.38L367.5 126.51L368 123.85L368.5 126.68L369 126.65L369.5 126.61L370 126.2L370.5 126.56L371 126.51L371.5 126.68L372 126.46L372.5 126.7L373 126.69L373.5 126.64L374 126.45L374.5 126.7L375 125.64L375.5 126.64L376 126.59L376.5 126.56L377 126.66L377.5 126.4L378 125.76L378.5 126.58L379 126.68L379.5 126.35L380 126.34L380.5 126.69L381 126.13L381.5 126.42L382 126.66L382.5 126.7L383 126.02L383.5 126.67L384 126.67L384.5 126.28L385 125.74L385.5 126.7L386 126.06L386.5 126.57L387 126.7L387.5 126.7L388 126.33L388.5 126.7L389 125.62L389.5 126.56L390 126.56L390.5 126.41L391 126.43L391.5 126.31L392 126.46L392.5 124.18L393 126.24L393.5 125.76L394 125.45L394.5 126.66L395 126.62L395.5 125.41L396 126.5L396.5 125.86L397 126.65L397.5 126.7L398 125.96L398.5 126.48L399 125.18L399.5 125.73L400 126.34L400.5 126.7L401 125.94L401.5 126.62L402 126.66L402.5 126.48L403 126.45L403.5 124.47L404 126.5L404.5 126.05L405 126.61L405.5 126.4L406 126.67L406.5 126.69L407 126.5L407.5 126.65L408 126.6L408.5 125.79L409 126.2L409.5 126.69L410 126.6L410.5 125.96L411 126.23L411.5 126.63L412 126.53L412.5 125.96L413 126.67L413.5 123.06L414 126.62L414.5 126.64L415 124.34L415.5 126.52L416 124.45L416.5 122.89L417 126.45L417.5 125.62L418 125.37L418.5 126.52L419 126.47L419.5 126.69L420 126.28L420.5 126.59L421 126.12L421.5 126.42L422 126.23L422.5 125.75L423 122.69L423.5 126.32L424 126.33L424.5 126.33L425 125.84L425.5 124.49L426 126.51L426.5 124.7L427 126.7L427.5 124.15L428 126.64L428.5 126.68L429 126.62L429.5 125.11L430 125.8L430.5 125.48L431 126.38L431.5 126.56L432 126.11L432.5 125.9L433 126.09L433.5 125.76L434 126.61L434.5 126.62L435 125.74L435.5 126.32L436 125.23L436.5 125.96L437 126.26L437.5 124.61L438 126.67L438.5 126.46L439 126.46L439.5 124.08L440 126.69L440.5 126.14L441 126.09L441.5 126.7L442 125.23L442.5 126.69L443 126.67L443.5 126.2L444 126.05L444.5 126.02L445 126.57L445.5 126.54L446 125.79L446.5 126.44L447 126.59L447.5 125.46L448 126L448.5 126.67L449 126.58L449.5 126.59L450 126.7L450.5 126.29L451 126.17L451.5 124.32L452 126.7L452.5 125.3L453 126.64L453.5 126.63L454 126.7L454.5 126.65L455 126.1L455.5 125.91L456 123.96L456.5 126.25L457 126.55L457.5 125.15L458 126.27L458.5 126.67L459 125.84L459.5 126.18L460 125.45L460.5 126.37L461 126.45L461.5 126.43L462 125.78L462.5 126.52L463 126.14L463.5 126.58L464 125.81L464.5 126.51L465 126.64L465.5 126.54L466 126.63L466.5 126.59L467 125.37L467.5 125.16L468 126.15L468.5 126.12L469 126.45L469.5 126.07L470 126.68L470.5 126.46L471 126.66L471.5 126.7L472 126.46L472.5 126.17L473 126.24L473.5 126.02L474 126.69L474.5 126.36L475 125.97L475.5 126.67L476 126.68L476.5 126.36L477 126.7L477.5 126.13L478 126.35L478.5 126.57L479 125.59L479.5 126.67L480 126.29L480.5 126.7L481 126.37L481.5 126.62L482 126.46L482.5 126.68L483 126.48L483.5 126.65L484 126.7L484.5 126.11L485 125.74L485.5 126.67L486 125.96L486.5 126.49L487 126.01L487.5 126.2L488 125.98L488.5 126.39L489 126L489.5 126.64L490 126.26L490.5 126.33L491 126.66L491.5 125.1L492 126.6L492.5 126.35L493 126.59L493.5 125.98L494 126.44L494.5 126.67L495 126.47L495.5 126.52L496 126.16L496.5 126.62L497 126.59L497.5 126.69L498 126.51L498.5 126.23L499 126.66L499.5 126.33L500 125.29L500.5 126.67L501 121.65L501.5 126.63L502 126.69L502.5 126.53L503 126.7L503.5 126.66L504 126.64L504.5 126.25L505 125.79L505.5 126.61L506 125.88L506.5 126.63L507 125.93L507.5 126.67L508 122.65L508.5 125.82L509 125.61L509.5 126.69L510 125.72L510.5 126.68L511 126.41L511.5 126.63L512 126.58L512.5 126.47L513 126.06L513.5 126.61L514 126.3L514.5 126.23L515 126.16L515.5 126.38L516 126.08L516.5 125.85L517 125.25L517.5 124.75L518 123.92L518.5 124.26L519 124.76L519.5 124.21L520 124.82L520.5 124.25L521 126.22L521.5 126.38L522 126.14L522.5 124.7L523 125.37L523.5 126.57L524 126.68L524.5 126L525 126.03L525.5 126.13L526 126.44L526.5 126.3L527 125.97L527.5 126.67L528 124.31L528.5 126.19L529 126.03L529.5 126.6L530 126.12L530.5 126.7L531 126.2L531.5 125.88L532 126.66L532.5 126.4L533 126.33L533.5 126.48L534 125.97L534.5 126.36L535 125.7L535.5 126.64L536 126.17L536.5 126.7L537 126.45L537.5 126.65L538 126.54L538.5 125.58L539 126.67L539.5 125.07L540 125.84L540.5 126.67L541 126.7L541.5 124.76L542 125.48L542.5 126.63L543 126.68L543.5 126.55L544 126.69L544.5 126.64L545 125.79L545.5 126.69L546 125.42L546.5 126.54L547 126.43L547.5 126.67L548 126.55L548.5 125.84L549 126.52L549.5 126.51L550 126.47L550.5 126.64L551 126.7L551.5 126.59L552 126.69L552.5 126.63L553 125.97L553.5 126.69L554 125.51L554.5 126.7L555 125.16L555.5 125.6L556 126.67L556.5 126.66L557 126.48L557.5 126.61L558 126.17L558.5 126.41L559 126.62L559.5 126.7L560 126.65L560.5 124.61L561 126.63L561.5 126.13L562 124.63L562.5 126.67L563 126.61L563.5 126.66L564 126.67L564.5 125.11L565 126.02L565.5 126.68L566 126.53L566.5 126.31L567 125.08L567.5 126.52L568 125.38L568.5 126.58L569 126.69L569.5 126.67L570 126.47L570.5 126.59L571 125.81L571.5 125.81L572 126.61L572.5 126.7L573 126.08L573.5 126.58L574 125.79L574.5 126.4L575 126.39L575.5 125.82L576 125.63L576.5 126.19L577 125.12L577.5 125.3L578 126.53L578.5 124.39L579 126.69L579.5 126.64L580 126.14L580.5 126.62L581 125.96L581.5 126.59L582 126.2L582.5 126.18L583 126.62L583.5 126.63L584 126.66L584.5 124.52L585 126.7L585.5 126.69L586 126.68L586.5 126.6L587 124.6L587.5 126.35L588 125.79L588.5 124.89L589 126.68L589.5 125.92L590 126.65L590.5 126.02L591 126.7L591.5 126.15L592 126.69L592.5 124.79L593 126.69L593.5 125.2L594 125.61L594.5 125.96L595 126.22L595.5 125.81L596 126.48L596.5 126.48L597 126.67L597.5 125.49L598 126.6L598.5 126.62L599 126.54L599.5 126.7L600 126.51L600.5 126.62L601 125.44L601.5 126.7L602 125.7L602.5 126.27L603 126.11L603.5 124.97L604 125.08L604.5 126.08L605 126.07L605.5 126.67L606 126.68L606.5 126.69L607 125.07L607.5 125.29L608 126.52L608.5 126.57L609 125.61L609.5 126.39L610 126.68L610.5 126.51L611 126.35L611.5 126.36L612 126.64L612.5 126.66L613 125.99L613.5 126.69L614 126.56L614.5 125.62L615 126.62L615.5 126.55L616 125.8L616.5 125.99L617 126.48L617.5 125.89L618 126.51L618.5 126.66L619 126.35L619.5 126.22L620 126.28L620.5 126.56L621 126.61L621.5 126.58L622 126.35L622.5 126.22L623 126.44L623.5 126.62L624 126.59L624.5 126.65L625 126.69L625.5 126.2L626 125.42L626.5 126.3L627 126.01L627.5 126.67L628 126.68L628.5 126.7L629 126.55L629.5 126.25L630 125.34L630.5 126.05L631 126.51L631.5 126.38L632 126.59L632.5 125.26L633 125.54L633.5 126.54L634 123.84L634.5 125.51L635 126.57L635.5 126.2L636 126.5L636.5 125.46L637 126.69L637.5 126.59L638 125.93L638.5 125.85L639 126.08L639.5 126.66L640 126.69L640.5 126.7L641 126.6L641.5 125.12L642 125.6L642.5 126.3L643 126.36L643.5 126.66L644 126.24L644.5 126.6L645 126.33L645.5 125.13L646 124.25L646.5 126.51L647 126.61L647.5 126.7L648 126.13L648.5 125.96L649 126.61L649.5 126.66L650 126.2L650.5 123.24L651 126.53L651.5 126.7L652 126.67L652.5 126.54L653 125.58L653.5 126.66L654 126.23L654.5 126.15L655 126.24L655.5 126.68L656 126.16L656.5 126.27L657 125.76L657.5 126.27L658 126.65L658.5 126.7L659 125.38L659.5 126.25L660 126.32L660.5 126.66L661 126.31L661.5 126.34L662 125.99L662.5 126.38L663 125.94L663.5 125.19L664 126.53L664.5 126.38L665 124.76L665.5 126.63L666 126.68L666.5 126.1L667 125.54L667.5 125.58L668 126.33L668.5 126.37L669 126.06L669.5 124.71L670 126.58L670.5 126.54L671 126.67L671.5 126.68L672 126.61L672.5 126.61L673 125.86L673.5 126.38L674 126.5L674.5 126.6L675 125.99L675.5 126.55L676 126.69L676.5 125.82L677 126.46L677.5 126.61L678 126.34L678.5 126.01L679 126.26L679.5 126.6L680 124.79L680.5 125.92L681 126.53L681.5 126.31L682 126.36L682.5 126.46L683 126.49L683.5 126.63L684 126.7L684.5 126.42L685 125.74L685.5 126.54L686 126.66L686.5 126.51L687 125.06L687.5 126.68L688 125.41L688.5 126.36L689 126.22L689.5 126.02L690 126.47L690.5 126.44L691 126.35L691.5 126.68L692 125.74L692.5 126.04L693 126.15L693.5 126.62L694 125.37L694.5 126.39L695 126.19L695.5 125.48L696 126.36L696.5 126.36L697 125.91L697.5 126.63L698 126.63L698.5 125.87L699 126.33L699.5 125.5L700 126.12L700.5 124.49L701 126.39L701.5 126.34L702 125.03L702.5 126.13L703 124.63L703.5 126.65L704 125.06L704.5 125.45L705 126.12L705.5 125.78L706 125.92L706.5 126.44L707 126.34L707.5 125.13L708 126.09L708.5 125.17L709 125.3L709.5 126.48L710 125.5L710.5 125.55L711 126.62L711.5 126.46L712 126.56L712.5 126.59L713 126.52L713.5 126.65L714 126.26L714.5 125.78L715 125.01L715.5 126.29L716 126.17L716.5 126.69L717 126.57L717.5 126L718 126.07L718.5 126.61L719 126.16L719.5 126.67L720 126.13L720.5 126.36L721 126.48L721.5 126.69L722 126.68L722.5 125.54L723 124.76L723.5 126.43L724 126.7L724.5 125.77L725 125.98L725.5 126.67L726 126.55L726.5 125.98L727 126.51L727.5 126.69L728 126.46L728.5 126.52L729 126.29L729.5 126.54L730 126.46L730.5 126.58L731 126.7L731.5 126.33L732 125.47L732.5 125.99L733 126.66L733.5 126.31L734 123.88L734.5 126.38L735 124.96L735.5 126.65L736 126.47L736.5 126.36L737 126.7L737.5 126.41L738 126.33L738.5 126.61L739 126.05L739.5 126.54L740 126.62L740.5 125.67L741 125.93L741.5 125.75L742 126.67L742.5 126.67L743 126.68L743.5 126.61L744 126.65L744.5 126.19L745 126.44L745.5 126.58L746 126.48L746.5 126L747 125.68L747.5 126.13L748 126.46L748.5 126.27L749 126.56L749.5 124.29L750 126.7L750.5 126.46L751 126.67L751.5 126.47L752 125.21L752.5 126.67L753 126.16L753.5 126.66L754 125.89L754.5 126.57L755 126.14L755.5 126.36L756 126L756.5 126.67L757 124.73L757.5 126.21L758 126.7L758.5 126.39L759 126.52L759.5 126.12L760 126.52L760.5 125.74L761 126.56L761.5 126.41L762 125.8L762.5 126.04L763 126.58L763.5 126.45L764 126.66L764.5 126L765 126.68L765.5 126.68L766 126.06L766.5 126.42L767 126.41L767.5 126.43L768 124.56L768.5 126.65L769 126.59L769.5 126.54L770 126.4L770.5 126.56L771 126.58L771.5 126.5L772 126.62L772.5 126.46L773 125.98L773.5 126.67L774 126.6L774.5 126.61L775 126.06L775.5 124.81L776 125.94L776.5 126.58L777 126.7L777.5 125.67L778 126.48L778.5 126.58L779 126.35L779.5 126.14L780 123.18L780.5 126.54L781 126.58L781.5 124.56L782 126.7L782.5 126.65L783 125.35L783.5 123.38L784 125.54L784.5 124.82L785 126.64L785.5 126.61L786 126.56L786.5 125.34L787 126.28L787.5 126.68L788 126.62L788.5 126.56L789 126.22L789.5 126.25L790 126.44L790.5 126.42L791 126.54L791.5 125.94L792 125.93L792.5 126L793 125.14L793.5 126.58L794 126.28L794.5 124.43L795 126.35L795.5 126.67L796 125.73L796.5 126.62L797 125.98L797.5 126.7L798 126.01L798.5 125.68L799 125.48L799.5 126.57L800 126.52L800.5 126.67L801 126.65L801.5 125.74L802 126.7L802.5 126.35L803 125.2L803.5 126.59L804 126.44L804.5 125.45L805 125.22L805.5 125.57L806 126.66L806.5 126.48L807 126.49L807.5 126.69L808 126.67L808.5 126.25L809 126.65L809.5 126.47L810 126.69L810.5 125.69L811 126.08L811.5 126.7L812 126.26L812.5 126.61L813 125.72L813.5 126.27L814 125.94L814.5 125.78L815 126.42L815.5 126.08L816 126.68L816.5 126.03L817 123.98L817.5 126.2L818 126.26L818.5 124.95L819 124.54L819.5 124.27L820 124.6L820.5 124.21L821 123.86L821.5 125.01L822 125.54L822.5 125.74L823 125.25L823.5 125.96L824 126.52L824.5 126.38L825 126.65L825.5 125.3L826 126.54L826.5 126.45L827 125.95L827.5 126.67L828 126.56L828.5 126.63L829 126.69L829.5 126.68L830 126.54L830.5 126.54L831 126.67L831.5 126.61L832 126.41L832.5 126.58L833 126.15L833.5 125.86L834 126.67L834.5 125.81L835 126.51L835.5 126.56L836 125.24L836.5 125.79L837 126.31L837.5 126.4L838 126.68L838.5 124.5L839 126.32L839.5 126.01L840 126.06L840.5 125.56L841 126.42L841.5 126.65L842 125.91L842.5 126.62L843 126.51L843.5 126.61L844 126.69L844.5 125.86L845 126.62L845.5 126.53L846 126L846.5 126.63L847 126.64L847.5 126.67L848 126.16L848.5 125.94L849 126.67L849.5 125.9L850 126.63L850.5 126.42L851 126.59L851.5 126.49L852 126.69L852.5 126.69L853 126.7L853.5 125.9L854 126.3L854.5 126.35L855 125.04L855.5 126.1L856 126.44L856.5 126.4L857 126.69L857.5 126.29L858 126.7L858.5 126.43L859 126.03L859.5 126.24L860 125.9L860.5 126.64L861 126.4L861.5 126.61L862 126.67L862.5 126.63L863 126.18L863.5 126.2L864 125.81L864.5 126.3L865 125.82L865.5 125.35L866 126.11L866.5 126.13L867 125.6L867.5 125.06L868 124.29L868.5 126.67L869 125.73L869.5 125.7L870 126.49L870.5 125.98L871 126.7L871.5 126.47L872 126.7L872.5 126.41L873 126.32L873.5 126.3L874 124.86L874.5 126.39L875 126.69L875.5 126.32L876 126.7L876.5 126.5L877 124.3L877.5 123.52L878 126.25L878.5 126.48L879 125.74L879.5 126.32L880 125.57L880.5 126.4L881 126.7L881.5 125.78L882 126.4L882.5 126.7L883 126.09L883.5 126.32L884 126.54L884.5 125.88L885 126.57L885.5 126.14L886 125.35L886.5 126.14L887 125.41L887.5 126.53L888 126.57L888.5 126.19L889 125.59L889.5 126.69L890 126.56L890.5 125.78L891 126.59L891.5 126.67L892 125.79L892.5 124.97L893 126.69L893.5 126.57L894 125.55L894.5 126.18L895 124.76L895.5 126.48L896 126.55L896.5 126.27L897 126.69L897.5 126.09L898 126.15L898.5 126.42L899 126.56L899.5 126.47L900 126.53L900.5 126.29L901 126.69L901.5 126.66L902 126.66L902.5 126.67L903 125.63L903.5 125.74L904 125.08L904.5 126.68L905 126.52L905.5 126.56L906 125.58L906.5 126.63L907 126.08L907.5 126.68L908 126.28L908.5 126.36L909 126.69L909.5 126.28L910 126L910.5 124.57L911 126.16L911.5 126.61L912 123.32L912.5 126.7L913 126.59L913.5 126.11L914 126.02L914.5 126.43L915 124.67L915.5 124.1L916 124.97L916.5 126.39L917 125.81L917.5 126.3L918 125.87L918.5 126.59L919 125.8L919.5 126.68L920 125.67L920.5 126.52L921 126.01L921.5 125.48L922 126.31L922.5 125.26L923 126.28L923.5 126.21L924 126.24L924.5 126.25L925 126.1L925.5 126.29L926 126.64L926.5 126.49L927 126.35L927.5 126.2L928 126.65L928.5 126.68L929 126.44L929.5 124.67L930 126.42L930.5 125.85L931 126.62L931.5 126.4L932 126.51L932.5 124.99L933 125.8L933.5 126.63L934 126.01L934.5 125.62L935 126.37L935.5 126.31L936 126.38L936.5 125.33L937 126.46L937.5 126.63L938 126.69L938.5 126.69L939 126.69L939.5 126.21L940 125.59L940.5 126.55L941 125.82L941.5 126.55L942 126.37L942.5 126.64L943 126.44L943.5 126.53L944 126.7L944.5 126.07L945 126.18L945.5 126.61L946 126.69L946.5 126.27L947 125.25L947.5 126.55L948 125.7L948.5 126.33L949 126.69L949.5 126.29L950 126.31L950.5 125.18L951 126.63L951.5 124.35L952 126.54L952.5 126.53L953 126.13L953.5 125.89L954 126.7L954.5 126.24L955 126.34L955.5 126.65L956 126.7L956.5 126.34L957 126.6L957.5 126.19L958 125.81L958.5 126.7L959 126.69L959.5 125.67L960 126.7L960.5 126.7L961 126.57L961.5 126.67L962 126.59L962.5 126.05L963 126.52L963.5 126.52L964 126.22L964.5 125.25L965 126.64L965.5 126.19L966 126.48L966.5 126.63L967 126.61L967.5 126.23L968 126.68L968.5 126.51L969 126.62L969.5 126.01L970 126.54L970.5 125.42L971 126.49L971.5 126.5L972 126.03L972.5 126.66L973 126.67L973.5 124.58L974 125.44L974.5 126.58L975 126.15L975.5 126.07L976 125.65L976.5 126.56L977 126.69L977.5 126.62L978 126.58L978.5 126.37L979 126.54L979.5 126.23L980 125.53L980.5 126.45L981 126.67L981.5 125.4L982 126.56L982.5 125.64L983 126.24L983.5 126.41L984 125.57L984.5 126.68L985 126.69L985.5 126.35L986 126.55L986.5 126.69L987 125.81L987.5 126.62L988 125.41L988.5 126.01L989 126.7L989.5 126.32L990 126.48L990.5 126.63L991 126.46L991.5 125.77L992 125.94L992.5 125.28L993 126.55L993.5 125.82L994 126.39L994.5 125.65L995 126.65L995.5 126.42L996 126.35L996.5 126.66L997 126.7L997.5 126.49L998 125.45L998.5 126.06L999 126.4L999.5 126.33L1000 126.69L1000.5 126.64L1001 126.07L1001.5 124.46L1002 126.65L1002.5 125.92L1003 125.78L1003.5 123.49L1004 126.62L1004.5 126.6L1005 126.52L1005.5 126.69L1006 124.51L1006.5 125.85L1007 126.21L1007.5 126.49L1008 126.47L1008.5 126.05L1009 126.05L1009.5 125.9L1010 126.41L1010.5 126.52L1011 126.69L1011.5 126.66L1012 126.64L1012.5 126.44L1013 126.39L1013.5 126.12L1014 126.45L1014.5 125.7L1015 126.45L1015.5 126.39L1016 125.94L1016 133.76L1015.5 133.39L1015 133.87L1014.5 133.15L1014 133.1L1013.5 135.19L1013 134.1L1012.5 134.03L1012 134.58L1011.5 133.37L1011 133.26L1010.5 133.27L1010 133.12L1009.5 133.34L1009 133.55L1008.5 133.13L1008 133.89L1007.5 133.12L1007 133.21L1006.5 135.03L1006 133.25L1005.5 133.37L1005 133.36L1004.5 133.11L1004 134.91L1003.5 133.28L1003 133.48L1002.5 133.12L1002 133.77L1001.5 133.38L1001 133.48L1000.5 133.11L1000 133.58L999.5 134.79L999 133.68L998.5 133.54L998 134.47L997.5 133.2L997 133.12L996.5 133.14L996 133.82L995.5 133.69L995 133.2L994.5 133.11L994 133.16L993.5 133.19L993 133.72L992.5 133.26L992 138.12L991.5 133.13L991 133.23L990.5 133.4L990 133.38L989.5 133.43L989 133.13L988.5 134.58L988 134.27L987.5 133.14L987 133.27L986.5 133.11L986 133.18L985.5 133.89L985 133.29L984.5 134.03L984 135.94L983.5 133.84L983 133.97L982.5 137.38L982 134.36L981.5 133.14L981 133.16L980.5 133.29L980 136.17L979.5 135.34L979 133.11L978.5 134.25L978 133.3L977.5 133.53L977 134.78L976.5 133.1L976 133.19L975.5 133.72L975 133.53L974.5 133.37L974 133.49L973.5 133.1L973 133.2L972.5 133.61L972 133.18L971.5 133.43L971 133.2L970.5 133.14L970 133.14L969.5 133.13L969 133.27L968.5 134.01L968 134.01L967.5 133.94L967 133.14L966.5 135.05L966 133.57L965.5 133.56L965 134.34L964.5 133.1L964 133.48L963.5 133.57L963 133.13L962.5 133.14L962 134.58L961.5 133.76L961 133.44L960.5 133.12L960 133.14L959.5 133.96L959 133.44L958.5 134.11L958 133.15L957.5 133.48L957 133.19L956.5 134.47L956 133.39L955.5 133.41L955 134.05L954.5 133.13L954 133.13L953.5 133.24L953 133.33L952.5 133.35L952 133.24L951.5 133.18L951 133.52L950.5 133.69L950 133.23L949.5 133.93L949 133.29L948.5 133.13L948 133.34L947.5 134.5L947 133.17L946.5 133.1L946 133.16L945.5 133.4L945 133.5L944.5 133.79L944 133.58L943.5 133.11L943 133.82L942.5 133.38L942 133.19L941.5 133.1L941 133.41L940.5 136.71L940 133.37L939.5 133.2L939 133.76L938.5 133.45L938 133.33L937.5 133.64L937 133.4L936.5 133.98L936 134.63L935.5 133.43L935 133.1L934.5 133.1L934 133.18L933.5 133.5L933 133.59L932.5 133.1L932 133.8L931.5 133.23L931 133.54L930.5 133.2L930 133.34L929.5 134.41L929 133.64L928.5 133.44L928 134.17L927.5 133.53L927 133.58L926.5 133.23L926 133.41L925.5 133.14L925 133.47L924.5 133.73L924 133.12L923.5 133.71L923 133.43L922.5 134.32L922 133.61L921.5 133.39L921 133.18L920.5 133.16L920 133.42L919.5 133.2L919 133.1L918.5 133.76L918 133.13L917.5 134.01L917 133.14L916.5 136.84L916 133.94L915.5 134.08L915 133.6L914.5 133.29L914 133.12L913.5 133.48L913 133.11L912.5 133.7L912 133.2L911.5 134.75L911 133.81L910.5 134.65L910 133.27L909.5 133.1L909 133.26L908.5 133.16L908 133.33L907.5 133.62L907 133.26L906.5 133.23L906 133.31L905.5 134.17L905 134.02L904.5 133.44L904 134.87L903.5 133.16L903 133.42L902.5 133.82L902 133.71L901.5 134.26L901 134.4L900.5 137.07L900 133.81L899.5 133.13L899 133.13L898.5 133.34L898 134.19L897.5 133.27L897 133.19L896.5 135.12L896 133.42L895.5 133.6L895 134.74L894.5 133.38L894 133.79L893.5 133.27L893 133.75L892.5 133.2L892 136.61L891.5 133.12L891 134.68L890.5 133.87L890 133.11L889.5 133.26L889 133.24L888.5 134.01L888 133.5L887.5 133.72L887 134.09L886.5 134.61L886 134.4L885.5 133.14L885 133.42L884.5 133.1L884 135.4L883.5 133.33L883 134.5L882.5 133.94L882 133.11L881.5 133.93L881 133.1L880.5 133.15L880 133.17L879.5 133.23L879 133.59L878.5 134L878 133.31L877.5 133.48L877 133.17L876.5 133.33L876 133.72L875.5 133.75L875 134.91L874.5 133.1L874 133.33L873.5 133.19L873 133.37L872.5 133.46L872 133.14L871.5 133.51L871 133.14L870.5 133.13L870 133.2L869.5 133.24L869 134.92L868.5 133.48L868 133.85L867.5 133.1L867 133.26L866.5 133.33L866 133.36L865.5 133.56L865 133.11L864.5 133.21L864 133.75L863.5 133.72L863 133.47L862.5 136.05L862 134.08L861.5 133.23L861 133.16L860.5 133.21L860 133.23L859.5 133.1L859 134.25L858.5 133.12L858 133.43L857.5 133.92L857 133.11L856.5 133.36L856 133.94L855.5 134.39L855 133.61L854.5 133.14L854 133.1L853.5 133.19L853 133.16L852.5 133.14L852 133.13L851.5 133.27L851 133.48L850.5 133.84L850 133.13L849.5 133.11L849 133.21L848.5 134.82L848 134.19L847.5 134.75L847 133.59L846.5 133.2L846 133.52L845.5 133.84L845 133.1L844.5 134.75L844 134.28L843.5 133.3L843 134.61L842.5 133.77L842 133.5L841.5 134.54L841 134.61L840.5 133.34L840 133.18L839.5 134.79L839 133.3L838.5 133.19L838 133.42L837.5 133.37L837 133.7L836.5 133.1L836 133.2L835.5 133.16L835 133.28L834.5 133.7L834 134.65L833.5 133.56L833 133.36L832.5 133.13L832 133.97L831.5 133.65L831 133.38L830.5 133.11L830 134.96L829.5 133.56L829 133.11L828.5 133.42L828 133.22L827.5 133.16L827 133.73L826.5 133.22L826 133.16L825.5 133.13L825 133.07L824.5 133.38L824 134.05L823.5 132.86L823 133.01L822.5 132.43L822 132.3L821.5 132.73L821 133.2L820.5 134.22L820 132.4L819.5 132.12L819 132.3L818.5 132.69L818 132.85L817.5 132.91L817 134.03L816.5 133.24L816 133.71L815.5 133.94L815 134.33L814.5 135.47L814 133.14L813.5 133.47L813 134.1L812.5 134.53L812 133.11L811.5 133.29L811 133.26L810.5 133.52L810 133.28L809.5 133.17L809 133.16L808.5 133.61L808 133.67L807.5 133.79L807 133.21L806.5 133.15L806 133.29L805.5 133.78L805 134.58L804.5 135.28L804 133.54L803.5 133.11L803 133.76L802.5 134.23L802 133.11L801.5 133.13L801 133.12L800.5 133.35L800 133.83L799.5 133.2L799 133.51L798.5 133.37L798 134.07L797.5 133.39L797 134.56L796.5 134.21L796 133.34L795.5 133.29L795 133.31L794.5 136.91L794 133.58L793.5 133.12L793 133.1L792.5 133.12L792 133.12L791.5 135.73L791 134.14L790.5 133.19L790 133.28L789.5 133.66L789 133.13L788.5 133.12L788 133.27L787.5 133.19L787 133.26L786.5 133.27L786 133.41L785.5 133.14L785 134.43L784.5 133.2L784 133.31L783.5 133.28L783 133.13L782.5 133.53L782 134.26L781.5 133.28L781 133.15L780.5 134.25L780 133.1L779.5 133.11L779 133.89L778.5 136.27L778 133.12L777.5 133.15L777 133.76L776.5 133.35L776 133.32L775.5 134.65L775 135.41L774.5 133.67L774 133.59L773.5 133.15L773 133.63L772.5 133.19L772 134.34L771.5 134.04L771 133.75L770.5 133.81L770 133.41L769.5 133.17L769 133.3L768.5 134.07L768 133.8L767.5 133.36L767 134.23L766.5 136.2L766 134.56L765.5 133.33L765 134.42L764.5 133.14L764 134.04L763.5 133.1L763 133.89L762.5 133.52L762 133.3L761.5 133.1L761 134.14L760.5 135.09L760 133.54L759.5 133.11L759 133.49L758.5 133.22L758 133.79L757.5 133.92L757 133.25L756.5 133.16L756 133.34L755.5 133.7L755 133.32L754.5 133.75L754 133.14L753.5 134.6L753 133.37L752.5 133.6L752 133.22L751.5 134.34L751 133.1L750.5 133.27L750 133.54L749.5 133.39L749 133.11L748.5 133.11L748 133.66L747.5 133.15L747 133.17L746.5 133.24L746 134L745.5 133.5L745 133.1L744.5 133.34L744 133.67L743.5 135.96L743 133.15L742.5 133.12L742 133.23L741.5 133.31L741 134.22L740.5 133.12L740 135.18L739.5 133.54L739 134.71L738.5 133.79L738 135.22L737.5 133.18L737 133.25L736.5 134.58L736 133.67L735.5 133.3L735 133.93L734.5 133.41L734 133.3L733.5 133.17L733 133.82L732.5 133.25L732 133.56L731.5 133.15L731 133.51L730.5 133.18L730 133.73L729.5 133.16L729 133.17L728.5 133.1L728 134.72L727.5 133.33L727 134.18L726.5 134.08L726 133.3L725.5 134.94L725 134.43L724.5 135.17L724 133.35L723.5 133.12L723 133.1L722.5 133.17L722 133.21L721.5 133.85L721 133.19L720.5 134.35L720 133.14L719.5 133.1L719 134.7L718.5 133.86L718 133.32L717.5 133.21L717 133.49L716.5 133.27L716 133.18L715.5 133.16L715 133.41L714.5 133.29L714 133.12L713.5 133.74L713 135.34L712.5 133.66L712 133.1L711.5 134.61L711 135.32L710.5 134.21L710 133.43L709.5 134.16L709 133.25L708.5 133.52L708 133.13L707.5 133.44L707 133.5L706.5 133.12L706 133.24L705.5 133.24L705 134.47L704.5 133.22L704 134.26L703.5 133.27L703 134.02L702.5 133.11L702 135.95L701.5 133.13L701 133.57L700.5 135.83L700 133.81L699.5 133.46L699 133.15L698.5 133.67L698 133.5L697.5 133.29L697 133.34L696.5 133.82L696 133.54L695.5 135.47L695 133.1L694.5 133.26L694 133.91L693.5 134.79L693 133.67L692.5 133.52L692 133.19L691.5 134.57L691 134.72L690.5 133.85L690 133.32L689.5 133.18L689 133.14L688.5 133.11L688 133.22L687.5 133.97L687 138L686.5 133.51L686 133.36L685.5 133.49L685 134.29L684.5 133.2L684 133.52L683.5 133.88L683 133.26L682.5 133.68L682 133.17L681.5 133.1L681 133.27L680.5 133.74L680 133.19L679.5 133.6L679 134.09L678.5 134.3L678 134.88L677.5 133.72L677 133.9L676.5 133.15L676 133.15L675.5 133.1L675 133.11L674.5 134.09L674 133.4L673.5 133.58L673 133.45L672.5 133.31L672 133.86L671.5 134.95L671 133.28L670.5 134L670 133.17L669.5 133.22L669 133.32L668.5 135.61L668 133.32L667.5 133.14L667 133.28L666.5 133.43L666 133.87L665.5 133.35L665 133.49L664.5 133.94L664 133.1L663.5 135.58L663 133.35L662.5 134.49L662 133.1L661.5 133.43L661 134.64L660.5 133.62L660 133.1L659.5 133.37L659 133.8L658.5 135.96L658 134.01L657.5 133.11L657 135.08L656.5 133.11L656 133.1L655.5 133.31L655 133.2L654.5 133.41L654 133.33L653.5 133.44L653 133.2L652.5 133.65L652 133.76L651.5 135.17L651 133.38L650.5 133.21L650 133.26L649.5 133.55L649 133.94L648.5 133.49L648 133.6L647.5 133.62L647 133.3L646.5 133.23L646 133.76L645.5 133.21L645 133.11L644.5 133.26L644 133.29L643.5 133.27L643 133.17L642.5 134.21L642 133.9L641.5 133.23L641 133.44L640.5 133.27L640 133.68L639.5 133.29L639 133.4L638.5 133.36L638 133.87L637.5 133.88L637 133.11L636.5 134.51L636 133.35L635.5 133.21L635 133.14L634.5 133.1L634 133.21L633.5 133.53L633 133.13L632.5 133.12L632 133.18L631.5 134.82L631 133.28L630.5 133.8L630 133.13L629.5 133.11L629 133.36L628.5 133.78L628 134.32L627.5 133.43L627 133.1L626.5 133.58L626 133.86L625.5 133.32L625 133.53L624.5 134.13L624 133.27L623.5 133.43L623 133.25L622.5 133.16L622 133.2L621.5 133.17L621 133.31L620.5 133.15L620 136.4L619.5 133.11L619 133.1L618.5 133.37L618 133.62L617.5 133.95L617 133.77L616.5 133.86L616 133.37L615.5 135.03L615 134.13L614.5 133.37L614 134.26L613.5 133.99L613 133.15L612.5 134.35L612 133.13L611.5 133.66L611 133.24L610.5 134.5L610 133.33L609.5 134.03L609 133.36L608.5 133.76L608 133.78L607.5 133.81L607 133.78L606.5 133.97L606 134.1L605.5 133.9L605 133.22L604.5 133.1L604 134.04L603.5 134.37L603 133.2L602.5 134.23L602 133.16L601.5 133.76L601 133.1L600.5 133.93L600 133.32L599.5 133.42L599 133.85L598.5 133.16L598 133.41L597.5 133.16L597 134.92L596.5 133.84L596 133.72L595.5 133.78L595 134.69L594.5 133.24L594 133.49L593.5 134.56L593 133.75L592.5 133.71L592 133.14L591.5 133.48L591 133.1L590.5 134.73L590 133.8L589.5 133.57L589 134.96L588.5 133.17L588 134.84L587.5 135.66L587 133.11L586.5 134L586 133.25L585.5 133.21L585 133.49L584.5 135.41L584 134.25L583.5 133.78L583 133.44L582.5 133.31L582 133.13L581.5 134.25L581 133.59L580.5 133.76L580 133.42L579.5 133.76L579 133.53L578.5 133.1L578 134.51L577.5 133.57L577 133.17L576.5 133.11L576 134.83L575.5 134.92L575 133.28L574.5 133.75L574 133.98L573.5 133.53L573 133.8L572.5 134.78L572 133.11L571.5 133.11L571 133.1L570.5 133.2L570 133.23L569.5 133.99L569 134.19L568.5 134.01L568 133.41L567.5 133.16L567 133.28L566.5 133.6L566 133.16L565.5 133.1L565 134.34L564.5 133.1L564 134.08L563.5 133.24L563 133.31L562.5 135.4L562 133.92L561.5 135.26L561 133.54L560.5 133.1L560 135.28L559.5 134.34L559 133.42L558.5 133.1L558 134.29L557.5 133.23L557 133.17L556.5 133.52L556 133.1L555.5 134.86L555 133.4L554.5 134.05L554 133.11L553.5 133.2L553 133.13L552.5 134.86L552 134.19L551.5 133.52L551 133.1L550.5 133.11L550 133.63L549.5 133.26L549 133.48L548.5 133.22L548 133.13L547.5 134.21L547 134.07L546.5 133.13L546 133.14L545.5 133.29L545 133.13L544.5 133.12L544 135.29L543.5 133.18L543 133.34L542.5 133.12L542 133.3L541.5 133.1L541 134.78L540.5 134.24L540 133.49L539.5 133.14L539 134.24L538.5 133.3L538 133.11L537.5 133.1L537 133.44L536.5 133.61L536 134.51L535.5 133.72L535 133.37L534.5 133.53L534 133.12L533.5 134.08L533 133.73L532.5 133.54L532 134.05L531.5 134.24L531 133.83L530.5 133.66L530 133.29L529.5 133.13L529 135.48L528.5 133.67L528 133.55L527.5 133.1L527 133.37L526.5 133.12L526 133.14L525.5 133.15L525 133.48L524.5 133.1L524 133.48L523.5 133.24L523 134.13L522.5 134.44L522 133.29L521.5 133.43L521 133.79L520.5 133.72L520 132.65L519.5 132.5L519 133.72L518.5 135.34L518 133.41L517.5 134.35L517 132.21L516.5 133.7L516 133.84L515.5 132.93L515 133.46L514.5 134.57L514 133.23L513.5 134.3L513 133.3L512.5 133.13L512 133.36L511.5 133.54L511 134.99L510.5 134.44L510 133.11L509.5 134.04L509 133.6L508.5 133.65L508 133.27L507.5 133.12L507 133.25L506.5 134.07L506 133.99L505.5 133.23L505 133.26L504.5 133.1L504 134.22L503.5 133.56L503 133.88L502.5 133.21L502 133.83L501.5 133.73L501 133.12L500.5 133.89L500 133.14L499.5 133.12L499 133.96L498.5 133.13L498 133.37L497.5 133.14L497 134.2L496.5 133.42L496 133.13L495.5 133.65L495 134.22L494.5 133.21L494 133.19L493.5 133.43L493 134.14L492.5 133.13L492 136.12L491.5 134.58L491 133.16L490.5 134.36L490 133.1L489.5 133.45L489 133.13L488.5 134.14L488 133.16L487.5 133.5L487 134.05L486.5 134.08L486 133.41L485.5 133.19L485 133.86L484.5 133.62L484 134.85L483.5 133.3L483 133.15L482.5 133.19L482 133.48L481.5 133.9L481 134L480.5 133.17L480 133.37L479.5 133.85L479 133.6L478.5 133.11L478 134.28L477.5 133.67L477 133.71L476.5 133.85L476 133.12L475.5 133.3L475 134.17L474.5 133.15L474 133.69L473.5 133.64L473 133.22L472.5 134.01L472 133.91L471.5 133.37L471 133.16L470.5 133.4L470 133.11L469.5 133.11L469 133.14L468.5 133.23L468 133.66L467.5 133.37L467 133.25L466.5 133.16L466 133.19L465.5 133.94L465 134.51L464.5 134.6L464 133.59L463.5 133.1L463 133.16L462.5 133.54L462 133.3L461.5 133.46L461 133.89L460.5 133.23L460 133.1L459.5 133.11L459 133.17L458.5 133.29L458 133.12L457.5 133.15L457 133.27L456.5 133.16L456 133.11L455.5 133.16L455 134.53L454.5 133.36L454 133.13L453.5 133.24L453 133.72L452.5 133.1L452 134.26L451.5 134.94L451 133.42L450.5 133.1L450 133.25L449.5 133.37L449 133.17L448.5 133.22L448 133.37L447.5 133.26L447 133.39L446.5 135.67L446 135.66L445.5 133.16L445 133.13L444.5 133.8L444 133.17L443.5 133.24L443 133.18L442.5 135.64L442 133.13L441.5 133.11L441 133.14L440.5 133.22L440 134.04L439.5 134.22L439 133.3L438.5 134.02L438 133.65L437.5 133.63L437 133.3L436.5 133.23L436 134.19L435.5 133.26L435 133.24L434.5 135.65L434 133.4L433.5 133.27L433 135.12L432.5 133.1L432 133.48L431.5 133.42L431 133.15L430.5 133.23L430 133.29L429.5 133.13L429 133.13L428.5 133.32L428 133.15L427.5 133.1L427 133.57L426.5 134.64L426 133.24L425.5 134.61L425 135.07L424.5 133.15L424 133.67L423.5 133.81L423 134.02L422.5 134.16L422 133.57L421.5 133.56L421 133.91L420.5 133.11L420 133.34L419.5 133.81L419 133.14L418.5 133.53L418 133.17L417.5 133.23L417 133.56L416.5 133.3L416 134.36L415.5 134.38L415 133.15L414.5 134.12L414 133.49L413.5 133.49L413 133.16L412.5 133.12L412 133.3L411.5 133.1L411 133.14L410.5 133.14L410 133.77L409.5 133.59L409 133.1L408.5 133.91L408 133.76L407.5 133.2L407 133.59L406.5 134.01L406 134.52L405.5 134.01L405 133.85L404.5 133.28L404 133.37L403.5 133.9L403 134.1L402.5 133.93L402 133.81L401.5 134.49L401 134.38L400.5 133.35L400 133.13L399.5 133.8L399 133.12L398.5 133.2L398 133.1L397.5 133.23L397 133.55L396.5 133.28L396 133.12L395.5 133.25L395 133.3L394.5 133.31L394 134.46L393.5 133.28L393 133.92L392.5 133.85L392 133.43L391.5 133.11L391 133.11L390.5 135.26L390 133.24L389.5 133.29L389 133.79L388.5 133.51L388 133.18L387.5 134.36L387 133.61L386.5 133.21L386 134.12L385.5 133.13L385 133.36L384.5 133.78L384 133.19L383.5 134.08L383 133.75L382.5 135.8L382 134.24L381.5 133.31L381 133.27L380.5 134.84L380 133.23L379.5 133.26L379 135.92L378.5 133.17L378 133.92L377.5 134.38L377 133.53L376.5 133.47L376 135.32L375.5 133.67L375 133.17L374.5 135.2L374 133.11L373.5 133.25L373 133.11L372.5 133.24L372 133.69L371.5 133.13L371 133.15L370.5 133.2L370 133.26L369.5 133.12L369 133.9L368.5 135.56L368 133.1L367.5 133.13L367 133.39L366.5 135.28L366 133.16L365.5 134.17L365 133.33L364.5 133.11L364 133.74L363.5 134.18L363 133.36L362.5 133.32L362 133.96L361.5 133.1L361 133.15L360.5 133.64L360 133.13L359.5 133.79L359 133.41L358.5 133.1L358 136.06L357.5 135.05L357 134.61L356.5 133.19L356 134.33L355.5 133.11L355 133.39L354.5 133.81L354 133.27L353.5 134.97L353 133.44L352.5 135.83L352 133.72L351.5 133.46L351 134L350.5 133.4L350 134.14L349.5 133.48L349 133.19L348.5 135L348 133.73L347.5 134.27L347 133.1L346.5 133.1L346 133.23L345.5 133.12L345 133.22L344.5 133.28L344 133.16L343.5 133.14L343 133.49L342.5 133.25L342 133.48L341.5 134.04L341 134.36L340.5 133.43L340 133.13L339.5 133.23L339 133.16L338.5 133.75L338 133.87L337.5 133.67L337 133.21L336.5 134.46L336 133.6L335.5 133.51L335 135.34L334.5 133.15L334 133.26L333.5 134.33L333 133.31L332.5 133.17L332 134.26L331.5 133.25L331 133.1L330.5 133.41L330 133.17L329.5 134.01L329 133.39L328.5 133.28L328 133.6L327.5 133.45L327 134.56L326.5 133.35L326 133.65L325.5 133.3L325 133.11L324.5 135.1L324 133.68L323.5 133.84L323 133.12L322.5 133.57L322 134.42L321.5 134.24L321 133.13L320.5 133.1L320 133.48L319.5 133.46L319 133.58L318.5 133.49L318 133.32L317.5 133.64L317 134.12L316.5 133.18L316 133.53L315.5 134.63L315 133.11L314.5 133.3L314 133.17L313.5 133.15L313 133.44L312.5 133.96L312 134.73L311.5 133.21L311 136.87L310.5 133.17L310 133.12L309.5 134.72L309 134.67L308.5 133.35L308 134.05L307.5 133.28L307 134.38L306.5 133.11L306 133.32L305.5 133.1L305 133.63L304.5 133.11L304 133.51L303.5 133.34L303 133.3L302.5 133.11L302 133.12L301.5 133.5L301 133.93L300.5 133.88L300 134.21L299.5 134.06L299 133.45L298.5 133.15L298 133.21L297.5 134.28L297 134.77L296.5 133.72L296 134.5L295.5 133.11L295 134.19L294.5 133.34L294 133.11L293.5 133.13L293 133.85L292.5 134.84L292 133.72L291.5 133.34L291 133.11L290.5 133.38L290 133.99L289.5 133.12L289 133.78L288.5 133.11L288 133.14L287.5 133.13L287 133.49L286.5 133.28L286 133.31L285.5 133.17L285 133.17L284.5 133.19L284 133.1L283.5 133.55L283 134.03L282.5 134.36L282 134.28L281.5 133.16L281 133.19L280.5 133.46L280 133.1L279.5 133.3L279 133.12L278.5 133.96L278 133.26L277.5 135.01L277 133.16L276.5 133.51L276 133.22L275.5 133.73L275 133.1L274.5 133.31L274 133.53L273.5 133.19L273 133.26L272.5 133.35L272 133.18L271.5 134.99L271 133.98L270.5 133.1L270 134.27L269.5 133.63L269 133.3L268.5 133.73L268 133.18L267.5 133.83L267 133.93L266.5 134.24L266 133.13L265.5 134.71L265 133.21L264.5 134.09L264 133.28L263.5 133.2L263 133.22L262.5 133.48L262 134.23L261.5 133.3L261 133.13L260.5 133.66L260 133.21L259.5 133.18L259 134L258.5 133.97L258 133.35L257.5 135.52L257 133.43L256.5 134.7L256 133.13L255.5 133.59L255 133.54L254.5 134.49L254 133.21L253.5 133.39L253 133.4L252.5 133.1L252 133.79L251.5 133.75L251 133.12L250.5 133.24L250 133.16L249.5 133.89L249 133.47L248.5 133.2L248 133.48L247.5 133.4L247 133.1L246.5 133.37L246 133.13L245.5 133.27L245 133.11L244.5 133.22L244 133.1L243.5 133.12L243 133.17L242.5 133.24L242 133.83L241.5 133.25L241 133.22L240.5 135.72L240 134.55L239.5 133.16L239 133.38L238.5 133.94L238 133.39L237.5 134.31L237 133.6L236.5 134.44L236 133.48L235.5 133.42L235 133.83L234.5 133.3L234 133.98L233.5 133.49L233 133.18L232.5 133.17L232 134.67L231.5 133.45L231 133.41L230.5 133.98L230 134.88L229.5 133.58L229 133.62L228.5 133.2L228 133.21L227.5 133.13L227 133.29L226.5 133.1L226 134.12L225.5 133.86L225 133.18L224.5 133.11L224 133.15L223.5 133.12L223 133.24L222.5 133.89L222 135.44L221.5 133.55L221 133.35L220.5 133.73L220 134.07L219.5 134.25L219 133.58L218.5 133.75L218 133.38L217.5 132.24L217 132.44L216.5 133L216 132.66L215.5 132.26L215 135.02L214.5 132.65L214 133.04L213.5 133.66L213 133.08L212.5 133.33L212 133.96L211.5 133.18L211 133.09L210.5 135.38L210 133.66L209.5 133.21L209 133.29L208.5 133.12L208 133.15L207.5 133.35L207 133.31L206.5 133.34L206 133.76L205.5 133.15L205 134.44L204.5 133.24L204 134.54L203.5 133.39L203 133.31L202.5 133.55L202 133.79L201.5 133.13L201 133.11L200.5 133.41L200 133.17L199.5 133.15L199 133.59L198.5 134.55L198 133.26L197.5 134.34L197 133.21L196.5 133.7L196 133.84L195.5 133.11L195 133.3L194.5 134.29L194 134.39L193.5 136.02L193 133.1L192.5 133.12L192 134.43L191.5 135.06L191 134.04L190.5 134.28L190 133.35L189.5 133.2L189 133.38L188.5 133.91L188 133.68L187.5 133.81L187 133.14L186.5 134.1L186 133.32L185.5 134.22L185 133.38L184.5 134.33L184 134.29L183.5 133.15L183 133.34L182.5 133.11L182 133.13L181.5 135.1L181 133.49L180.5 133.55L180 133.1L179.5 133.7L179 133.21L178.5 134.14L178 133.28L177.5 133.11L177 133.47L176.5 134.37L176 133.12L175.5 133.78L175 134.14L174.5 134.03L174 133.17L173.5 133.13L173 134.56L172.5 133.21L172 133.41L171.5 133.26L171 133.75L170.5 134.34L170 133.16L169.5 134.55L169 133.11L168.5 133.29L168 133.3L167.5 133.36L167 134.21L166.5 133.37L166 133.87L165.5 134.41L165 133.97L164.5 133.99L164 133.51L163.5 133.68L163 133.11L162.5 133.23L162 133.11L161.5 133.72L161 133.42L160.5 133.22L160 133.86L159.5 133.9L159 133.12L158.5 134.31L158 133.34L157.5 133.14L157 133.45L156.5 133.16L156 133.14L155.5 133.29L155 133.74L154.5 133.1L154 134.64L153.5 133.31L153 133.11L152.5 133.3L152 133.15L151.5 134.7L151 133.5L150.5 133.36L150 134.41L149.5 133.31L149 133.35L148.5 133.65L148 133.35L147.5 133.53L147 133.11L146.5 133.28L146 133.18L145.5 133.11L145 133.21L144.5 133.59L144 133.35L143.5 133.42L143 133.42L142.5 133.69L142 135.91L141.5 134.5L141 133.7L140.5 133.12L140 135.35L139.5 133.6L139 133.11L138.5 133.51L138 133.14L137.5 133.61L137 133.59L136.5 133.24L136 133.16L135.5 133.15L135 134.25L134.5 134.78L134 133.28L133.5 134.35L133 133.9L132.5 133.11L132 133.85L131.5 133.4L131 133.12L130.5 133.29L130 133.79L129.5 133.14L129 133.12L128.5 133.31L128 133.53L127.5 133.54L127 133.24L126.5 133.18L126 133.43L125.5 133.18L125 133.55L124.5 133.25L124 133.13L123.5 133.28L123 133.16L122.5 133.45L122 133.26L121.5 133.48L121 134.26L120.5 133.29L120 133.26L119.5 133.8L119 133.35L118.5 133.75L118 133.86L117.5 133.37L117 134.65L116.5 134.11L116 133.38L115.5 133.53L115 133.14L114.5 134.18L114 134.57L113.5 133.11L113 133.23L112.5 133.17L112 133.48L111.5 133.19L111 133.29L110.5 133.14L110 133.12L109.5 133.15L109 133.31L108.5 133.28L108 133.26L107.5 133.55L107 133.37L106.5 133.54L106 133.21L105.5 133.38L105 133.41L104.5 133.47L104 133.56L103.5 133.9L103 133.12L102.5 133.31L102 133.15L101.5 133.17L101 133.22L100.5 133.38L100 135.45L99.5 135.39L99 133.2L98.5 134.14L98 133.36L97.5 133.1L97 133.53L96.5 135.5L96 133.37L95.5 134.01L95 133.66L94.5 134.91L94 133.4L93.5 133.52L93 133.63L92.5 133.16L92 133.19L91.5 133.13L91 134.61L90.5 133.43L90 133.49L89.5 133.1L89 133.11L88.5 133.23L88 133.26L87.5 133.15L87 133.74L86.5 133.71L86 133.11L85.5 133.57L85 133.96L84.5 133.3L84 134.27L83.5 133.11L83 135.98L82.5 133.48L82 133.22L81.5 133.86L81 133.2L80.5 133.19L80 133.22L79.5 135.27L79 133.2L78.5 133.23L78 133.45L77.5 133.53L77 133.57L76.5 134.22L76 134.66L75.5 133.1L75 133.1L74.5 134.59L74 133.2L73.5 133.15L73 133.31L72.5 133.12L72 133.15L71.5 136.26L71 134.21L70.5 134.67L70 133.22L69.5 133.1L69 133.27L68.5 133.47L68 133.34L67.5 133.11L67 133.51L66.5 134.47L66 133.24L65.5 133.12L65 133.38L64.5 134.14L64 134.28L63.5 133.37L63 134L62.5 133.4L62 133.28L61.5 134.11L61 133.15L60.5 133.1L60 134.28L59.5 133.81L59 133.12L58.5 133.48L58 133.17L57.5 133.72L57 133.1L56.5 133.91L56 135.27L55.5 133.82L55 133.19L54.5 133.14L54 133.59L53.5 133.3L53 135.04L52.5 133.21L52 133.35L51.5 133.24L51 133.15L50.5 133.2L50 133.43L49.5 133.29L49 133.31L48.5 134.4L48 133.34L47.5 133.11L47 133.91L46.5 133.11L46 133.99L45.5 133.12L45 133.52L44.5 133.1L44 133.26L43.5 133.1L43 134.6L42.5 133.5L42 133.64L41.5 133.33L41 133.48L40.5 133.13L40 133.23L39.5 133.14L39 134.74L38.5 133.67L38 133.91L37.5 134.56L37 133.31L36.5 133.25L36 133.51L35.5 133.97L35 134.48L34.5 133.22L34 134.49L33.5 133.72L33 133.84L32.5 133.15L32 133.22L31.5 133.9L31 133.85L30.5 134.58L30 135.3L29.5 133.26L29 133.16L28.5 133.28L28 133.19L27.5 133.81L27 133.45L26.5 133.73L26 133.1L25.5 134.01L25 134.62L24.5 133.35L24 133.17L23.5 134.58L23 133.62L22.5 133.16L22 133.3L21.5 133.48L21 133.14L20.5 133.93L20 135.14L19.5 133.11L19 133.17L18.5 135.05L18 135.44L17.5 133.21L17 137.9Z" fill="#ff10f8"/>
<path d="M17 419.05L17.5 420.87L18 421.33L18.5 420.54L19 424.46L19.5 426.99L20 430.1L20.5 433.84L21 437.82L21.5 441.7L22 446.1L22.5 450.49L23 454.34L23.5 457.97L24 460.57L24.5 463.18L25 462.65L25.5 459.41L26 457.08L26.5 453.28L27 449.14L27.5 445.5L28 441.28L28.5 436.76L29 433.75L29.5 430.66L30 427.69L30.5 425.58L31 424.27L31.5 423.38L32 422.95L32.5 422.08L33 421.78L33.5 421.98L34 422.76L34.5 423.46L35 424L35.5 424.65L36 426.5L36.5 429.27L37 432.92L37.5 435.84L38 440.11L38.5 443.98L39 447.4L39.5 451.12L40 454.97L40.5 458.05L41 459.67L41.5 461.46L42 459.66L42.5 456.92L43 453.57L43.5 450.46L44 446.89L44.5 443.28L45 439.13L45.5 435.96L46 433.13L46.5 430.38L47 427.42L47.5 426.06L48 425.47L48.5 425.25L49 422.95L49.5 423.59L50 423.73L50.5 423.54L51 424.76L51.5 425.62L52 426.51L52.5 428.08L53 430.13L53.5 432.83L54 435.24L54.5 438.78L55 442.48L55.5 445.94L56 449.36L56.5 451.61L57 455.53L57.5 457.14L58 459.95L58.5 458.09L59 456.53L59.5 454.09L60 451.18L60.5 447.11L61 443.75L61.5 440.75L62 437.48L62.5 434.69L63 431.58L63.5 429.75L64 428.57L64.5 427.55L65 426.9L65.5 425.79L66 425.27L66.5 425.42L67 425.51L67.5 426.51L68 426.29L68.5 427.52L69 428.48L69.5 430.39L70 432.49L70.5 433.91L71 436.28L71.5 440.89L72 442.81L72.5 445.9L73 448.89L73.5 452.79L74 455.58L74.5 457.57L75 458.05L75.5 456.21L76 453.64L76.5 451.16L77 447.43L77.5 445.23L78 442.21L78.5 438.16L79 436.08L79.5 434.15L80 432L80.5 430.47L81 428.4L81.5 428.73L82 428.04L82.5 427.42L83 426.77L83.5 426.73L84 427.62L84.5 427.58L85 428.63L85.5 429.7L86 430.85L86.5 432.69L87 433.98L87.5 436.94L88 439.96L88.5 442.86L89 445.11L89.5 448.34L90 451.11L90.5 453.61L91 455.59L91.5 457.25L92 455.44L92.5 453.59L93 451.33L93.5 448.58L94 445.66L94.5 443.16L95 440.6L95.5 438.1L96 435.29L96.5 433.37L97 432.18L97.5 430.9L98 430.18L98.5 429.48L99 428.74L99.5 427.3L100 427.44L100.5 427.73L101 429.33L101.5 429.75L102 430.53L102.5 431.21L103 432.91L103.5 434.67L104 436.73L104.5 439.09L105 441.82L105.5 444.46L106 446.56L106.5 449.56L107 451.08L107.5 453.06L108 455.53L108.5 454.98L109 453.23L109.5 450.25L110 448.15L110.5 446.42L111 443.09L111.5 440.93L112 438.83L112.5 436.89L113 433.98L113.5 432.4L114 432.17L114.5 431.52L115 431.06L115.5 429.47L116 429.73L116.5 429.4L117 428.72L117.5 429.12L118 429.99L118.5 431.41L119 431.66L119.5 432.61L120 434.47L120.5 436.01L121 438.05L121.5 440.5L122 443.37L122.5 445.15L123 447.23L123.5 450.26L124 450.88L124.5 453.85L125 454.41L125.5 452.93L126 451.2L126.5 448.06L127 446.92L127.5 443.29L128 442.23L128.5 440.18L129 438.11L129.5 435.44L130 432.98L130.5 433.51L131 432.51L131.5 432.24L132 431.4L132.5 430.45L133 430.34L133.5 430.39L134 430.5L134.5 431.33L135 432.31L135.5 432.62L136 433.25L136.5 434.92L137 435.83L137.5 437.76L138 440.32L138.5 442.43L139 444.25L139.5 446.49L140 448.53L140.5 450.61L141 451.96L141.5 453.62L142 452.64L142.5 451.01L143 449.35L143.5 446.64L144 444.43L144.5 443.01L145 441.21L145.5 439.21L146 437.47L146.5 435.12L147 434.53L147.5 433.22L148 432.18L148.5 432.62L149 432L149.5 431.54L150 430.93L150.5 431.58L151 431.89L151.5 432.27L152 432.89L152.5 433.99L153 434.82L153.5 435.52L154 437.47L154.5 439.64L155 441.28L155.5 443.51L156 445.51L156.5 446.52L157 449.26L157.5 450.6L158 452.14L158.5 451.99L159 450.95L159.5 449.28L160 447.61L160.5 445.86L161 443.95L161.5 440.85L162 440.21L162.5 437.58L163 436.69L163.5 435.56L164 434.82L164.5 433.96L165 431.54L165.5 432.06L166 431.91L166.5 431.77L167 432.2L167.5 432.59L168 433.16L168.5 433.96L169 433.66L169.5 434.96L170 436.03L170.5 437.69L171 439.12L171.5 440.42L172 442.74L172.5 444.54L173 446.34L173.5 446.86L174 449.31L174.5 450.45L175 450.94L175.5 450.67L176 449.32L176.5 446.93L177 445.39L177.5 443.25L178 442.72L178.5 440.61L179 439.27L179.5 437.96L180 436.37L180.5 435.7L181 434.79L181.5 434.59L182 431.87L182.5 432.71L183 432.58L183.5 432.7L184 432.63L184.5 432.59L185 434.22L185.5 434.25L186 435.45L186.5 435.42L187 436.98L187.5 438.73L188 439.73L188.5 441.92L189 442.77L189.5 444.38L190 446.59L190.5 448.34L191 449.64L191.5 449.77L192 449.83L192.5 449.24L193 447.27L193.5 446.39L194 444.35L194.5 443.16L195 440.97L195.5 439.45L196 438.68L196.5 437.4L197 436.14L197.5 435.94L198 434.65L198.5 402.81L199 361.79L199.5 361.47L200 364.61L200.5 368.14L201 367.86L201.5 368.56L202 367.47L202.5 367.41L203 365.25L203.5 368.44L204 368.58L204.5 368.26L205 366.77L205.5 368.26L206 368.66L206.5 368.46L207 367.61L207.5 367.9L208 368.13L208.5 367.39L209 368.62L209.5 366.98L210 367.79L210.5 368.54L211 368.57L211.5 368.07L212 367.14L212.5 368.7L213 371.59L213.5 430.34L214 474.53L214.5 472.88L215 471.74L215.5 472.66L216 472.49L216.5 472.51L217 471.87L217.5 472.42L218 472.7L218.5 472.38L219 472.62L219.5 471.98L220 472.37L220.5 472.69L221 472.46L221.5 472.48L222 472.24L222.5 472.13L223 471.91L223.5 472.65L224 472.64L224.5 470.9L225 472.69L225.5 467.18L226 471.57L226.5 472.64L227 472.7L227.5 471.47L228 471.92L228.5 472.42L229 472.65L229.5 472.54L230 471.69L230.5 472.37L231 470.71L231.5 472.05L232 471.87L232.5 472.13L233 470.38L233.5 470.43L234 472.3L234.5 472.42L235 472.48L235.5 472.6L236 471.48L236.5 470.84L237 471.53L237.5 472.64L238 472.63L238.5 472.04L239 472.27L239.5 471.93L240 471.64L240.5 472.56L241 472.7L241.5 472.65L242 472.7L242.5 472.75L243 476.36L243.5 477.04L244 472.73L244.5 469.55L245 463.66L245.5 458.44L246 451.5L246.5 444.17L247 438.06L247.5 430.65L248 425.07L248.5 419.37L249 414.09L249.5 410.65L250 408.12L250.5 405.09L251 406.14L251.5 405.3L252 405.1L252.5 405.83L253 406.56L253.5 406.84L254 409.3L254.5 411.86L255 416.87L255.5 421.94L256 427.18L256.5 434.04L257 440.57L257.5 446.94L258 453.18L258.5 459.26L259 464.7L259.5 468.96L260 472.76L260.5 471.95L261 468.74L261.5 464.2L262 459L262.5 453.36L263 446.87L263.5 441.15L264 435.21L264.5 429.44L265 424.19L265.5 419.47L266 416.3L266.5 413.64L267 411.65L267.5 411.53L268 410.28L268.5 409.63L269 410.55L269.5 411.02L270 411.94L270.5 412.86L271 414.5L271.5 419.08L272 423.27L272.5 428.17L273 432.84L273.5 439.12L274 443.6L274.5 450.56L275 456.31L275.5 460.98L276 465.63L276.5 468.76L277 470.92L277.5 468.04L278 464.26L278.5 459.93L279 454.93L279.5 449.58L280 443.51L280.5 437.52L281 433.38L281.5 428.4L282 424.11L282.5 420.61L283 417.98L283.5 416.21L284 415.39L284.5 414.48L285 413.76L285.5 413.49L286 414.54L286.5 414.74L287 415.88L287.5 417.62L288 419.5L288.5 424.12L289 426.69L289.5 433L290 437.15L290.5 442.24L291 446.99L291.5 452.51L292 456.21L292.5 461.47L293 465.12L293.5 467.75L294 466.39L294.5 463.34L295 459.56L295.5 455.01L296 449.82L296.5 445L297 440.34L297.5 435.71L298 429.62L298.5 427.22L299 423.81L299.5 421.17L300 418.08L300.5 418.43L301 417.95L301.5 417.18L302 416.6L302.5 415.81L303 417.65L303.5 417.83L304 419.71L304.5 421.51L305 422.99L305.5 427.67L306 431.35L306.5 436.05L307 440.64L307.5 445.49L308 449.97L308.5 454.5L309 458.61L309.5 461.56L310 464.95L310.5 465.65L311 462.5L311.5 459.65L312 455.91L312.5 451.58L313 447.06L313.5 441.47L314 438.29L314.5 433.04L315 430.19L315.5 427.18L316 424.53L316.5 422.54L317 421.45L317.5 420.54L318 419.82L318.5 419.5L319 419.55L319.5 420.36L320 421.14L320.5 421.61L321 423.05L321.5 425.42L322 428.25L322.5 431.55L323 435.28L323.5 439.58L324 443.11L324.5 448.08L325 452L325.5 455.95L326 459.15L326.5 461.97L327 463.95L327.5 461.69L328 458.17L328.5 455.65L329 451.75L329.5 447.97L330 443.5L330.5 439.35L331 435.93L331.5 432.29L332 429.26L332.5 426.77L333 424.61L333.5 422.38L334 422.9L334.5 421.87L335 419.98L335.5 421.18L336 422.03L336.5 422.97L337 423.03L337.5 424.48L338 425.89L338.5 428.1L339 431.01L339.5 433.5L340 437.64L340.5 441.05L341 445.53L341.5 449.21L342 452.12L342.5 455.27L343 458.71L343.5 460.95L344 461.13L344.5 458.76L345 455.61L345.5 452.65L346 448.46L346.5 444.98L347 441.48L347.5 438.01L348 434.72L348.5 431.81L349 428.71L349.5 427.46L350 425.12L350.5 425.36L351 424.81L351.5 423.59L352 423.72L352.5 423.91L353 424.6L353.5 425.41L354 425.86L354.5 427.17L355 428.49L355.5 431.22L356 433.66L356.5 437.19L357 440.33L357.5 444.04L358 447.35L358.5 450.87L359 454.02L359.5 456.71L360 459.08L360.5 460.24L361 456.74L361.5 455.37L362 451.38L362.5 449.35L363 446.01L363.5 442.49L364 439.44L364.5 436.42L365 433.66L365.5 430.95L366 427.72L366.5 428.04L367 425.98L367.5 426.81L368 426.01L368.5 422.48L369 425.32L369.5 426L370 426.7L370.5 427.29L371 427.41L371.5 428.99L372 430.52L372.5 433.41L373 435.45L373.5 438.39L374 442.09L374.5 444.36L375 448.42L375.5 451L376 453.99L376.5 456.21L377 457.56L377.5 457.26L378 454.54L378.5 452.29L379 449.41L379.5 447.07L380 443.95L380.5 440.95L381 437.96L381.5 435L382 432.76L382.5 431.06L383 429.67L383.5 428.86L384 427.89L384.5 427.71L385 427.11L385.5 426.41L386 427.29L386.5 426.74L387 428.26L387.5 429.16L388 429.48L388.5 431.34L389 433.19L389.5 434.89L390 438.29L390.5 441L391 443.95L391.5 446.89L392 448.69L392.5 451.56L393 454.31L393.5 455.91L394 456.33L394.5 454.98L395 452.82L395.5 448.27L396 447.52L396.5 445L397 442.19L397.5 438.59L398 437.18L398.5 434.53L399 432.94L399.5 430.89L400 428.77L400.5 427.76L401 429.13L401.5 428.18L402 428.32L402.5 428.11L403 428.88L403.5 428.53L404 429.69L404.5 430.34L405 431.68L405.5 431.85L406 435.27L406.5 436.81L407 440.27L407.5 442.81L408 445.29L408.5 447.62L409 450.47L409.5 452.65L410 453.65L410.5 454.96L411 454.23L411.5 452.3L412 449.98L412.5 446.99L413 445.04L413.5 442.8L414 440.29L414.5 438.1L415 435.86L415.5 434L416 432.91L416.5 430.45L417 431.33L417.5 430.49L418 429.49L418.5 429.42L419 428.33L419.5 429.5L420 430.24L420.5 430.65L421 431.37L421.5 430.79L422 433.06L422.5 435.48L423 437L423.5 438.5L424 441.61L424.5 444.29L425 446.35L425.5 448.9L426 450.99L426.5 451.92L427 454.29L427.5 453.64L428 450.42L428.5 450.31L429 446.07L429.5 446.05L430 443.8L430.5 441.54L431 439.06L431.5 437.21L432 435.61L432.5 433.4L433 432.68L433.5 432.46L434 431.83L434.5 430.51L435 428.81L435.5 430.47L436 430.52L436.5 431.12L437 431.83L437.5 432.14L438 432.41L438.5 433.72L439 435.27L439.5 437.09L440 439.09L440.5 440.93L441 442.53L441.5 445.3L442 447.39L442.5 449.05L443 451.17L443.5 451.88L444 453.33L444.5 452.05L445 450.45L445.5 448.28L446 446.37L446.5 443.84L447 442.41L447.5 440.22L448 438.53L448.5 436.87L449 434.01L449.5 433.81L450 433.54L450.5 432.04L451 431.89L451.5 431.79L452 431.32L452.5 431.41L453 431.74L453.5 432.21L454 432.08L454.5 433.44L455 434.44L455.5 435.59L456 436.82L456.5 438.65L457 438.72L457.5 442.22L458 444.1L458.5 445.63L459 448.18L459.5 449.17L460 451.38L460.5 452.08L461 450.5L461.5 450.31L462 448.56L462.5 446.73L463 443.41L463.5 442.8L464 441L464.5 439.44L465 436.14L465.5 436.52L466 434.78L466.5 434.42L467 434.04L467.5 433.34L468 432.41L468.5 432.16L469 431.78L469.5 432.32L470 432.16L470.5 432.29L471 432.47L471.5 434.69L472 434.7L472.5 436.88L473 438.13L473.5 439.94L474 440.39L474.5 442.35L475 445.15L475.5 447.03L476 448.47L476.5 450.08L477 451.26L477.5 451.03L478 448.79L478.5 448.37L479 447.13L479.5 445.26L480 443.42L480.5 441.13L481 439.57L481.5 438.47L482 437.37L482.5 436.08L483 435.32L483.5 434.46L484 434.2L484.5 433.53L485 432.5L485.5 431.27L486 432.69L486.5 433L487 433.8L487.5 433.69L488 434.79L488.5 435.76L489 436.77L489.5 438.07L490 439.11L490.5 441.04L491 442.45L491.5 444.34L492 445.9L492.5 447.27L493 447.93L493.5 449.9L494 450.51L494.5 449.75L495 448.72L495.5 447.05L496 445.8L496.5 443.14L497 442.47L497.5 440.97L498 439.33L498.5 438.15L499 436.68L499.5 436.13L500 435.65L500.5 434.99L501 383.04L501.5 361.56L502 361.67L502.5 365.19L503 368.41L503.5 368.6L504 368.51L504.5 368.7L505 366.28L505.5 368.02L506 368.47L506.5 367.91L507 368.44L507.5 367.06L508 368.37L508.5 368.51L509 366.61L509.5 368.58L510 368.63L510.5 368.49L511 368.55L511.5 368.15L512 368.42L512.5 368.69L513 368.21L513.5 367.18L514 366.79L514.5 367.11L515 369.18L515.5 387.63L516 458.68L516.5 473.2L517 472.57L517.5 471.73L518 472.03L518.5 472.48L519 471.64L519.5 472.09L520 470.27L520.5 472.16L521 470.14L521.5 471.48L522 470.63L522.5 472.64L523 472.67L523.5 472.56L524 470.73L524.5 472.66L525 472.07L525.5 472.47L526 471.86L526.5 470.06L527 470.62L527.5 470.89L528 472.35L528.5 472.37L529 472.56L529.5 472.14L530 471.89L530.5 472.32L531 471L531.5 472.1L532 472.45L532.5 472.05L533 472.64L533.5 472.05L534 471.43L534.5 472.58L535 472.36L535.5 472.58L536 472.07L536.5 472.59L537 472.62L537.5 472.11L538 471.99L538.5 470.85L539 472.52L539.5 472.61L540 472.68L540.5 472.23L541 471.77L541.5 472.55L542 471.95L542.5 472.64L543 472.45L543.5 470.9L544 472.55L544.5 472.69L545 474.06L545.5 476.78L546 476.13L546.5 472.48L547 467.56L547.5 461.54L548 455.6L548.5 448.9L549 442.23L549.5 435.3L550 428.8L550.5 422.28L551 417.32L551.5 413.06L552 409.67L552.5 407.28L553 406.4L553.5 405.75L554 404.89L554.5 404.83L555 405.82L555.5 406.66L556 407.43L556.5 410.32L557 414.1L557.5 418.72L558 423.88L558.5 429.68L559 436.55L559.5 443.15L560 449.54L560.5 455.73L561 461.61L561.5 466.6L562 470.53L562.5 473.72L563 470.61L563.5 467.01L564 461.27L564.5 456.83L565 450.89L565.5 444.79L566 438.37L566.5 432.89L567 427.39L567.5 422.17L568 418.36L568.5 414.89L569 412.54L569.5 411.75L570 411.17L570.5 409.69L571 409.65L571.5 410.66L572 411.7L572.5 411.76L573 413.79L573.5 416.82L574 420.36L574.5 423.82L575 430.24L575.5 435.16L576 441.47L576.5 447.39L577 453.02L577.5 457.93L578 462.92L578.5 467.15L579 470.29L579.5 469.43L580 466.71L580.5 461.71L581 458.04L581.5 452.81L582 447.12L582.5 441.96L583 435.85L583.5 431.4L584 426.8L584.5 422.78L585 419.15L585.5 417.05L586 415.35L586.5 415.13L587 413.99L587.5 413.5L588 414.12L588.5 414.74L589 414.99L589.5 416.8L590 418.83L590.5 421.8L591 425.54L591.5 430.12L592 435L592.5 439.01L593 444.24L593.5 449.46L594 453.97L594.5 458L595 463L595.5 466.45L596 466.6L596.5 464.89L597 461.97L597.5 457.74L598 452.98L598.5 448.44L599 442.48L599.5 437.53L600 433.74L600.5 429.53L601 425.82L601.5 422.19L602 420.21L602.5 418.62L603 418.42L603.5 417.34L604 416.5L604.5 416.93L605 417.56L605.5 418.44L606 418.96L606.5 420.12L607 422.56L607.5 424.87L608 428.53L608.5 433.4L609 437.95L609.5 442.58L610 447.33L610.5 450.01L611 456.24L611.5 460.04L612 463.3L612.5 465.74L613 462.89L613.5 461.23L614 458.2L614.5 453.81L615 449.02L615.5 445.54L616 440.96L616.5 436.61L617 432.67L617.5 426.71L618 425.94L618.5 423.68L619 421.96L619.5 420.79L620 420.4L620.5 419.11L621 419.48L621.5 419.91L622 420.44L622.5 420.8L623 421.28L623.5 423.86L624 426.42L624.5 429.54L625 432.86L625.5 437.02L626 440.61L626.5 445.51L627 449.75L627.5 453.76L628 456.32L628.5 459.95L629 462.83L629.5 462.88L630 460.13L630.5 457.38L631 454.21L631.5 450.19L632 444.88L632.5 442.17L633 438.3L633.5 433.66L634 431.22L634.5 428.26L635 426.05L635.5 424.45L636 423.55L636.5 423.13L637 421.12L637.5 421.59L638 421.95L638.5 422.02L639 423.4L639.5 423.28L640 424.18L640.5 426.82L641 428.87L641.5 431.94L642 432.59L642.5 439.09L643 442.77L643.5 447.04L644 449.95L644.5 453.99L645 456.77L645.5 460.15L646 461.89L646.5 459.63L647 457.45L647.5 454.38L648 451.27L648.5 447.68L649 443.72L649.5 440.07L650 436.33L650.5 433.73L651 430.35L651.5 427.06L652 426.09L652.5 425.41L653 424.88L653.5 424.51L654 423.86L654.5 423.78L655 423.71L655.5 425L656 425.38L656.5 425.91L657 427.77L657.5 427.75L658 431.96L658.5 434.85L659 438.29L659.5 441.74L660 445.43L660.5 448.89L661 451.7L661.5 455.09L662 457.45L662.5 459.91L663 459.09L663.5 457.37L664 454.7L664.5 451.82L665 448.06L665.5 444.6L666 441.39L666.5 437.84L667 434.76L667.5 432.25L668 429.97L668.5 428.83L669 427.64L669.5 426.9L670 426.36L670.5 425.68L671 425.14L671.5 425.66L672 426.16L672.5 427.12L673 427.23L673.5 428.3L674 429.98L674.5 430.14L675 434.21L675.5 437.12L676 439.78L676.5 442.65L677 446.19L677.5 449.46L678 452.37L678.5 454.86L679 454.91L679.5 458.27L680 456.49L680.5 454.35L681 451.03L681.5 448.85L682 445.86L682.5 442.82L683 439.26L683.5 436.4L684 434.44L684.5 430.89L685 430.77L685.5 429.37L686 428.78L686.5 426.96L687 427.15L687.5 425.76L688 427.05L688.5 426.36L689 428.14L689.5 428.76L690 429.49L690.5 430.59L691 431.3L691.5 433.69L692 436.6L692.5 439.22L693 442.28L693.5 445.15L694 447.81L694.5 450.62L695 453.15L695.5 455.26L696 456.94L696.5 456.07L697 453.86L697.5 451.96L698 447.51L698.5 445.12L699 443.78L699.5 441.19L700 437.31L700.5 436.09L701 433.86L701.5 432.22L702 429.65L702.5 430.23L703 429.86L703.5 428.79L704 428.51L704.5 427.93L705 427.62L705.5 428.49L706 429.07L706.5 429.39L707 431.04L707.5 432.59L708 433.52L708.5 436.3L709 438.65L709.5 440.44L710 443.92L710.5 446.46L711 448.27L711.5 451.39L712 452.86L712.5 454.15L713 455.3L713.5 452.39L714 451.35L714.5 449.35L715 446.33L715.5 443.57L716 441.82L716.5 439.38L717 436.58L717.5 435.03L718 433.43L718.5 432.44L719 431.63L719.5 431.03L720 430.48L720.5 429.06L721 429.47L721.5 427.97L722 429.24L722.5 430.06L723 431.27L723.5 431.28L724 432.85L724.5 434.19L725 434.83L725.5 437.86L726 440.51L726.5 442.78L727 444.52L727.5 447.28L728 448.98L728.5 451.6L729 453.3L729.5 454.34L730 452.36L730.5 451.31L731 449.27L731.5 446.46L732 444.8L732.5 442.21L733 440.6L733.5 438.25L734 436.5L734.5 434.85L735 433.23L735.5 432.84L736 432.28L736.5 431.54L737 431.05L737.5 429.44L738 430.12L738.5 430.8L739 431.34L739.5 431.44L740 432.09L740.5 433.41L741 433.67L741.5 435.03L742 437.59L742.5 439.76L743 440.84L743.5 443.95L744 446.35L744.5 448.35L745 450.24L745.5 450.24L746 453.23L746.5 452.89L747 451.18L747.5 449.7L748 447.7L748.5 445.74L749 443.69L749.5 441.4L750 439.16L750.5 437.8L751 435.79L751.5 434.73L752 433.86L752.5 433.37L753 432.01L753.5 431.86L754 431.57L754.5 430.68L755 431.38L755.5 431.96L756 432.33L756.5 433.32L757 433.9L757.5 434.41L758 436.06L758.5 437.63L759 439.15L759.5 441.11L760 443.24L760.5 443.72L761 447.06L761.5 448.09L762 450.5L762.5 451.96L763 452.37L763.5 450.79L764 449.62L764.5 448.06L765 445.75L765.5 443.99L766 442.43L766.5 440.52L767 438.69L767.5 436.85L768 435.78L768.5 434.77L769 432.27L769.5 433.9L770 433.1L770.5 432.42L771 431.77L771.5 432.11L772 431.94L772.5 432.95L773 433.67L773.5 433.67L774 434.91L774.5 434.94L775 436.42L775.5 438.74L776 440.49L776.5 442.31L777 444.04L777.5 445.45L778 446.94L778.5 449.27L779 450.57L779.5 451.41L780 450.87L780.5 449.58L781 447.75L781.5 446.36L782 444.61L782.5 442.52L783 441.35L783.5 439.69L784 437.94L784.5 436.89L785 435.88L785.5 434.96L786 434.62L786.5 433.98L787 433.32L787.5 432.7L788 431.77L788.5 432.73L789 433.22L789.5 434.09L790 434.77L790.5 435L791 435.53L791.5 437.19L792 438.57L792.5 439.94L793 441.64L793.5 442.6L794 443.91L794.5 445.72L795 448.04L795.5 449.05L796 450.32L796.5 450.05L797 449.42L797.5 448.16L798 445.93L798.5 445.06L799 443.59L799.5 440.76L800 440.47L800.5 438.99L801 437.51L801.5 436.53L802 436.22L802.5 435L803 414.56L803.5 361.79L804 361.4L804.5 361.79L805 366.72L805.5 366.49L806 367.96L806.5 368.48L807 368.35L807.5 367.86L808 368.32L808.5 368.68L809 367.21L809.5 366.28L810 368.02L810.5 368.69L811 368.62L811.5 366.4L812 368.52L812.5 368.57L813 365.89L813.5 368.37L814 368.42L814.5 368.12L815 367.63L815.5 367.59L816 368.14L816.5 366.96L817 368.7L817.5 370.69L818 416.1L818.5 474.56L819 473.22L819.5 472.48L820 472.61L820.5 472.68L821 472.41L821.5 472.65L822 471.79L822.5 472.21L823 472.37L823.5 470.8L824 472.62L824.5 472.7L825 472.43L825.5 471.48L826 472.33L826.5 472.43L827 472.65L827.5 472.11L828 471.26L828.5 472.65L829 472.64L829.5 472.56L830 470.29L830.5 472.38L831 472.6L831.5 471.79L832 472.65L832.5 472.39L833 469.6L833.5 471.39L834 471.19L834.5 469.14L835 471.35L835.5 472.5L836 472.69L836.5 471.79L837 472.63L837.5 471.63L838 471.58L838.5 472.53L839 472.55L839.5 472.53L840 470.97L840.5 472.57L841 471.5L841.5 472.4L842 472.66L842.5 472.67L843 472.1L843.5 472.61L844 472.42L844.5 472.66L845 470.83L845.5 471.24L846 472.69L846.5 472.7L847 472.67L847.5 475.37L848 476.29L848.5 474.84L849 470.69L849.5 465.23L850 458.84L850.5 453.04L851 445.56L851.5 439.47L852 432.55L852.5 425.99L853 420.48L853.5 415.29L854 411.38L854.5 408.21L855 406.83L855.5 406.29L856 405.36L856.5 405.05L857 405.67L857.5 406.49L858 406.85L858.5 408.81L859 411.75L859.5 415.74L860 420.78L860.5 426.57L861 432.77L861.5 439.25L862 445.53L862.5 451.3L863 457.66L863.5 462.82L864 467.82L864.5 471.98L865 472.34L865.5 469.48L866 465.22L866.5 459.76L867 453.99L867.5 448.07L868 442.35L868.5 435.42L869 430.59L869.5 425.33L870 420.07L870.5 416.79L871 413.82L871.5 411.84L872 411.64L872.5 410.82L873 410.06L873.5 410.35L874 411.09L874.5 408.79L875 412.89L875.5 414.55L876 417.9L876.5 422.33L877 427.08L877.5 432.17L878 437.67L878.5 443.72L879 448.23L879.5 454.89L880 460.15L880.5 464.62L881 467.19L881.5 471.12L882 468.24L882.5 465.2L883 459.66L883.5 455.2L884 450.77L884.5 443.93L885 439.46L885.5 434.1L886 429.28L886.5 424.85L887 421.24L887.5 418.45L888 416.07L888.5 414.99L889 414.79L889.5 414.01L890 413.76L890.5 413.76L891 415.36L891.5 415.86L892 416.48L892.5 419.09L893 422.96L893.5 426.2L894 431.96L894.5 436.99L895 440.82L895.5 446.36L896 451.58L896.5 455.43L897 460.59L897.5 462.42L898 466.4L898.5 466.48L899 464.15L899.5 460.32L900 456.01L900.5 451.15L901 446.34L901.5 440.66L902 436.41L902.5 432.06L903 427.94L903.5 424.12L904 421.22L904.5 419.61L905 418.43L905.5 418.17L906 417.3L906.5 416.65L907 417.15L907.5 417.95L908 418.42L908.5 419.05L909 420.86L909.5 422.43L910 426.89L910.5 430.9L911 434.6L911.5 439.63L912 444.4L912.5 448.7L913 453.65L913.5 457.79L914 461.53L914.5 464.42L915 466.09L915.5 463.51L916 458.92L916.5 455.97L917 452.55L917.5 448.24L918 442.39L918.5 439.31L919 434.74L919.5 430.68L920 427.12L920.5 425L921 422L921.5 421.54L922 421.07L922.5 420.14L923 419.44L923.5 419.5L924 420.2L924.5 420.68L925 421.12L925.5 422.76L926 424.92L926.5 427.02L927 430.06L927.5 434.51L928 438.61L928.5 442.74L929 445.48L929.5 451.38L930 455.26L930.5 458.36L931 461.07L931.5 463.92L932 462.16L932.5 459.4L933 455.44L933.5 452.67L934 448.69L934.5 444.7L935 440.56L935.5 436.06L936 432.94L936.5 429.54L937 427.38L937.5 425.26L938 423.95L938.5 423.47L939 422.79L939.5 422.07L940 420.83L940.5 420.87L941 421.64L941.5 423.01L942 424.13L942.5 425.21L943 427.78L943.5 430.42L944 432.87L944.5 437.11L945 440.07L945.5 444.03L946 448.55L946.5 451.96L947 454.35L947.5 457.18L948 460.35L948.5 461.59L949 458.76L949.5 456.5L950 453.09L950.5 448.76L951 445.93L951.5 442.33L952 438.93L952.5 435.43L953 431.62L953.5 429.96L954 427.45L954.5 426.44L955 425.21L955.5 424.86L956 423.02L956.5 423.14L957 423.85L957.5 424.52L958 425.39L958.5 425.25L959 426.56L959.5 428.45L960 429.91L960.5 433.09L961 436.53L961.5 439.04L962 443.35L962.5 446.83L963 450.15L963.5 453.27L964 455.17L964.5 458.5L965 460.5L965.5 458.72L966 455.63L966.5 453.12L967 450.66L967.5 446.56L968 443.13L968.5 440.11L969 436.44L969.5 433.78L970 431.73L970.5 428.25L971 427.86L971.5 426.76L972 426.71L972.5 425.54L973 424.85L973.5 425.05L974 425.77L974.5 426.49L975 427.16L975.5 427.78L976 427.09L976.5 430.75L977 432.28L977.5 435.17L978 438.3L978.5 441.48L979 444.69L979.5 446.46L980 450.84L980.5 453.02L981 455.7L981.5 457.95L982 457.31L982.5 455.18L983 453.29L983.5 450.21L984 447.67L984.5 444.63L985 441.61L985.5 438.33L986 435.61L986.5 433.65L987 430.79L987.5 430.07L988 428.82L988.5 428.31L989 427.95L989.5 427.32L990 425.1L990.5 426.61L991 427.09L991.5 428.13L992 427.97L992.5 429.85L993 431.22L993.5 432.5L994 434.84L994.5 436.78L995 440.53L995.5 443.24L996 446.16L996.5 448.78L997 451.14L997.5 453.77L998 455.69L998.5 456.96L999 455.25L999.5 452.95L1000 450.34L1000.5 448.3L1001 445.62L1001.5 442.62L1002 439.96L1002.5 437.55L1003 434.52L1003.5 432.78L1004 430.78L1004.5 430.39L1005 429.8L1005.5 429.44L1006 428.8L1006.5 428.2L1007 428.35L1007.5 428.39L1008 429.35L1008.5 430.17L1009 430.6L1009.5 431.74L1010 433.25L1010.5 435.01L1011 437.25L1011.5 439.81L1012 441.71L1012.5 444.74L1013 447.12L1013.5 449.62L1014 451.93L1014.5 454.11L1015 455.42L1015.5 454.55L1016 452.35L1016 461.44L1015.5 461.95L1015 463.83L1014.5 461.7L1014 460.93L1013.5 460.28L1013 459.54L1012.5 458.8L1012 457.79L1011.5 456.04L1011 453.8L1010.5 451.94L1010 450.21L1009.5 447.04L1009 443.93L1008.5 441.56L1008 439.8L1007.5 437.93L1007 434.98L1006.5 434.79L1006 436.48L1005.5 438.62L1005 441.12L1004.5 443.71L1004 446.68L1003.5 449.24L1003 452.27L1002.5 454.32L1002 457.08L1001.5 458.41L1001 460.06L1000.5 461.54L1000 462L999.5 462.27L999 463.12L998.5 463.62L998 463.52L997.5 462.57L997 461.56L996.5 461.27L996 460.26L995.5 459.36L995 457.65L994.5 455.71L994 452.63L993.5 450.14L993 447.69L992.5 444.35L992 441.36L991.5 438.67L991 436.85L990.5 434.25L990 432.98L989.5 434.73L989 436.96L988.5 439.71L988 442.43L987.5 445.35L987 448.42L986.5 451.31L986 454.39L985.5 457.03L985 458.91L984.5 460.83L984 462.76L983.5 463.61L983 463.63L982.5 464.46L982 464.52L981.5 464.68L981 465.02L980.5 464.1L980 463.56L979.5 462.99L979 460.96L978.5 459.19L978 457.36L977.5 454.4L977 452.14L976.5 448.65L976 445.31L975.5 442.27L975 439.66L974.5 436.83L974 433.87L973.5 431.9L973 432.73L972.5 435.87L972 438.25L971.5 440.85L971 443.96L970.5 447.25L970 450.94L969.5 454.12L969 456.23L968.5 458.96L968 461.05L967.5 463.58L967 464.29L966.5 464.79L966 465.43L965.5 466.25L965 466.37L964.5 465.98L964 465.64L963.5 466.23L963 464.29L962.5 463.4L962 462.09L961.5 459.58L961 455.85L960.5 454.53L960 449.36L959.5 446.17L959 443L958.5 439.22L958 435.87L957.5 434.03L957 430.78L956.5 430.76L956 432.57L955.5 435.13L955 438.54L954.5 442.08L954 445.09L953.5 449.03L953 452.55L952.5 456.1L952 459.03L951.5 462.33L951 463.86L950.5 465.36L950 466.36L949.5 467L949 467.62L948.5 468.06L948 468.06L947.5 467.47L947 466.67L946.5 467.58L946 465.03L945.5 463.3L945 460.95L944.5 458.14L944 456.14L943.5 451.14L943 447.39L942.5 443.47L942 439.65L941.5 436.28L941 432.84L940.5 431.28L940 428.78L939.5 429.74L939 432.56L938.5 435.98L938 439.46L937.5 443.55L937 447.4L936.5 451.43L936 455.32L935.5 458.85L935 462.19L934.5 465.47L934 467.55L933.5 468.18L933 468.96L932.5 469.51L932 471.19L931.5 470.2L931 470.82L930.5 468.79L930 468.43L929.5 467.34L929 465.41L928.5 462.94L928 460.11L927.5 456.37L927 452.77L926.5 448.26L926 444.45L925.5 439.68L925 436.03L924.5 431.98L924 429.39L923.5 426.44L923 426.28L922.5 429.26L922 432.5L921.5 436L921 440.2L920.5 444.6L920 449.19L919.5 453.5L919 457.69L918.5 461.91L918 464.81L917.5 467.9L917 469.53L916.5 471.26L916 471.15L915.5 472.92L915 472.32L914.5 472.2L914 471.48L913.5 470.63L913 469.89L912.5 468.39L912 466.19L911.5 462.78L911 459.28L910.5 456.07L910 451.06L909.5 445.38L909 441.46L908.5 436.53L908 432.04L907.5 428.39L907 425.01L906.5 423.48L906 425.84L905.5 429.37L905 432.95L904.5 437.91L904 442.5L903.5 447.17L903 452.25L902.5 457.2L902 461.43L901.5 465.15L901 468.41L900.5 470.95L900 472.43L899.5 473.41L899 473.77L898.5 474.47L898 475.01L897.5 473.94L897 473.77L896.5 472.55L896 472.07L895.5 468.99L895 465.81L894.5 461.87L894 457.23L893.5 452.5L893 448.6L892.5 441.92L892 435.73L891.5 430.98L891 426.77L890.5 424.58L890 420.33L889.5 421.25L889 424.89L888.5 428.59L888 433.32L887.5 438.25L887 444.83L886.5 449.44L886 454.72L885.5 460.18L885 464.47L884.5 470.56L884 471.66L883.5 474.64L883 477.42L882.5 475.89L882 477.08L881.5 477.2L881 477.12L880.5 476.29L880 475.28L879.5 473.91L879 471.88L878.5 468.4L878 464.92L877.5 459.22L877 453.67L876.5 448.97L876 442.2L875.5 436.4L875 430.87L874.5 426.29L874 421.73L873.5 418.31L873 418.84L872.5 420.53L872 424.36L871.5 429.23L871 434.55L870.5 440.68L870 446.95L869.5 453.04L869 458.5L868.5 464.35L868 468.89L867.5 473.53L867 476.08L866.5 477.84L866 478.45L865.5 479.28L865 480.28L864.5 480.24L864 478.99L863.5 478.37L863 477.61L862.5 475.15L862 471.67L861.5 467.98L861 462.36L860.5 456.36L860 450.03L859.5 443.53L859 437.54L858.5 431.47L858 424.78L857.5 419.51L857 415.13L856.5 411.78L856 414.13L855.5 417.98L855 422.32L854.5 428.01L854 434.37L853.5 441.7L853 448.4L852.5 454.83L852 461.99L851.5 467.22L851 472.44L850.5 476.74L850 479.42L849.5 481.36L849 482.92L848.5 484.21L848 483.89L847.5 482.71L847 481.54L846.5 481.64L846 482.41L845.5 481.38L845 482.03L844.5 482.47L844 481.35L843.5 481.97L843 481.36L842.5 485.43L842 482.17L841.5 481.48L841 481.31L840.5 481.3L840 482.54L839.5 484.33L839 481.46L838.5 481.46L838 482.9L837.5 482.78L837 481.93L836.5 482.45L836 481.32L835.5 481.39L835 482.35L834.5 482.85L834 481.67L833.5 481.32L833 482.8L832.5 481.53L832 481.68L831.5 481.74L831 481.92L830.5 481.46L830 481.73L829.5 481.76L829 482.14L828.5 481.89L828 482.76L827.5 481.71L827 483.56L826.5 482.62L826 481.48L825.5 481.37L825 482.05L824.5 485.7L824 481.43L823.5 481.78L823 481.58L822.5 482.22L822 481.79L821.5 481.58L821 481.3L820.5 481.57L820 481.55L819.5 482.29L819 481.94L818.5 488.08L818 488.1L817.5 487.71L817 416.52L816.5 378.86L816 378.55L815.5 379.08L815 378.54L814.5 378.53L814 378.75L813.5 378.57L813 378.53L812.5 378.58L812 378.57L811.5 378.61L811 378.96L810.5 380.8L810 379.16L809.5 378.67L809 379.5L808.5 379.79L808 379.84L807.5 378.68L807 379.21L806.5 378.69L806 379.45L805.5 379.13L805 378.02L804.5 438.46L804 439.46L803.5 440.68L803 442.72L802.5 443.75L802 445.56L801.5 446.88L801 448.34L800.5 450.88L800 451.36L799.5 453L799 453.66L798.5 453.89L798 454.43L797.5 455.73L797 456L796.5 456.07L796 456.39L795.5 455.9L795 455.47L794.5 454.24L794 453.8L793.5 453.18L793 452.22L792.5 451.4L792 449.83L791.5 449.61L791 446.58L790.5 445.29L790 444.32L789.5 441.94L789 440.75L788.5 438.96L788 438.43L787.5 439.25L787 439.87L786.5 441.9L786 444.53L785.5 445.16L785 446.38L784.5 448.36L784 449.8L783.5 451.28L783 452.76L782.5 453.69L782 454.58L781.5 455.15L781 456.02L780.5 456.4L780 456.78L779.5 456.9L779 458.47L778.5 456.36L778 455.47L777.5 455.15L777 454.7L776.5 453.84L776 452.8L775.5 450.95L775 449.43L774.5 447.78L774 446.25L773.5 443.98L773 442.43L772.5 440.94L772 439.44L771.5 437.84L771 437.77L770.5 440.32L770 440.48L769.5 442.58L769 444.14L768.5 445.91L768 447.79L767.5 449.95L767 451.51L766.5 453.43L766 454.14L765.5 456.49L765 456.45L764.5 456.77L764 457.21L763.5 458.57L763 458.47L762.5 458.85L762 457.41L761.5 457.33L761 456.24L760.5 456.25L760 454.96L759.5 453.59L759 452.76L758.5 450.5L758 448.84L757.5 447.41L757 446.89L756.5 443.24L756 440.93L755.5 439.89L755 437.8L754.5 437.19L754 440.19L753.5 439.78L753 441.34L752.5 443.46L752 445.41L751.5 447.8L751 449.83L750.5 451.52L750 453.04L749.5 454.64L749 456.18L748.5 458.68L748 457.18L747.5 457.95L747 458.79L746.5 458.98L746 459.05L745.5 458.94L745 458.36L744.5 457.52L744 456.91L743.5 456.16L743 455.39L742.5 453.63L742 451.94L741.5 451.55L741 448.72L740.5 446.11L740 443.66L739.5 441.5L739 439.91L738.5 437.76L738 437.18L737.5 437.17L737 438.45L736.5 440.22L736 442.14L735.5 444.63L735 447.57L734.5 449.05L734 452.03L733.5 453.13L733 455.14L732.5 456.38L732 458.45L731.5 458.36L731 459.64L730.5 460.92L730 460.25L729.5 460.53L729 460.23L728.5 460.11L728 459.29L727.5 458.31L727 458.1L726.5 456.59L726 456.62L725.5 453.41L725 451.45L724.5 449.21L724 446.82L723.5 444.33L723 442.33L722.5 440.18L722 437.85L721.5 436.89L721 435.87L720.5 437.13L720 438.93L719.5 441.11L719 444.02L718.5 445.94L718 448.35L717.5 451.46L717 453.2L716.5 455.13L716 457.19L715.5 459.54L715 459.3L714.5 459.92L714 461.96L713.5 461.76L713 461.62L712.5 462.89L712 461.09L711.5 460.53L711 460.65L710.5 459.69L710 458.78L709.5 457.16L709 455.1L708.5 454.15L708 450.55L707.5 447.94L707 445.37L706.5 442.87L706 440.77L705.5 438.22L705 437.27L704.5 434.27L704 436L703.5 437.47L703 439.57L702.5 442.68L702 444.78L701.5 447.75L701 450.55L700.5 453.03L700 457.22L699.5 457.55L699 459.41L698.5 460.76L698 461.18L697.5 461.71L697 462.58L696.5 463.13L696 463.1L695.5 463.71L695 462.17L694.5 461.57L694 462.14L693.5 460.64L693 458.33L692.5 456.57L692 454.96L691.5 451.57L691 448.92L690.5 445.96L690 443.52L689.5 440.43L689 437.71L688.5 435.7L688 433.6L687.5 433.59L687 435.57L686.5 438.78L686 440.76L685.5 443.65L685 446.69L684.5 450.13L684 453.73L683.5 456.2L683 457.63L682.5 459.82L682 462.31L681.5 462.98L681 463.22L680.5 464.91L680 464.26L679.5 464.59L679 464.87L678.5 464.14L678 463.18L677.5 462.89L677 462.16L676.5 460.54L676 458.41L675.5 456.06L675 455.19L674.5 450.43L674 447.65L673.5 444.09L673 442L672.5 438.22L672 436.57L671.5 433.05L671 431.81L670.5 433.78L670 436.46L669.5 438.91L669 441.99L668.5 445.28L668 449.24L667.5 451.51L667 454.58L666.5 457.78L666 459.87L665.5 463.52L665 463.64L664.5 464.38L664 465.19L663.5 466.18L663 466.18L662.5 466.49L662 465.91L661.5 465.09L661 464.43L660.5 463.7L660 462.73L659.5 460.67L659 458.49L658.5 455.93L658 451.84L657.5 448.17L657 444.62L656.5 441.05L656 438.29L655.5 434.73L655 432.21L654.5 430.2L654 430.91L653.5 433.59L653 436.76L652.5 440.53L652 443.13L651.5 446.94L651 451.88L650.5 453.79L650 457.73L649.5 461L649 462.6L648.5 465.73L648 466.54L647.5 466.46L647 467.53L646.5 467.82L646 468.12L645.5 467.78L645 467.13L644.5 466.82L644 466L643.5 464.61L643 462.41L642.5 460.12L642 457.89L641.5 453.47L641 449.67L640.5 446.82L640 441.99L639.5 438.23L639 434.85L638.5 431.7L638 429.1L637.5 428.33L637 430.74L636.5 435.12L636 437.11L635.5 440.91L635 446.16L634.5 449.12L634 452.96L633.5 457.06L633 460.95L632.5 463.15L632 465.79L631.5 467.7L631 468.23L630.5 468.99L630 470.44L629.5 470.09L629 470.16L628.5 469.4L628 468.63L627.5 468.47L627 466.72L626.5 464.53L626 461.92L625.5 458.6L625 455.08L624.5 450.71L624 446.5L623.5 442.38L623 438.03L622.5 434.45L622 430.64L621.5 427.76L621 425.36L620.5 427.47L620 430.25L619.5 434.12L619 437.68L618.5 442.29L618 446.4L617.5 450.87L617 455.79L616.5 459.34L616 462.97L615.5 466.94L615 468.36L614.5 470.46L614 470.7L613.5 471.45L613 473.07L612.5 472.36L612 472.32L611.5 471.19L611 470.78L610.5 470.41L610 469.1L609.5 464.55L609 463.35L608.5 457.49L608 453.27L607.5 448.19L607 443.57L606.5 438.86L606 434.66L605.5 430.7L605 426.74L604.5 423.9L604 424.76L603.5 427.54L603 430.49L602.5 434.81L602 439.42L601.5 444.92L601 449.2L600.5 454.05L600 458.79L599.5 463.31L599 467.06L598.5 470.48L598 471.69L597.5 472.82L597 473.27L596.5 475.16L596 475.45L595.5 474.34L595 473.8L594.5 473.16L594 472.47L593.5 470.4L593 467.68L592.5 464.08L592 460.3L591.5 456.14L591 450.22L590.5 444.98L590 440.14L589.5 434.28L589 429.99L588.5 425.51L588 422.33L587.5 420.33L587 422.78L586.5 426.06L586 430.48L585.5 435.14L585 440.46L584.5 446.12L584 451.35L583.5 456.84L583 461.77L582.5 466.39L582 469.9L581.5 472.75L581 474.87L580.5 475.6L580 476.62L579.5 477.05L579 477.32L578.5 478.01L578 475.66L577.5 475.24L577 473.03L576.5 470.28L576 466.7L575.5 462.74L575 457.03L574.5 451.93L574 445.72L573.5 439.84L573 434.67L572.5 430.01L572 425.19L571.5 420.62L571 416.93L570.5 418.13L570 422.08L569.5 426.35L569 431.57L568.5 436.85L568 442.96L567.5 448.99L567 455.82L566.5 460.9L566 466.5L565.5 470.51L565 474.02L564.5 476.8L564 478.51L563.5 479.06L563 479.62L562.5 479.98L562 479.5L561.5 478.55L561 478.68L560.5 476.52L560 473.86L559.5 470.23L559 465.42L558.5 459.91L558 453.85L557.5 447.6L557 441.18L556.5 434.42L556 428.31L555.5 422.55L555 417.62L554.5 414.29L554 411.76L553.5 415.58L553 419.96L552.5 424.41L552 430.5L551.5 439.04L551 444.01L550.5 450.82L550 458.31L549.5 463.76L549 469.59L548.5 474.13L548 477.93L547.5 480.53L547 481.59L546.5 483.24L546 483.06L545.5 482.83L545 482.99L544.5 481.33L544 483.42L543.5 481.64L543 482.66L542.5 483.28L542 481.56L541.5 481.56L541 482.05L540.5 481.36L540 484.88L539.5 482.48L539 481.61L538.5 481.38L538 481.87L537.5 481.63L537 481.55L536.5 482.1L536 482.98L535.5 481.3L535 481.3L534.5 481.58L534 481.6L533.5 482.57L533 481.31L532.5 481.36L532 482.59L531.5 481.96L531 481.37L530.5 482.64L530 481.81L529.5 481.48L529 482.16L528.5 481.52L528 483.3L527.5 481.31L527 481.92L526.5 481.3L526 482.15L525.5 481.33L525 481.32L524.5 481.63L524 481.33L523.5 482.45L523 482.13L522.5 482.78L522 481.31L521.5 482.59L521 481.32L520.5 481.73L520 481.34L519.5 483.19L519 481.35L518.5 481.38L518 481.32L517.5 485.25L517 482.06L516.5 482.72L516 487.93L515.5 487.94L515 459.23L514.5 388.23L514 378.55L513.5 378.5L513 379.34L512.5 378.5L512 380.34L511.5 378.81L511 379.27L510.5 378.62L510 378.52L509.5 379.47L509 379.48L508.5 378.72L508 380.33L507.5 378.86L507 378.5L506.5 380.12L506 378.52L505.5 378.83L505 378.78L504.5 378.8L504 380.87L503.5 379.74L503 380.59L502.5 377.67L502 438.84L501.5 439.93L501 441.22L500.5 442.81L500 444.23L499.5 448.06L499 447.79L498.5 449.9L498 450.66L497.5 451.81L497 452.73L496.5 453.58L496 454.02L495.5 454.75L495 456.03L494.5 455.99L494 455.92L493.5 456.11L493 455.55L492.5 454.87L492 454.14L491.5 453.73L491 453.69L490.5 451.9L490 450.87L489.5 449.16L489 447.6L488.5 446.62L488 444.34L487.5 442.72L487 441.26L486.5 440.31L486 438.91L485.5 438.96L485 439.17L484.5 440.59L484 442.55L483.5 443.74L483 445.43L482.5 447.13L482 448.86L481.5 451.12L481 452.22L480.5 454L480 454.19L479.5 454.74L479 455.3L478.5 456.3L478 457.46L477.5 457.31L477 456.88L476.5 456.93L476 455.91L475.5 455.38L475 454.73L474.5 454.82L474 453L473.5 451.79L473 450.47L472.5 448.7L472 448.11L471.5 445.49L471 443.34L470.5 441.75L470 440.39L469.5 438.8L469 438.14L468.5 438.25L468 439.52L467.5 441.78L467 442.95L466.5 444.77L466 446.61L465.5 448.73L465 450.35L464.5 451.98L464 453.48L463.5 455.81L463 456.78L462.5 455.99L462 456.86L461.5 457.91L461 459.39L460.5 458.09L460 458.09L459.5 457.28L459 456.78L458.5 456.93L458 456.71L457.5 454.32L457 453.18L456.5 451.58L456 449.8L455.5 448.23L455 446.2L454.5 444.06L454 442.1L453.5 440.91L453 438.6L452.5 437.23L452 437.37L451.5 439.18L451 440.1L450.5 441.96L450 444.08L449.5 447L449 448.95L448.5 450.8L448 452.35L447.5 454.32L447 455.11L446.5 456.26L446 457.3L445.5 458.18L445 458.45L444.5 459.34L444 459.05L443.5 459.33L443 458.71L442.5 457.9L442 457.29L441.5 456.89L441 455.78L440.5 454.55L440 453.29L439.5 451.88L439 450.35L438.5 446.97L438 445.41L437.5 442.64L437 441.07L436.5 438.74L436 437.93L435.5 436.08L435 438L434.5 440.71L434 440.92L433.5 443.28L433 445.3L432.5 448.48L432 450.29L431.5 451.95L431 454.24L430.5 455.53L430 457.7L429.5 458.3L429 458.85L428.5 459.29L428 461.14L427.5 460.41L427 460.28L426.5 460.36L426 459.85L425.5 458.66L425 458.8L424.5 457.31L424 456.14L423.5 454.99L423 452.64L422.5 451.12L422 448.24L421.5 447.27L421 443.44L420.5 441.21L420 438.97L419.5 438.09L419 436.19L418.5 437.2L418 437.63L417.5 440.42L417 441.91L416.5 445.1L416 446.89L415.5 449.37L415 452.42L414.5 454.34L414 456L413.5 458.39L413 459.86L412.5 459.53L412 460.58L411.5 461.29L411 461.42L410.5 461.77L410 461.63L409.5 461.27L409 460.39L408.5 459.77L408 459.13L407.5 457.73L407 456.2L406.5 454.2L406 452.16L405.5 449.59L405 446.93L404.5 444.76L404 441.76L403.5 439.59L403 437.38L402.5 435.81L402 434.5L401.5 436.4L401 438.2L400.5 441.18L400 443.49L399.5 446.16L399 449.62L398.5 451.99L398 453.91L397.5 456.96L397 458.06L396.5 459.72L396 462.09L395.5 461.37L395 462.26L394.5 464.16L394 463.03L393.5 463.01L393 462.64L392.5 461.99L392 461.39L391.5 460.69L391 459.4L390.5 457.66L390 456.11L389.5 453.14L389 450.54L388.5 447.7L388 444.84L387.5 442.49L387 439.34L386.5 436.84L386 434.93L385.5 433.33L385 434.9L384.5 436.58L384 438.98L383.5 442.26L383 444.71L382.5 447.74L382 450.8L381.5 453.71L381 456.95L380.5 458.83L380 460.47L379.5 461.77L379 462.87L378.5 463.36L378 463.85L377.5 465.03L377 464.6L376.5 464.52L376 463.99L375.5 462.9L375 462.72L374.5 461.24L374 459.77L373.5 458.01L373 455.39L372.5 452.14L372 451.17L371.5 446.02L371 442.82L370.5 439.99L370 436.94L369.5 434.6L369 432.23L368.5 432.35L368 434.6L367.5 437.11L367 440.05L366.5 443.47L366 447.13L365.5 451.03L365 452.61L364.5 455.58L364 458.46L363.5 460.74L363 463.23L362.5 463.85L362 464.77L361.5 465.28L361 466.1L360.5 466.65L360 466.16L359.5 465.68L359 464.7L358.5 464.15L358 463.35L357.5 462.08L357 459.2L356.5 456.45L356 453.43L355.5 450.25L355 447.13L354.5 443.11L354 439.79L353.5 437.08L353 433.62L352.5 431.26L352 430.03L351.5 432.42L351 434.88L350.5 437.43L350 440.91L349.5 444.48L349 448.04L348.5 451.89L348 455.15L347.5 458.73L347 461.43L346.5 463.9L346 465.26L345.5 466.24L345 467.11L344.5 467.67L344 468.51L343.5 468.25L343 467.53L342.5 466.69L342 466.65L341.5 465.31L341 463.68L340.5 461.78L340 459.14L339.5 457.61L339 452.26L338.5 449.53L338 444.68L337.5 440.85L337 436.76L336.5 433.87L336 430.58L335.5 428.43L335 429.41L334.5 432.38L334 438.08L333.5 439.06L333 442.46L332.5 446.54L332 450.58L331.5 454.6L331 458.64L330.5 461.96L330 464.19L329.5 466.89L329 469.46L328.5 468.63L328 470.01L327.5 469.94L327 470.11L326.5 470.36L326 468.97L325.5 468.45L325 467.62L324.5 465.81L324 464.1L323.5 460.52L323 457.06L322.5 453.76L322 449.1L321.5 445.05L321 441.21L320.5 436.42L320 432.71L319.5 429.75L319 427.45L318.5 427L318 428.75L317.5 431.55L317 435.26L316.5 439.93L316 443.95L315.5 448.37L315 452.65L314.5 457.45L314 460.77L313.5 464.16L313 467.2L312.5 469.28L312 470.5L311.5 470.77L311 472.7L310.5 472.2L310 472.1L309.5 472.03L309 471.66L308.5 470.17L308 468.62L307.5 466.26L307 463.27L306.5 459.62L306 458.32L305.5 451.6L305 446.33L304.5 441.85L304 437.06L303.5 432.73L303 430.31L302.5 425.61L302 423.28L301.5 425.06L301 429.37L300.5 432.11L300 436.75L299.5 441.25L299 446.44L298.5 451.16L298 457.58L297.5 461.4L297 464.98L296.5 467.87L296 470.4L295.5 472.37L295 473.58L294.5 473.94L294 474.4L293.5 474.6L293 474.09L292.5 473.22L292 472.78L291.5 472.01L291 469.95L290.5 466.88L290 462.54L289.5 458.12L289 454.07L288.5 448.68L288 443.12L287.5 436.7L287 432.13L286.5 427.62L286 423.74L285.5 420.63L285 423.21L284.5 424.62L284 428.8L283.5 433.26L283 438.24L282.5 443L282 448.13L281.5 454.55L281 459.09L280.5 463.52L280 467.99L279.5 471.2L279 473.64L278.5 475.79L278 476.27L277.5 476.63L277 477.22L276.5 476.94L276 476.04L275.5 475.44L275 475.08L274.5 472.67L274 468.96L273.5 465.14L273 460.33L272.5 454.92L272 450.17L271.5 443.58L271 437.5L270.5 432.95L270 427.1L269.5 422.44L269 418.97L268.5 416.79L268 419.52L267.5 423.8L267 428.6L266.5 434.11L266 439.29L265.5 445.32L265 451.49L264.5 457.97L264 463.03L263.5 468.33L263 472.15L262.5 475.21L262 477.54L261.5 479.2L261 479.75L260.5 480.21L260 480.13L259.5 479.19L259 479.05L258.5 477.57L258 476.75L257.5 472.42L257 468.94L256.5 463.24L256 457.67L255.5 451.33L255 446.14L254.5 438.41L254 431.88L253.5 426.61L253 420.58L252.5 416.62L252 412.26L251.5 412.72L251 416.32L250.5 421.11L250 427.76L249.5 433.01L249 439.79L248.5 446.71L248 453.67L247.5 460.87L247 466.53L246.5 471.93L246 475.8L245.5 480.06L245 481.22L244.5 481.64L244 482.55L243.5 483.97L243 482.7L242.5 482.01L242 481.31L241.5 481.6L241 482.15L240.5 481.49L240 481.59L239.5 481.62L239 483.04L238.5 482.18L238 481.84L237.5 481.34L237 481.88L236.5 481.58L236 482.12L235.5 481.71L235 481.62L234.5 481.37L234 481.31L233.5 481.5L233 481.31L232.5 481.92L232 481.45L231.5 481.31L231 481.4L230.5 481.63L230 484.55L229.5 481.31L229 481.37L228.5 481.75L228 482.25L227.5 481.75L227 481.31L226.5 481.41L226 481.45L225.5 481.35L225 481.56L224.5 481.98L224 483.06L223.5 483.19L223 482.02L222.5 481.64L222 481.44L221.5 481.63L221 482.25L220.5 482.61L220 481.33L219.5 482.91L219 483.15L218.5 481.51L218 482.49L217.5 482.67L217 481.36L216.5 483.11L216 481.39L215.5 482.43L215 482.38L214.5 482.41L214 485.3L213.5 488.03L213 487.71L212.5 430.76L212 378.52L211.5 378.81L211 379.64L210.5 379.3L210 379.49L209.5 379.45L209 379.84L208.5 378.63L208 378.64L207.5 379.26L207 379.79L206.5 378.66L206 378.56L205.5 379.75L205 378.77L204.5 378.94L204 380.44L203.5 378.53L203 380.16L202.5 378.95L202 378.62L201.5 378.55L201 379.28L200.5 378.04L200 438.29L199.5 439.25L199 440.42L198.5 441.8L198 443.63L197.5 445.02L197 446.93L196.5 448.52L196 449.85L195.5 453.44L195 453.01L194.5 453.05L194 453.83L193.5 454.95L193 455.28L192.5 455.84L192 455.9L191.5 455.89L191 456.05L190.5 455.18L190 454.6L189.5 455.06L189 453.29L188.5 454.22L188 452.98L187.5 450.88L187 448.73L186.5 447.36L186 445.37L185.5 443.69L185 442.2L184.5 440.55L184 440.45L183.5 438.23L183 438.45L182.5 439.63L182 441.12L181.5 442.9L181 445.71L180.5 446.07L180 447.78L179.5 449.85L179 451.51L178.5 452.84L178 453.54L177.5 454.65L177 455.05L176.5 455.6L176 457.4L175.5 458.22L175 457.33L174.5 456.77L174 456.44L173.5 455.78L173 455.79L172.5 454.6L172 453.84L171.5 452.59L171 451.19L170.5 449.82L170 447.92L169.5 446.38L169 445.56L168.5 442.53L168 440.87L167.5 439.59L167 438.12L166.5 438.2L166 438.77L165.5 440.35L165 441.85L164.5 444.11L164 445.6L163.5 447.38L163 449.86L162.5 451.17L162 452.8L161.5 454.05L161 455.68L160.5 455.8L160 457.03L159.5 457.08L159 457.96L158.5 458.22L158 457.93L157.5 457.95L157 456.98L156.5 456.12L156 456.58L155.5 454.98L155 454L154.5 453.26L154 451.09L153.5 449.74L153 447.88L152.5 447.03L152 443.16L151.5 441.55L151 439.57L150.5 438.15L150 437.26L149.5 437.63L149 439.78L148.5 441.86L148 442.72L147.5 445.9L147 446.88L146.5 449.27L146 451.76L145.5 453.01L145 454.62L144.5 456.05L144 456.57L143.5 457.19L143 457.9L142.5 458.71L142 459.14L141.5 459.05L141 459.09L140.5 458.44L140 457.47L139.5 457.15L139 456.38L138.5 455.28L138 455.05L137.5 453.96L137 450.33L136.5 448.37L136 446.24L135.5 443.92L135 441.83L134.5 439.85L134 438.67L133.5 436.56L133 437.05L132.5 438.5L132 439.93L131.5 441.71L131 443.93L130.5 446.28L130 448.56L129.5 450.66L129 452.75L128.5 454.61L128 456.19L127.5 457.38L127 458.23L126.5 459.4L126 459.68L125.5 460.08L125 460.47L124.5 460.25L124 459.71L123.5 459.35L123 458.69L122.5 458.78L122 457.49L121.5 455.94L121 454.18L120.5 451.74L120 449.68L119.5 447.53L119 444.87L118.5 442.6L118 441.15L117.5 439.23L117 437.04L116.5 437.04L116 437.17L115.5 438.42L115 440.74L114.5 443.31L114 445.9L113.5 449.42L113 450.8L112.5 452.94L112 454.79L111.5 456.67L111 458.15L110.5 459.58L110 460.72L109.5 461.23L109 462.4L108.5 461.55L108 462.89L107.5 461.49L107 460.81L106.5 460.76L106 459.88L105.5 460.08L105 457.78L104.5 455.59L104 454.12L103.5 451.28L103 448.47L102.5 445.88L102 443.27L101.5 440.82L101 438.74L100.5 436.69L100 434.57L99.5 436.65L99 436.94L98.5 439.3L98 441.63L97.5 444.39L97 447.1L96.5 450.04L96 452.44L95.5 455.2L95 456.95L94.5 458.97L94 461.05L93.5 461.33L93 461.5L92.5 462.63L92 462.88L91.5 464.46L91 463.29L90.5 462.3L90 461.52L89.5 460.93L89 460.15L88.5 459.43L88 457.25L87.5 455.2L87 452.42L86.5 450.51L86 447.03L85.5 443.85L85 441.2L84.5 438.77L84 435.82L83.5 433.9L83 433.58L82.5 435.94L82 437.5L81.5 440.23L81 442.9L80.5 446.65L80 449.07L79.5 451.92L79 455.43L78.5 457.36L78 459.37L77.5 461.28L77 462.36L76.5 462.84L76 463.43L75.5 464.45L75 464.57L74.5 464.62L74 464.18L73.5 463.24L73 462.75L72.5 462.33L72 460.66L71.5 459.19L71 456.5L70.5 454.9L70 451.08L69.5 447.95L69 444.63L68.5 441.65L68 439.3L67.5 435.85L67 433.64L66.5 431.57L66 433.33L65.5 435.73L65 438.52L64.5 441.51L64 445.61L63.5 448.59L63 451.24L62.5 453.74L62 457.34L61.5 459.55L61 461.61L60.5 463.22L60 464.2L59.5 464.65L59 465.5L58.5 466.1L58 466.31L57.5 466.56L57 465.6L56.5 464.6L56 465.84L55.5 462.64L55 460.6L54.5 458.69L54 457.14L53.5 452.5L53 448.7L52.5 445.72L52 442.62L51.5 439.26L51 435.31L50.5 432.71L50 430.64L49.5 430.55L49 433.94L48.5 436.79L48 438.81L47.5 442.85L47 446.92L46.5 449.7L46 453.49L45.5 456.83L45 460.85L44.5 462.11L44 464.92L43.5 465.9L43 466.37L42.5 467.07L42 467.83L41.5 468.12L41 468.39L40.5 467.35L40 468.05L39.5 465.94L39 464.73L38.5 463.35L38 460.41L37.5 457.47L37 454.05L36.5 450.39L36 448.14L35.5 442.67L35 438.94L34.5 435.52L34 433.21L33.5 429.75L33 428.15L32.5 430.65L32 433.63L31.5 436.67L31 440.41L30.5 444.48L30 448.27L29.5 452.76L29 455.99L28.5 459.57L28 462.58L27.5 465.09L27 467.54L26.5 468.38L26 468.61L25.5 469.65L25 469.97L24.5 470.15L24 470.17L23.5 469.03L23 468.32L22.5 467.37L22 465.01L21.5 462.61L21 459.2L20.5 455.55L20 451.9L19.5 447.68L19 443.38L18.5 439.53L18 434.95L17.5 431.89L17 428.27Z" fill="#08f0ea"/>
<path d="M17 598.77L17.5 599.4L18 598.59L18.5 598.26L19 598.72L19.5 598.04L20 599.17L20.5 597.85L21 597.4L21.5 596.1L22 599.19L22.5 598.77L23 599.22L23.5 599.39L24 598.06L24.5 598.13L25 599.09L25.5 597.87L26 595.89L26.5 598.28L27 599.32L27.5 598.06L28 598.97L28.5 598.52L29 599.29L29.5 598.25L30 599.36L30.5 597.54L31 599.34L31.5 597.64L32 597.15L32.5 599.07L33 598.67L33.5 595.46L34 598.95L34.5 598.75L35 593.46L35.5 599.35L36 598.87L36.5 599.4L37 599.4L37.5 598.29L38 599.11L38.5 599.12L39 599.39L39.5 599.39L40 598.07L40.5 599.38L41 599.11L41.5 598.95L42 599.37L42.5 599.33L43 599L43.5 599.36L44 599.21L44.5 596.53L45 598.85L45.5 598.17L46 599.34L46.5 597.72L47 599.28L47.5 598.52L48 598.71L48.5 599.27L49 599.04L49.5 597.59L50 598.76L50.5 590.45L51 597.98L51.5 599.4L52 599.09L52.5 597.38L53 599.28L53.5 596.65L54 599.34L54.5 598.7L55 599.36L55.5 599.4L56 599.37L56.5 598.93L57 599.33L57.5 598.13L58 598.32L58.5 595.58L59 598.56L59.5 598.13L60 594.82L60.5 599.11L61 599.09L61.5 598.52L62 599.09L62.5 599.38L63 599.39L63.5 597.64L64 598.6L64.5 599.32L65 596.26L65.5 599.07L66 597.97L66.5 595.94L67 597.37L67.5 596.52L68 598.5L68.5 596.63L69 599.3L69.5 599.29L70 598.26L70.5 597.55L71 593.92L71.5 599.21L72 599.2L72.5 595.25L73 599.36L73.5 596.62L74 596.13L74.5 598.93L75 598.95L75.5 598.85L76 599.22L76.5 597.93L77 599.08L77.5 596.58L78 599.2L78.5 598.84L79 595.3L79.5 595.78L80 595.78L80.5 599.01L81 599.38L81.5 599.38L82 597.3L82.5 596.72L83 598.76L83.5 594.43L84 598.79L84.5 598.64L85 597.44L85.5 598.95L86 598.86L86.5 598.66L87 597.71L87.5 596.38L88 598.01L88.5 598.87L89 597.37L89.5 599.02L90 599.4L90.5 599.04L91 599.37L91.5 598.78L92 599.4L92.5 598.84L93 599.4L93.5 599.26L94 598.96L94.5 598.56L95 599.35L95.5 599.23L96 599.33L96.5 599.3L97 599.33L97.5 598.98L98 598.41L98.5 596.54L99 599.33L99.5 599.38L100 597.89L100.5 599.09L101 599.29L101.5 598.97L102 596.11L102.5 597.07L103 599.38L103.5 596.04L104 599.12L104.5 595.01L105 597.61L105.5 599.34L106 597.77L106.5 598.83L107 598.43L107.5 599.19L108 597.58L108.5 599.19L109 599.36L109.5 598.4L110 597.71L110.5 599.14L111 598.38L111.5 599.29L112 598.8L112.5 598.92L113 595.68L113.5 599.29L114 598.66L114.5 599.21L115 596.85L115.5 597.43L116 598.6L116.5 599.33L117 598.92L117.5 598.8L118 596.36L118.5 598.51L119 599.37L119.5 598.62L120 598.48L120.5 598.68L121 598.53L121.5 598.47L122 598.32L122.5 594.05L123 597.39L123.5 598.84L124 597.85L124.5 599.24L125 598.45L125.5 599.39L126 599.4L126.5 598.63L127 598.43L127.5 599.27L128 599.36L128.5 599.17L129 599.31L129.5 597.01L130 597.44L130.5 597.62L131 599.05L131.5 599.37L132 599.39L132.5 599.15L133 597.26L133.5 599.39L134 598.53L134.5 598.98L135 599.26L135.5 597.96L136 599.1L136.5 598.26L137 599.24L137.5 599.21L138 599.27L138.5 597.72L139 598.53L139.5 599.31L140 598.41L140.5 597.55L141 598.67L141.5 598.49L142 599.39L142.5 598.17L143 598.17L143.5 599.1L144 596.72L144.5 598.26L145 597.06L145.5 595.11L146 597.55L146.5 597.15L147 594.84L147.5 599L148 599.32L148.5 599.31L149 598.61L149.5 598.57L150 599.39L150.5 598.84L151 598.93L151.5 596.33L152 597.31L152.5 598.5L153 599.27L153.5 598.28L154 599.04L154.5 598.51L155 599.24L155.5 599.28L156 599.37L156.5 598.49L157 598.77L157.5 598.88L158 597.74L158.5 598.82L159 599.37L159.5 597.23L160 599.36L160.5 598.98L161 595.25L161.5 599.36L162 597.68L162.5 599.16L163 598.93L163.5 597.66L164 599.27L164.5 598.9L165 597.64L165.5 599.28L166 599.24L166.5 599.4L167 598.45L167.5 594.06L168 599.36L168.5 596.28L169 595.83L169.5 599.32L170 598.77L170.5 593.63L171 599.23L171.5 599.39L172 598.14L172.5 598.55L173 599.27L173.5 596.2L174 599.13L174.5 599.3L175 599.06L175.5 598.65L176 599.4L176.5 599.3L177 598.76L177.5 599.02L178 599.15L178.5 598.61L179 597.4L179.5 598.9L180 599.2L180.5 598.98L181 599.38L181.5 594.12L182 599.38L182.5 598.59L183 599.27L183.5 598.9L184 599.32L184.5 599.29L185 597.22L185.5 597.42L186 599.02L186.5 597.95L187 599.12L187.5 598.47L188 599.34L188.5 599.14L189 599.38L189.5 595.33L190 599.4L190.5 599.14L191 599.24L191.5 598.43L192 596.4L192.5 598.96L193 597.71L193.5 599.15L194 595.86L194.5 599.11L195 598.63L195.5 598.37L196 598.33L196.5 598.47L197 599.21L197.5 597.42L198 599.16L198.5 599.22L199 599.4L199.5 598.62L200 598.85L200.5 596.48L201 599.4L201.5 598.3L202 599.11L202.5 599.33L203 597.43L203.5 597.74L204 596.97L204.5 599.16L205 598.41L205.5 594.48L206 598.86L206.5 598.47L207 598.57L207.5 598.64L208 597.9L208.5 598.87L209 597.9L209.5 598.44L210 596.12L210.5 599.24L211 598.67L211.5 599.39L212 599.14L212.5 599.16L213 599.09L213.5 598.95L214 593.14L214.5 556.99L215 552.84L215.5 549.64L216 546.28L216.5 544.92L217 544.2L217.5 543.27L218 541.01L218.5 539.14L219 543.25L219.5 543.35L220 541.75L220.5 542.44L221 542.67L221.5 543.12L222 539.48L222.5 542.02L223 543.15L223.5 541.85L224 540.21L224.5 542.03L225 542.83L225.5 540.32L226 543.3L226.5 542.91L227 542.8L227.5 541.38L228 542.87L228.5 543.24L229 542.06L229.5 542.66L230 542.85L230.5 543.3L231 542.47L231.5 543.3L232 541.82L232.5 542.88L233 538.44L233.5 543.21L234 543.24L234.5 542.78L235 541.92L235.5 543.3L236 542.93L236.5 543.21L237 543.3L237.5 543.25L238 542.87L238.5 542.78L239 540.65L239.5 543.27L240 543.28L240.5 541.01L241 543.3L241.5 546.31L242 598.15L242.5 594.19L243 599.35L243.5 597.66L244 599.37L244.5 598.83L245 598.41L245.5 598.53L246 599.19L246.5 599.32L247 597.79L247.5 593.66L248 599.1L248.5 597.74L249 599.29L249.5 599.22L250 599.34L250.5 599.35L251 598.59L251.5 598.47L252 598.56L252.5 599.4L253 597.46L253.5 599.35L254 599.27L254.5 599.4L255 597.55L255.5 599.38L256 595.52L256.5 596.02L257 598.23L257.5 599.27L258 598.89L258.5 596.9L259 596.79L259.5 599.3L260 597.9L260.5 598.53L261 597.87L261.5 595.96L262 598.64L262.5 599.22L263 596.49L263.5 599.09L264 599.28L264.5 598.15L265 597.61L265.5 598.59L266 599.2L266.5 599.16L267 596.3L267.5 599.13L268 599L268.5 598.99L269 598.52L269.5 599.24L270 598.65L270.5 599.24L271 597.99L271.5 599.31L272 599.26L272.5 599.37L273 596.77L273.5 595.49L274 599.14L274.5 598.42L275 599.19L275.5 598.5L276 597.17L276.5 597.68L277 593.23L277.5 597.62L278 597.35L278.5 598.93L279 599.31L279.5 597.59L280 599.22L280.5 599.33L281 596.28L281.5 596.39L282 599.4L282.5 597.58L283 594.08L283.5 598.97L284 595.35L284.5 599.08L285 598.8L285.5 599.39L286 599.14L286.5 598.25L287 598.93L287.5 598.6L288 597.67L288.5 599.4L289 598.44L289.5 597.56L290 598.88L290.5 598.2L291 598.86L291.5 599.39L292 597.3L292.5 597.34L293 597.11L293.5 597.82L294 593.13L294.5 598.99L295 597.12L295.5 598.58L296 598.84L296.5 598.64L297 599.37L297.5 598.98L298 596.26L298.5 599.2L299 597.91L299.5 599.38L300 598.57L300.5 599.38L301 598.92L301.5 599.39L302 599.27L302.5 598.55L303 597.55L303.5 598.84L304 599.33L304.5 598.82L305 597.77L305.5 597.29L306 599L306.5 599.1L307 599.37L307.5 598.68L308 597L308.5 599.05L309 597.5L309.5 599.06L310 599.25L310.5 598.78L311 598.29L311.5 599.29L312 599.37L312.5 598.71L313 599.14L313.5 599.03L314 599.33L314.5 598.83L315 598.87L315.5 599.32L316 599.39L316.5 598.43L317 597.14L317.5 599.39L318 593.45L318.5 597.87L319 598.75L319.5 598.72L320 598.93L320.5 599.31L321 598.23L321.5 599.38L322 598.67L322.5 597.72L323 599.39L323.5 598.17L324 597.43L324.5 596.43L325 598.89L325.5 599.35L326 599.4L326.5 598.73L327 599.2L327.5 599.04L328 598.93L328.5 597.25L329 598.88L329.5 598.03L330 597.18L330.5 597.05L331 598.17L331.5 592.3L332 599.37L332.5 594.31L333 598.87L333.5 597.82L334 598.98L334.5 599.31L335 599.12L335.5 598.94L336 599.29L336.5 599.31L337 598.47L337.5 599.06L338 598.74L338.5 598.77L339 597.66L339.5 599.05L340 599.25L340.5 596.13L341 598.09L341.5 599.3L342 599.4L342.5 599.39L343 598.75L343.5 599.4L344 599.4L344.5 598.54L345 599.37L345.5 596.72L346 599.29L346.5 598.91L347 596.59L347.5 597.47L348 599.21L348.5 597.35L349 599.31L349.5 599.14L350 596.16L350.5 597L351 599.17L351.5 599.09L352 598.58L352.5 599.01L353 596.35L353.5 598.01L354 597.94L354.5 596.81L355 599.33L355.5 597.76L356 599.37L356.5 597.96L357 599.15L357.5 599.17L358 599.13L358.5 599.4L359 599.01L359.5 598.68L360 598.76L360.5 597.95L361 599.3L361.5 598.64L362 599.08L362.5 598.73L363 597.92L363.5 597.1L364 598.43L364.5 599.29L365 599.28L365.5 599.39L366 599.33L366.5 594.87L367 599.1L367.5 599.39L368 598.72L368.5 599.39L369 598.79L369.5 599.4L370 599.21L370.5 599.05L371 595.8L371.5 599.13L372 599.28L372.5 599.27L373 599.35L373.5 597.91L374 599.24L374.5 599.3L375 598.86L375.5 599.33L376 596.19L376.5 597.27L377 599.26L377.5 596.19L378 599.12L378.5 598.83L379 599.36L379.5 599.18L380 599.31L380.5 598.14L381 599.37L381.5 597.26L382 597.56L382.5 599.31L383 599.28L383.5 599.38L384 599.12L384.5 598.14L385 595.12L385.5 598.57L386 598.32L386.5 597.62L387 599.08L387.5 598.64L388 599.05L388.5 599.38L389 598.71L389.5 597.89L390 599.39L390.5 599.11L391 599.31L391.5 596.88L392 599.37L392.5 594.91L393 597.94L393.5 598.43L394 598.05L394.5 597.18L395 598.89L395.5 598.84L396 598.79L396.5 595.96L397 598.22L397.5 595.42L398 598.56L398.5 599.34L399 599.27L399.5 599.33L400 598.61L400.5 599.4L401 598.34L401.5 599.2L402 594.56L402.5 597.2L403 598.88L403.5 599.13L404 598.71L404.5 596.67L405 597.86L405.5 595.37L406 598.85L406.5 598.55L407 598.74L407.5 598.47L408 598.86L408.5 598.87L409 599.18L409.5 598.5L410 598.26L410.5 597.94L411 599.3L411.5 597.43L412 599.27L412.5 596.16L413 599.36L413.5 597.78L414 598.91L414.5 599.06L415 598.97L415.5 597.85L416 598.03L416.5 597.86L417 599.18L417.5 596.25L418 598.49L418.5 597.18L419 599.31L419.5 599L420 599.39L420.5 599.36L421 599.32L421.5 598.82L422 593.55L422.5 598.37L423 597.84L423.5 598.92L424 598.93L424.5 598.7L425 597.53L425.5 597.62L426 598.47L426.5 597.73L427 598.79L427.5 598.56L428 597.64L428.5 598.54L429 598.61L429.5 599.1L430 599.4L430.5 598.91L431 598.76L431.5 599.37L432 598.91L432.5 595.79L433 599.37L433.5 598.79L434 598.94L434.5 595.81L435 599.4L435.5 599.25L436 599.34L436.5 595.85L437 597.74L437.5 596.25L438 598.61L438.5 597.14L439 599L439.5 596.04L440 598.33L440.5 598.71L441 599.38L441.5 598.2L442 596.97L442.5 599L443 598.88L443.5 599.35L444 598.37L444.5 599.31L445 595.5L445.5 599.4L446 599.39L446.5 596.69L447 599.3L447.5 597L448 598.83L448.5 598.89L449 598.92L449.5 599.38L450 599.04L450.5 598.38L451 599.25L451.5 595.68L452 599.37L452.5 598.79L453 596.07L453.5 596.07L454 599.38L454.5 597.81L455 596.03L455.5 597.41L456 598.59L456.5 598.15L457 597.22L457.5 598.59L458 594.39L458.5 597.53L459 598.78L459.5 599.21L460 599.05L460.5 595.34L461 598.45L461.5 599.38L462 598.69L462.5 598.85L463 598.96L463.5 598.15L464 599.34L464.5 597.93L465 599.02L465.5 597.27L466 598.94L466.5 598.94L467 599.39L467.5 599.05L468 599.37L468.5 597.51L469 599.26L469.5 597.5L470 597.41L470.5 598.2L471 599.35L471.5 599.31L472 597.92L472.5 598.83L473 596.83L473.5 598.43L474 598.49L474.5 597.16L475 599.13L475.5 598.55L476 599.23L476.5 598.43L477 599.03L477.5 599.4L478 598.67L478.5 598.87L479 598.94L479.5 598.33L480 596.3L480.5 599.3L481 595.61L481.5 598.06L482 599.4L482.5 598.24L483 598.4L483.5 598.75L484 598.28L484.5 597.34L485 599.29L485.5 597.87L486 597.58L486.5 597.39L487 597.82L487.5 599.38L488 597.75L488.5 599.35L489 598.83L489.5 599.33L490 599.19L490.5 599.08L491 599.31L491.5 599.27L492 598.07L492.5 599.23L493 599.16L493.5 599.11L494 599.4L494.5 596.81L495 599.32L495.5 598.65L496 599.39L496.5 599.37L497 599.28L497.5 597.91L498 597.8L498.5 599.28L499 599.4L499.5 593.98L500 599.14L500.5 598.95L501 597.08L501.5 593.54L502 598.46L502.5 599.28L503 598.33L503.5 598.37L504 597.88L504.5 599.34L505 599.02L505.5 599.39L506 598.02L506.5 598.24L507 595.15L507.5 599.22L508 599.05L508.5 598.48L509 599.33L509.5 599.21L510 598.8L510.5 598.49L511 596.54L511.5 598.9L512 597.86L512.5 598.36L513 598.76L513.5 596.92L514 598.4L514.5 598.57L515 599.04L515.5 598.31L516 593.02L516.5 577.58L517 555.14L517.5 549.93L518 548.03L518.5 544.11L519 537.85L519.5 543.63L520 542.58L520.5 542.17L521 539.59L521.5 543.33L522 541.88L522.5 543.27L523 543.31L523.5 541.62L524 540.16L524.5 537.38L525 543.3L525.5 539.39L526 543.26L526.5 542.7L527 542.59L527.5 542.28L528 543.05L528.5 542.49L529 542.87L529.5 542.47L530 538.28L530.5 543.09L531 543.03L531.5 542.71L532 541.65L532.5 540.86L533 542.24L533.5 542.72L534 541.89L534.5 542.81L535 543.2L535.5 542.86L536 542.12L536.5 538.84L537 543.28L537.5 541.79L538 543.17L538.5 543.29L539 539.41L539.5 540.52L540 543.14L540.5 543.2L541 540.07L541.5 543.25L542 543.09L542.5 542.44L543 543.18L543.5 543.8L544 568.69L544.5 596.47L545 599.13L545.5 592.33L546 596.8L546.5 599.13L547 597.05L547.5 598.76L548 599.37L548.5 598.52L549 594.29L549.5 599.13L550 599.35L550.5 597.55L551 598.16L551.5 598.76L552 599.39L552.5 598.47L553 598.95L553.5 595.99L554 599.34L554.5 599.2L555 595.56L555.5 599.12L556 599.29L556.5 599.23L557 596.3L557.5 597.18L558 599.39L558.5 598.65L559 599.2L559.5 598.2L560 595.59L560.5 594.25L561 598.66L561.5 598.21L562 598.97L562.5 597.27L563 596.25L563.5 592.78L564 598.56L564.5 599L565 598.18L565.5 599.06L566 597.98L566.5 598.99L567 598.55L567.5 594.02L568 599.31L568.5 598.94L569 597.98L569.5 598.95L570 599.1L570.5 594.84L571 599.4L571.5 599.19L572 597.28L572.5 597.18L573 598.78L573.5 595.84L574 593.53L574.5 596.78L575 597.3L575.5 598.78L576 595.85L576.5 597.38L577 596.26L577.5 596.98L578 596.59L578.5 598.92L579 598.88L579.5 599.24L580 596.37L580.5 599.3L581 597.42L581.5 598.42L582 596.54L582.5 598.13L583 597.63L583.5 599.17L584 598.09L584.5 599.27L585 599.2L585.5 599.18L586 598.52L586.5 598.95L587 599.33L587.5 598.57L588 594.96L588.5 598.71L589 599.31L589.5 599.4L590 599.22L590.5 599.25L591 598.97L591.5 599.17L592 599.33L592.5 598.92L593 599.34L593.5 599.38L594 598.84L594.5 599.34L595 598.7L595.5 598.18L596 598.82L596.5 598.8L597 599.27L597.5 599.09L598 599.25L598.5 598.75L599 593.28L599.5 599.1L600 597.09L600.5 596.55L601 598.61L601.5 592.49L602 597.36L602.5 599.35L603 598.26L603.5 595.06L604 599.23L604.5 598.16L605 593.75L605.5 598.45L606 598.2L606.5 599.32L607 596.85L607.5 599.17L608 599.35L608.5 598.75L609 599.2L609.5 598.47L610 598.86L610.5 598.77L611 598.03L611.5 599.12L612 597.89L612.5 594.59L613 595.62L613.5 596.98L614 599.09L614.5 594.81L615 597.88L615.5 598.11L616 597.76L616.5 599.27L617 598.52L617.5 596.6L618 599.23L618.5 599.07L619 595.7L619.5 596.81L620 597.62L620.5 599.31L621 599.4L621.5 598.75L622 598.21L622.5 593.35L623 599.36L623.5 597.92L624 599.07L624.5 599.35L625 597.85L625.5 599.19L626 597.91L626.5 597.5L627 597.68L627.5 597.92L628 596.41L628.5 598.33L629 599.14L629.5 597.46L630 598.64L630.5 599.09L631 599.01L631.5 598.52L632 598.46L632.5 598.6L633 599.05L633.5 598.42L634 597.04L634.5 599.18L635 597.75L635.5 598.81L636 599.05L636.5 597.36L637 597.11L637.5 599.18L638 598.67L638.5 599.33L639 599.29L639.5 599.22L640 599.4L640.5 599.36L641 599.29L641.5 599.04L642 599.17L642.5 598.69L643 599.37L643.5 597.57L644 598.75L644.5 597.7L645 599.19L645.5 599.37L646 595.24L646.5 597.58L647 598.76L647.5 599.36L648 596.61L648.5 598.72L649 598.1L649.5 599.27L650 597.44L650.5 599.4L651 598.45L651.5 599.37L652 599.33L652.5 598.98L653 597.76L653.5 599.04L654 598.67L654.5 598.83L655 597.27L655.5 599.33L656 598.4L656.5 592.89L657 599.38L657.5 597.67L658 599.37L658.5 599.03L659 597.37L659.5 598.25L660 599.4L660.5 595.43L661 598.36L661.5 599.28L662 597.98L662.5 596.69L663 598.31L663.5 598.82L664 598.48L664.5 599.37L665 599.39L665.5 598.85L666 599.08L666.5 599.37L667 598.87L667.5 598.24L668 597.37L668.5 598.11L669 597.33L669.5 597.33L670 599.12L670.5 597.09L671 598.14L671.5 599.36L672 598.63L672.5 599.32L673 599.13L673.5 596.67L674 599.4L674.5 598.48L675 596.77L675.5 599.31L676 595.63L676.5 599.13L677 598.33L677.5 597.57L678 596.28L678.5 599.33L679 598.59L679.5 598.06L680 598.2L680.5 598.52L681 596.57L681.5 598.49L682 598.98L682.5 599.13L683 597.12L683.5 598.61L684 599.11L684.5 597.94L685 597.15L685.5 598.1L686 598.4L686.5 599.33L687 599.16L687.5 599.24L688 599.39L688.5 599.22L689 599.4L689.5 598.16L690 598.59L690.5 598.92L691 596.87L691.5 597.21L692 599.38L692.5 599.26L693 598.47L693.5 599.32L694 598.8L694.5 597.37L695 598.71L695.5 599.38L696 598.45L696.5 599.38L697 599.02L697.5 597.4L698 598.88L698.5 599.05L699 598.48L699.5 599.2L700 596.94L700.5 599.37L701 598.99L701.5 597.81L702 599.37L702.5 594.51L703 599.16L703.5 599.25L704 599.39L704.5 599.07L705 599.38L705.5 599.31L706 599.33L706.5 599.21L707 599.21L707.5 599.02L708 599.31L708.5 598.76L709 595.21L709.5 598.27L710 593.38L710.5 597.98L711 599.4L711.5 599.33L712 597.77L712.5 593.96L713 598.46L713.5 599.14L714 598.2L714.5 598.94L715 599.39L715.5 599.07L716 598.91L716.5 590.02L717 598.87L717.5 598.97L718 599.25L718.5 597.73L719 599L719.5 598.83L720 598.9L720.5 599.16L721 598.91L721.5 599.17L722 599.27L722.5 599.37L723 599.22L723.5 597.52L724 598.97L724.5 598.02L725 599.4L725.5 599.39L726 599.25L726.5 599.26L727 595.21L727.5 597.95L728 596.95L728.5 599.08L729 596.76L729.5 599.39L730 596.04L730.5 599.4L731 599.37L731.5 599.3L732 597.92L732.5 599.36L733 598.95L733.5 599.31L734 594.31L734.5 598.27L735 599.39L735.5 598.54L736 599.08L736.5 598.33L737 597.54L737.5 598.74L738 599.23L738.5 599.1L739 599.27L739.5 599.34L740 595.05L740.5 597.94L741 599.32L741.5 594.18L742 598.34L742.5 598.11L743 597.88L743.5 598.25L744 599.29L744.5 598.02L745 598.55L745.5 595.72L746 598.69L746.5 598.17L747 597.91L747.5 598.9L748 599.05L748.5 599.4L749 599.36L749.5 596.9L750 599.4L750.5 597.34L751 598.96L751.5 595.99L752 599.38L752.5 598.35L753 597.56L753.5 598.86L754 599.4L754.5 599.39L755 597.39L755.5 598.88L756 599.31L756.5 597.93L757 599.31L757.5 599.12L758 592.48L758.5 598.84L759 599.39L759.5 598.31L760 597.68L760.5 598.53L761 597.27L761.5 599.12L762 599.15L762.5 599.22L763 598.94L763.5 599.38L764 598.69L764.5 599.26L765 596.96L765.5 598.7L766 595.91L766.5 598.83L767 599.39L767.5 597.63L768 597.16L768.5 598.52L769 598.03L769.5 597.62L770 598.91L770.5 597.79L771 598.97L771.5 599.02L772 597.53L772.5 599.08L773 597.69L773.5 598.39L774 598.86L774.5 597.08L775 597.99L775.5 599.14L776 599.16L776.5 598.87L777 598.54L777.5 599.11L778 599.39L778.5 599.12L779 599.3L779.5 596.36L780 599L780.5 599.38L781 598.44L781.5 599.37L782 599.39L782.5 597.15L783 597.65L783.5 597.02L784 599.18L784.5 598.68L785 597.42L785.5 599.37L786 599.12L786.5 598.96L787 599.37L787.5 598.51L788 599.1L788.5 598.64L789 597.69L789.5 598.56L790 599.11L790.5 599.17L791 598.99L791.5 598.82L792 598.01L792.5 597.04L793 593.96L793.5 599.04L794 598.69L794.5 595.45L795 597.21L795.5 599.3L796 598.24L796.5 599.39L797 599.22L797.5 599.18L798 598.14L798.5 597.71L799 597.18L799.5 596.61L800 599.24L800.5 599.13L801 598.27L801.5 594.68L802 597.44L802.5 599.28L803 598.92L803.5 598.34L804 597.86L804.5 599.04L805 599.35L805.5 599.39L806 599.02L806.5 598.88L807 599.23L807.5 598.68L808 599.23L808.5 596.4L809 597.89L809.5 599.18L810 596.47L810.5 597.98L811 599.27L811.5 599.05L812 598.5L812.5 598.48L813 599.39L813.5 598.74L814 598.97L814.5 598.97L815 598.21L815.5 597.7L816 597.29L816.5 598.92L817 598.18L817.5 599.18L818 598.09L818.5 597.27L819 558.08L819.5 553.66L820 549.62L820.5 545.35L821 545.44L821.5 544.47L822 544L822.5 543.5L823 542.51L823.5 543.38L824 541.57L824.5 543.34L825 542.29L825.5 541.1L826 542.58L826.5 543.29L827 537.31L827.5 543.3L828 542.92L828.5 543.11L829 543.29L829.5 542.95L830 541.8L830.5 543.05L831 542.39L831.5 543.21L832 543.11L832.5 539.66L833 542.47L833.5 542.63L834 542.06L834.5 543.18L835 543.24L835.5 542.32L836 541.84L836.5 542.34L837 539.53L837.5 542.52L838 540.18L838.5 542.2L839 542.75L839.5 543.26L840 543.13L840.5 542.98L841 542.25L841.5 541.52L842 543.06L842.5 543.3L843 543.08L843.5 542.4L844 542.91L844.5 540.97L845 542.76L845.5 541.57L846 545.37L846.5 593.07L847 595.66L847.5 599.26L848 599.14L848.5 598.8L849 599.39L849.5 598.27L850 598.71L850.5 599.02L851 598.87L851.5 598.07L852 599.28L852.5 598.56L853 598.97L853.5 599.39L854 598.21L854.5 598.36L855 591.82L855.5 598.95L856 596.92L856.5 598.05L857 599.32L857.5 597.38L858 596.78L858.5 599.31L859 599.4L859.5 598.72L860 595.17L860.5 598.99L861 598.88L861.5 598.71L862 599.33L862.5 599.4L863 599.16L863.5 599.35L864 597.9L864.5 599.34L865 598.91L865.5 598.84L866 598.88L866.5 598.14L867 599.05L867.5 599.31L868 597.62L868.5 598.77L869 599.14L869.5 596.79L870 599.18L870.5 599.31L871 597.16L871.5 596.48L872 599.27L872.5 596.7L873 594.79L873.5 599.4L874 599.09L874.5 599.38L875 599.08L875.5 595.54L876 598.49L876.5 598.32L877 593.96L877.5 598.91L878 597.54L878.5 597.13L879 599.27L879.5 599.33L880 599.09L880.5 598.82L881 599.25L881.5 598.59L882 598.55L882.5 599.32L883 598.82L883.5 598.33L884 598.88L884.5 599.09L885 599.31L885.5 598.56L886 598.27L886.5 599.37L887 597.87L887.5 597.69L888 597.59L888.5 599.06L889 598.02L889.5 598.95L890 598.85L890.5 598.6L891 599.17L891.5 598.63L892 595.98L892.5 598.96L893 598.79L893.5 590.73L894 599.28L894.5 598.74L895 598.37L895.5 598.38L896 598.65L896.5 598.39L897 599.22L897.5 599.28L898 598.79L898.5 599.33L899 599.34L899.5 599.2L900 599.36L900.5 599.19L901 597.72L901.5 599.08L902 599.35L902.5 599.32L903 596.18L903.5 596.48L904 599.18L904.5 599.25L905 599.05L905.5 599.38L906 599.34L906.5 598.62L907 597.3L907.5 599.23L908 594.4L908.5 597.06L909 598.16L909.5 596.99L910 597.82L910.5 595.51L911 597.56L911.5 599.35L912 595.48L912.5 598.67L913 599.38L913.5 598.99L914 599.12L914.5 599.27L915 599.39L915.5 596.25L916 599.36L916.5 599.38L917 599.06L917.5 599.38L918 599.05L918.5 599.39L919 599.02L919.5 597.02L920 599.05L920.5 596.67L921 598.52L921.5 598.58L922 599.34L922.5 596.04L923 595.14L923.5 596.74L924 599.37L924.5 598.49L925 598.06L925.5 598.37L926 599.03L926.5 596.76L927 598.95L927.5 597.21L928 598.03L928.5 597.71L929 598.45L929.5 595.47L930 597.79L930.5 597.67L931 596.42L931.5 599.24L932 598.88L932.5 598.64L933 598.81L933.5 596.7L934 595.98L934.5 597.75L935 597.86L935.5 596.25L936 598.75L936.5 599.35L937 597.78L937.5 598.25L938 599.01L938.5 597.47L939 599.17L939.5 598.02L940 595.21L940.5 597.37L941 599.02L941.5 595.45L942 598.15L942.5 598.28L943 597.44L943.5 599.39L944 597.96L944.5 598.55L945 599.27L945.5 596.97L946 597.71L946.5 598.57L947 598.73L947.5 599.35L948 599.05L948.5 596.94L949 599.4L949.5 597.02L950 599.29L950.5 596.64L951 598.16L951.5 599.35L952 599.36L952.5 595.46L953 598.69L953.5 597.85L954 598.38L954.5 597.78L955 598.22L955.5 597.57L956 598.74L956.5 599.33L957 599.4L957.5 598.23L958 598.45L958.5 598.41L959 599.4L959.5 598.08L960 599.33L960.5 599.17L961 595.78L961.5 598.81L962 599.06L962.5 599.05L963 597.55L963.5 598.7L964 598.95L964.5 599L965 598.67L965.5 597.93L966 597.79L966.5 595.2L967 597.11L967.5 599.26L968 597.51L968.5 595.99L969 599.26L969.5 599.37L970 598.98L970.5 598.97L971 597.38L971.5 596.99L972 599.11L972.5 598.84L973 599.31L973.5 598.79L974 597.65L974.5 599.31L975 596.93L975.5 598.23L976 598.95L976.5 598.41L977 599.37L977.5 598.29L978 599.28L978.5 598.08L979 598.99L979.5 596.39L980 594.66L980.5 598.07L981 592.13L981.5 599.13L982 598L982.5 599.15L983 598.76L983.5 597.05L984 599.16L984.5 596.1L985 598.62L985.5 598.42L986 598.23L986.5 598.69L987 599.14L987.5 596.77L988 596.44L988.5 598.57L989 599.39L989.5 597.98L990 594.89L990.5 599.29L991 599.4L991.5 599.4L992 599.12L992.5 598.58L993 599.39L993.5 599.38L994 595.49L994.5 598.9L995 597.79L995.5 598.67L996 598.67L996.5 599.2L997 599.21L997.5 596.02L998 594.81L998.5 596.89L999 599.4L999.5 599.31L1000 595.15L1000.5 598.12L1001 599.28L1001.5 597.75L1002 599.26L1002.5 589.45L1003 599.11L1003.5 599.4L1004 599.35L1004.5 598.18L1005 598.93L1005.5 595.45L1006 599.23L1006.5 598.3L1007 598.58L1007.5 598.07L1008 598.11L1008.5 596.36L1009 599.26L1009.5 595.95L1010 599.2L1010.5 599.05L1011 599.31L1011.5 599.28L1012 596.62L1012.5 598.16L1013 597.2L1013.5 599.33L1014 597.31L1014.5 598.7L1015 599.04L1015.5 599.4L1016 599.34L1016 610.75L1015.5 609.8L1015 610.08L1014.5 610.89L1014 609.75L1013.5 610.19L1013 611.6L1012.5 609.79L1012 609.61L1011.5 610.49L1011 612.97L1010.5 609.63L1010 609.85L1009.5 610.48L1009 609.63L1008.5 611.52L1008 610.62L1007.5 609.84L1007 609.62L1006.5 611.63L1006 609.75L1005.5 609.75L1005 609.95L1004.5 609.62L1004 609.66L1003.5 610.51L1003 612.44L1002.5 613.05L1002 611.11L1001.5 611.71L1001 609.62L1000.5 611.39L1000 611.04L999.5 609.94L999 612.15L998.5 612.89L998 609.71L997.5 609.62L997 609.82L996.5 609.7L996 611.19L995.5 610.98L995 610.36L994.5 613.32L994 609.63L993.5 615.98L993 611.02L992.5 609.6L992 613.81L991.5 609.73L991 609.78L990.5 609.66L990 610.21L989.5 609.61L989 609.73L988.5 609.73L988 612.74L987.5 609.71L987 610.02L986.5 609.75L986 612.09L985.5 610.35L985 610.27L984.5 609.61L984 610.77L983.5 610.5L983 609.96L982.5 610.05L982 610.35L981.5 610.01L981 610.22L980.5 611.45L980 610L979.5 610.69L979 611.81L978.5 611.7L978 611.04L977.5 609.61L977 611.95L976.5 611.78L976 610.41L975.5 610.91L975 617.35L974.5 610.08L974 609.94L973.5 611.02L973 611.04L972.5 611.22L972 610.07L971.5 611.23L971 610.07L970.5 610.92L970 609.61L969.5 611.54L969 610L968.5 611.8L968 611.9L967.5 609.77L967 609.78L966.5 612.58L966 610.03L965.5 609.64L965 609.77L964.5 611.02L964 609.6L963.5 611.15L963 610.85L962.5 610.47L962 609.6L961.5 609.88L961 609.71L960.5 612.07L960 613.51L959.5 609.84L959 610.27L958.5 610.07L958 610.5L957.5 610.49L957 609.82L956.5 610.41L956 610.1L955.5 609.83L955 609.94L954.5 613.58L954 610.06L953.5 612.48L953 613.39L952.5 610.08L952 609.75L951.5 609.85L951 609.94L950.5 612L950 611.65L949.5 610.56L949 609.73L948.5 611.4L948 610.9L947.5 610.3L947 610.47L946.5 611.45L946 610.46L945.5 610.82L945 612.98L944.5 609.69L944 611.82L943.5 609.9L943 609.97L942.5 610.87L942 610.88L941.5 610.46L941 610.02L940.5 609.89L940 609.76L939.5 613.02L939 611.28L938.5 609.69L938 611.69L937.5 610.07L937 612.43L936.5 609.89L936 611.02L935.5 610.2L935 610.71L934.5 609.92L934 613.34L933.5 610.87L933 610.11L932.5 610.26L932 611.95L931.5 609.99L931 610.16L930.5 611.53L930 611.14L929.5 610.14L929 610.09L928.5 612.23L928 611.56L927.5 610.16L927 609.89L926.5 612.24L926 609.65L925.5 610.71L925 609.62L924.5 609.99L924 609.69L923.5 612.84L923 609.87L922.5 610.84L922 610.45L921.5 610.61L921 610.12L920.5 610.37L920 609.62L919.5 610.49L919 611.31L918.5 609.73L918 611.02L917.5 611.49L917 610.34L916.5 609.62L916 610.73L915.5 609.96L915 612.83L914.5 609.88L914 609.74L913.5 609.74L913 609.94L912.5 609.64L912 609.77L911.5 612.75L911 609.7L910.5 610.93L910 609.62L909.5 612.77L909 611.47L908.5 609.63L908 609.71L907.5 611.15L907 610.38L906.5 609.63L906 610.08L905.5 609.8L905 609.78L904.5 610.31L904 609.62L903.5 610.55L903 609.82L902.5 610.54L902 609.66L901.5 609.66L901 610.08L900.5 609.87L900 609.73L899.5 610.9L899 612.36L898.5 611.03L898 612.66L897.5 613.31L897 609.82L896.5 610.46L896 610.52L895.5 610.31L895 615.8L894.5 609.63L894 609.61L893.5 611.72L893 613.24L892.5 609.9L892 612.9L891.5 609.75L891 610.27L890.5 609.62L890 611.48L889.5 610.11L889 609.65L888.5 612.18L888 609.62L887.5 609.66L887 609.62L886.5 612.62L886 610.31L885.5 611.79L885 610.91L884.5 609.63L884 609.7L883.5 610.26L883 610.06L882.5 609.65L882 611.4L881.5 611.52L881 611.79L880.5 611.13L880 610.1L879.5 609.67L879 609.62L878.5 611.75L878 613.89L877.5 610.91L877 609.65L876.5 616.08L876 610.26L875.5 612.55L875 611.4L874.5 611.65L874 609.64L873.5 610.95L873 609.65L872.5 612.34L872 610.45L871.5 609.89L871 611.18L870.5 609.7L870 611.66L869.5 610.48L869 613.59L868.5 610.55L868 610.03L867.5 609.61L867 609.89L866.5 609.93L866 612.23L865.5 610L865 619.61L864.5 609.91L864 609.94L863.5 609.6L863 610.11L862.5 609.96L862 610.46L861.5 609.94L861 609.86L860.5 611.78L860 612.96L859.5 610.04L859 610.8L858.5 609.6L858 610.29L857.5 609.65L857 610.03L856.5 609.62L856 610.83L855.5 609.84L855 611.59L854.5 615.49L854 610.73L853.5 609.94L853 609.89L852.5 609.81L852 614.18L851.5 609.63L851 609.73L850.5 610.29L850 614.18L849.5 610.47L849 609.82L848.5 610.21L848 609.91L847.5 609.63L847 611.95L846.5 609.68L846 607.53L845.5 584.28L845 555.95L844.5 553.51L844 555.47L843.5 555.3L843 553.71L842.5 554.13L842 553.57L841.5 553.52L841 557.3L840.5 554.02L840 554.79L839.5 555.62L839 555.04L838.5 556.22L838 558.71L837.5 553.54L837 553.68L836.5 554.91L836 553.91L835.5 553.53L835 553.99L834.5 554.24L834 554.03L833.5 553.59L833 553.87L832.5 553.79L832 553.77L831.5 553.71L831 554.36L830.5 554.03L830 554.38L829.5 555.57L829 555.37L828.5 553.57L828 553.56L827.5 554.77L827 559.56L826.5 554L826 554.31L825.5 553.78L825 557.2L824.5 553.71L824 553.81L823.5 553.68L823 553.76L822.5 553.96L822 554.26L821.5 554.89L821 555.72L820.5 557.8L820 559.89L819.5 606.28L819 609.6L818.5 612.56L818 609.84L817.5 610.26L817 610.19L816.5 610.96L816 609.74L815.5 610.74L815 610.5L814.5 610.61L814 609.64L813.5 611.89L813 615.31L812.5 609.74L812 609.64L811.5 609.69L811 610.48L810.5 611.22L810 614.59L809.5 611.54L809 609.75L808.5 610.04L808 609.62L807.5 610.76L807 610.2L806.5 609.71L806 609.91L805.5 610.04L805 610.33L804.5 612.04L804 609.73L803.5 609.65L803 609.63L802.5 609.67L802 611.09L801.5 614.06L801 610.26L800.5 611.57L800 609.79L799.5 611.34L799 611.83L798.5 611.62L798 610.62L797.5 610.75L797 612.18L796.5 611.77L796 610.34L795.5 610.65L795 610.04L794.5 609.75L794 609.6L793.5 610.07L793 612.48L792.5 610.01L792 609.89L791.5 610.5L791 611.79L790.5 613.16L790 614.95L789.5 611.47L789 609.73L788.5 609.6L788 610.26L787.5 610.96L787 609.63L786.5 611.6L786 611.16L785.5 610.85L785 609.63L784.5 611.42L784 609.68L783.5 611L783 611.31L782.5 611.26L782 610.18L781.5 609.7L781 609.66L780.5 610.26L780 610.55L779.5 611.54L779 611.03L778.5 609.76L778 609.69L777.5 611.35L777 609.64L776.5 610.22L776 613.82L775.5 611.94L775 611.08L774.5 611.65L774 610.8L773.5 610.24L773 610.82L772.5 609.71L772 613.46L771.5 610.49L771 613.01L770.5 613.44L770 610.42L769.5 613.49L769 610.61L768.5 610.2L768 611.74L767.5 609.9L767 609.77L766.5 612.33L766 609.91L765.5 609.75L765 611.63L764.5 610.33L764 609.73L763.5 610.34L763 611.7L762.5 614.69L762 609.73L761.5 609.69L761 609.96L760.5 611.33L760 611.36L759.5 610.9L759 611.29L758.5 610.2L758 613.38L757.5 609.85L757 611.62L756.5 617.42L756 610.32L755.5 611.62L755 611.98L754.5 609.93L754 609.96L753.5 610.59L753 609.71L752.5 609.87L752 611.86L751.5 609.69L751 610.03L750.5 615.17L750 610.2L749.5 610.03L749 609.99L748.5 609.6L748 609.78L747.5 612.31L747 610.82L746.5 614.5L746 609.87L745.5 611.66L745 609.99L744.5 609.61L744 609.66L743.5 609.79L743 610.38L742.5 610.12L742 610.02L741.5 609.92L741 609.85L740.5 610.09L740 609.64L739.5 609.63L739 611.49L738.5 609.63L738 611.14L737.5 609.81L737 610.02L736.5 609.67L736 611.07L735.5 609.74L735 610.04L734.5 609.6L734 610.67L733.5 609.97L733 610.13L732.5 613.1L732 609.65L731.5 609.6L731 612L730.5 610.3L730 609.72L729.5 610.13L729 609.89L728.5 610.43L728 610.26L727.5 609.61L727 609.66L726.5 609.6L726 610.2L725.5 610.17L725 609.64L724.5 609.66L724 610.28L723.5 610.02L723 609.88L722.5 610.3L722 611.71L721.5 611.36L721 610.19L720.5 609.99L720 610.28L719.5 609.76L719 609.67L718.5 609.68L718 609.7L717.5 609.78L717 612.85L716.5 610.96L716 610.42L715.5 610.3L715 609.6L714.5 609.81L714 610L713.5 609.62L713 611.01L712.5 610.48L712 610.02L711.5 609.61L711 609.94L710.5 617.61L710 609.75L709.5 609.76L709 610.82L708.5 609.84L708 610.43L707.5 611.05L707 611.01L706.5 612.73L706 609.89L705.5 611.68L705 612.08L704.5 612.22L704 610.04L703.5 609.63L703 609.75L702.5 609.7L702 609.79L701.5 614.37L701 609.61L700.5 610.32L700 611.55L699.5 610.07L699 609.9L698.5 611.79L698 609.65L697.5 609.61L697 609.72L696.5 609.63L696 610.14L695.5 610.39L695 611.81L694.5 609.81L694 611.14L693.5 610.41L693 609.63L692.5 610.78L692 610.74L691.5 610.02L691 611.52L690.5 609.62L690 609.77L689.5 610.55L689 609.78L688.5 609.78L688 610.89L687.5 609.9L687 610.02L686.5 611.48L686 614.66L685.5 609.65L685 611.27L684.5 609.73L684 611.67L683.5 616.29L683 609.61L682.5 610.72L682 611.32L681.5 610.13L681 609.78L680.5 609.74L680 609.66L679.5 610.01L679 611.12L678.5 609.86L678 614.55L677.5 611.94L677 609.8L676.5 609.67L676 610.18L675.5 611.25L675 610.06L674.5 611.08L674 610L673.5 612.02L673 613.36L672.5 611.54L672 610.11L671.5 610.61L671 610.39L670.5 611.59L670 610.1L669.5 609.83L669 609.64L668.5 610.89L668 610.82L667.5 609.74L667 609.75L666.5 610.38L666 612.71L665.5 610.21L665 610.08L664.5 610.59L664 610.58L663.5 612.11L663 610.08L662.5 609.82L662 609.73L661.5 609.99L661 609.73L660.5 613.8L660 609.78L659.5 609.63L659 612.9L658.5 611.53L658 609.97L657.5 610.68L657 609.77L656.5 610.46L656 611.01L655.5 611.17L655 609.61L654.5 614.27L654 610.53L653.5 610.66L653 609.71L652.5 610.75L652 610.15L651.5 609.88L651 611.31L650.5 609.67L650 610.19L649.5 610.26L649 610.5L648.5 609.6L648 610.71L647.5 609.66L647 610.09L646.5 609.96L646 611.4L645.5 609.65L645 609.85L644.5 609.6L644 611.17L643.5 610.07L643 610.87L642.5 609.7L642 609.61L641.5 610.92L641 610.69L640.5 611.53L640 610.17L639.5 610.85L639 609.69L638.5 611.06L638 609.64L637.5 609.79L637 609.74L636.5 610.61L636 609.68L635.5 611.87L635 612.51L634.5 609.69L634 610.78L633.5 609.66L633 609.7L632.5 610.43L632 609.78L631.5 609.61L631 610.58L630.5 613.68L630 609.74L629.5 613.18L629 611.17L628.5 609.67L628 613.88L627.5 610.76L627 611.09L626.5 610.73L626 609.6L625.5 609.66L625 609.73L624.5 610.41L624 610.82L623.5 609.63L623 610.18L622.5 610.41L622 609.85L621.5 611.49L621 609.84L620.5 609.83L620 610.1L619.5 609.89L619 612.51L618.5 611.81L618 610.53L617.5 611.75L617 609.79L616.5 610.82L616 610.92L615.5 610.06L615 612.57L614.5 609.71L614 609.6L613.5 610.29L613 612.69L612.5 609.85L612 609.93L611.5 611.76L611 609.85L610.5 613.51L610 611.86L609.5 611.31L609 611.66L608.5 610.63L608 610.82L607.5 610.65L607 610.87L606.5 610.25L606 610.5L605.5 609.79L605 610.1L604.5 610.51L604 611.65L603.5 611.89L603 611.75L602.5 610.1L602 610.04L601.5 611.19L601 615.34L600.5 614.16L600 612.63L599.5 611.12L599 609.98L598.5 609.82L598 609.61L597.5 609.94L597 612.46L596.5 610.38L596 610.07L595.5 610.66L595 610.19L594.5 609.62L594 610.27L593.5 609.84L593 610.86L592.5 609.68L592 609.74L591.5 612.02L591 610.21L590.5 611.84L590 610.84L589.5 609.82L589 610.99L588.5 609.65L588 615.31L587.5 610.41L587 611.83L586.5 609.83L586 609.96L585.5 612.5L585 609.96L584.5 610.61L584 609.69L583.5 609.66L583 611.58L582.5 610.98L582 611.39L581.5 610.62L581 610.28L580.5 609.75L580 612.76L579.5 609.68L579 609.73L578.5 613.31L578 610.01L577.5 610.88L577 611.39L576.5 611.62L576 610.19L575.5 609.64L575 609.7L574.5 610.57L574 611.98L573.5 609.75L573 611.34L572.5 610.38L572 609.66L571.5 609.7L571 610.76L570.5 609.82L570 609.87L569.5 613.85L569 610.98L568.5 610.95L568 612.18L567.5 609.96L567 609.75L566.5 609.85L566 611.34L565.5 610.7L565 609.92L564.5 610.43L564 610.4L563.5 613.01L563 612.95L562.5 609.72L562 611.39L561.5 609.62L561 610.3L560.5 610.97L560 612.05L559.5 611.88L559 610.79L558.5 610.96L558 611.39L557.5 609.64L557 609.77L556.5 611.39L556 609.61L555.5 609.76L555 611.2L554.5 609.96L554 609.64L553.5 609.6L553 609.6L552.5 609.82L552 612.54L551.5 618.61L551 609.98L550.5 610.09L550 609.72L549.5 609.64L549 609.76L548.5 609.65L548 612.58L547.5 609.86L547 609.68L546.5 610.95L546 612.44L545.5 612.52L545 609.69L544.5 610.07L544 611.27L543.5 606.28L543 560.24L542.5 556.48L542 553.5L541.5 553.64L541 554.7L540.5 554.63L540 555.69L539.5 554.5L539 554.64L538.5 553.79L538 554.2L537.5 553.54L537 556.01L536.5 554.76L536 556.81L535.5 553.66L535 554.25L534.5 555.5L534 557.35L533.5 553.66L533 556.17L532.5 553.82L532 555.34L531.5 555.54L531 556.19L530.5 553.57L530 553.75L529.5 557.35L529 553.57L528.5 554.48L528 554.69L527.5 553.74L527 554.45L526.5 553.62L526 553.56L525.5 559.42L525 553.95L524.5 553.52L524 553.54L523.5 553.64L523 553.97L522.5 554.3L522 554.01L521.5 556.91L521 555.61L520.5 553.81L520 554.44L519.5 554.91L519 556.33L518.5 557.17L518 557.56L517.5 569.62L517 607.53L516.5 610.35L516 610.86L515.5 610.78L515 611.23L514.5 611.18L514 609.62L513.5 609.71L513 610.2L512.5 609.9L512 611.16L511.5 610.67L511 609.6L510.5 610.68L510 612.25L509.5 609.64L509 612.59L508.5 609.61L508 610.51L507.5 610.58L507 615.36L506.5 609.77L506 611.33L505.5 609.82L505 609.73L504.5 609.7L504 612.42L503.5 612.67L503 611.73L502.5 609.69L502 610.35L501.5 609.65L501 612.14L500.5 612.1L500 610.94L499.5 610.42L499 611.05L498.5 609.62L498 611.89L497.5 610.29L497 610.1L496.5 609.8L496 609.9L495.5 609.98L495 609.7L494.5 610.88L494 611.95L493.5 609.86L493 614.12L492.5 609.74L492 609.82L491.5 612.85L491 609.66L490.5 609.68L490 611.49L489.5 609.71L489 609.64L488.5 611.1L488 609.95L487.5 610.83L487 615.28L486.5 609.61L486 609.69L485.5 610.57L485 610.51L484.5 610.41L484 611.88L483.5 614.8L483 609.67L482.5 609.92L482 609.65L481.5 609.65L481 609.76L480.5 610.71L480 612.31L479.5 609.95L479 609.71L478.5 609.99L478 609.65L477.5 613.98L477 609.77L476.5 609.81L476 609.66L475.5 609.63L475 610.04L474.5 611.15L474 610.1L473.5 609.99L473 611.25L472.5 611.04L472 611.65L471.5 610.43L471 610.59L470.5 611.18L470 612.16L469.5 610.79L469 609.84L468.5 614.45L468 610.23L467.5 613.25L467 610.62L466.5 609.8L466 609.69L465.5 611.23L465 612.88L464.5 609.75L464 609.67L463.5 610.43L463 611.97L462.5 609.77L462 611.14L461.5 610.42L461 610.18L460.5 610.04L460 609.9L459.5 611.86L459 609.6L458.5 615.23L458 610.89L457.5 610.69L457 609.68L456.5 609.61L456 610.41L455.5 609.72L455 613.02L454.5 609.88L454 617.4L453.5 610.17L453 612.19L452.5 610.75L452 614.77L451.5 609.6L451 610.04L450.5 610.43L450 609.65L449.5 610.09L449 609.97L448.5 610.14L448 613.53L447.5 612.45L447 609.81L446.5 609.73L446 611.52L445.5 610.05L445 609.63L444.5 610L444 611.02L443.5 612.46L443 609.6L442.5 609.81L442 609.9L441.5 609.69L441 611.82L440.5 610.32L440 611.19L439.5 612.61L439 610.42L438.5 617.49L438 609.84L437.5 609.71L437 610.57L436.5 611.85L436 609.63L435.5 609.6L435 610.05L434.5 615.9L434 609.69L433.5 612.47L433 612.46L432.5 611.33L432 609.63L431.5 609.71L431 611.97L430.5 609.68L430 612.88L429.5 609.97L429 610.06L428.5 610.3L428 612.52L427.5 611.02L427 609.69L426.5 611.26L426 612.1L425.5 610.59L425 613.27L424.5 610.39L424 614.54L423.5 610.73L423 615.81L422.5 609.75L422 614.39L421.5 614.36L421 611.19L420.5 610.78L420 610.51L419.5 609.8L419 609.92L418.5 609.95L418 609.7L417.5 609.66L417 610.35L416.5 610.07L416 612.5L415.5 610.24L415 611.44L414.5 610.37L414 610.8L413.5 612.15L413 610.22L412.5 610.24L412 611.47L411.5 612.06L411 611.8L410.5 614.3L410 609.72L409.5 609.61L409 609.63L408.5 610L408 612.89L407.5 610.75L407 612.02L406.5 611.86L406 610.44L405.5 609.78L405 609.95L404.5 609.64L404 611.41L403.5 610.69L403 610.32L402.5 612.74L402 610.36L401.5 613.52L401 610.23L400.5 609.76L400 610.28L399.5 610.04L399 611.21L398.5 610.05L398 610.68L397.5 610.1L397 610L396.5 611.49L396 609.89L395.5 611.08L395 611.23L394.5 609.69L394 609.74L393.5 610.29L393 611.46L392.5 610.08L392 609.79L391.5 610.23L391 611.02L390.5 609.61L390 611.7L389.5 610.85L389 612.88L388.5 609.76L388 610.25L387.5 611.75L387 609.97L386.5 610.45L386 609.91L385.5 609.77L385 610.61L384.5 609.6L384 609.73L383.5 609.64L383 609.69L382.5 611.41L382 611.9L381.5 611.36L381 609.65L380.5 609.9L380 609.65L379.5 611.19L379 609.74L378.5 611.07L378 610.2L377.5 609.9L377 610.88L376.5 610.71L376 612.2L375.5 611.08L375 609.98L374.5 610.35L374 611.77L373.5 611L373 610.53L372.5 610.08L372 611.23L371.5 609.78L371 615.69L370.5 609.98L370 609.71L369.5 611.02L369 611.32L368.5 609.72L368 609.86L367.5 610.1L367 609.75L366.5 610.18L366 610.64L365.5 609.7L365 610.12L364.5 609.69L364 609.6L363.5 610.36L363 613.29L362.5 614.65L362 611.94L361.5 611.65L361 609.94L360.5 611.29L360 609.62L359.5 610.22L359 609.67L358.5 609.64L358 611.63L357.5 611.74L357 610.06L356.5 612.95L356 609.71L355.5 612.89L355 609.62L354.5 610.33L354 609.63L353.5 612.85L353 610.8L352.5 610.69L352 614.76L351.5 610.45L351 610.25L350.5 610.68L350 609.7L349.5 611.5L349 609.8L348.5 611.02L348 610.88L347.5 609.65L347 609.9L346.5 610.3L346 609.87L345.5 609.87L345 609.61L344.5 609.74L344 610.29L343.5 610.8L343 611.34L342.5 610.11L342 609.6L341.5 612.66L341 609.89L340.5 613.18L340 618.72L339.5 609.6L339 614.27L338.5 610.69L338 612.54L337.5 609.78L337 611.58L336.5 610.61L336 610.87L335.5 609.82L335 611.32L334.5 611.57L334 610.7L333.5 609.86L333 609.6L332.5 609.71L332 610.07L331.5 609.77L331 609.75L330.5 610.26L330 609.9L329.5 609.97L329 612.51L328.5 610.51L328 609.67L327.5 609.96L327 609.95L326.5 610.71L326 609.99L325.5 609.6L325 610.04L324.5 609.63L324 610.54L323.5 613.15L323 611.92L322.5 609.69L322 610.94L321.5 611.21L321 611.18L320.5 611.52L320 611.9L319.5 610.05L319 613.13L318.5 610.17L318 609.62L317.5 610.6L317 610.31L316.5 609.62L316 610.93L315.5 615.16L315 612.01L314.5 609.76L314 609.61L313.5 609.66L313 609.97L312.5 609.9L312 610.06L311.5 609.88L311 611.28L310.5 609.83L310 610.55L309.5 613.59L309 613.54L308.5 609.68L308 612.63L307.5 610.23L307 609.71L306.5 610.1L306 609.69L305.5 609.78L305 609.7L304.5 610.55L304 610.93L303.5 609.73L303 611.04L302.5 609.61L302 609.62L301.5 609.76L301 609.68L300.5 619.11L300 610.35L299.5 610.75L299 611.68L298.5 610.12L298 610L297.5 613.99L297 611.43L296.5 611.27L296 610.57L295.5 611.99L295 610.35L294.5 611.88L294 609.63L293.5 609.62L293 609.6L292.5 611.01L292 609.83L291.5 609.67L291 610.77L290.5 609.8L290 610.89L289.5 609.9L289 610.31L288.5 611.76L288 609.61L287.5 609.92L287 610.07L286.5 609.8L286 611.55L285.5 609.71L285 609.62L284.5 611.21L284 609.88L283.5 609.77L283 610.1L282.5 611.64L282 610.14L281.5 610.73L281 609.93L280.5 613.15L280 610.45L279.5 612.6L279 610.58L278.5 609.64L278 609.6L277.5 609.87L277 613.02L276.5 609.82L276 611.28L275.5 609.69L275 610.48L274.5 609.84L274 611.03L273.5 611.42L273 610.1L272.5 610.43L272 611.04L271.5 611.91L271 609.61L270.5 609.92L270 610.3L269.5 611.15L269 609.68L268.5 612.53L268 609.73L267.5 611.2L267 609.6L266.5 609.88L266 610.23L265.5 609.66L265 609.6L264.5 613L264 612.31L263.5 613.76L263 609.66L262.5 612.89L262 610.82L261.5 609.72L261 610.07L260.5 610.62L260 609.73L259.5 610.54L259 611.58L258.5 612.71L258 611.02L257.5 610.61L257 609.6L256.5 609.7L256 610L255.5 609.61L255 610.73L254.5 610.3L254 609.88L253.5 610.44L253 609.85L252.5 611.34L252 609.75L251.5 609.84L251 610.98L250.5 609.76L250 609.72L249.5 610.05L249 610.02L248.5 612.44L248 609.63L247.5 609.8L247 609.76L246.5 611.21L246 611.18L245.5 609.6L245 609.87L244.5 609.92L244 610.5L243.5 609.99L243 610.89L242.5 609.72L242 609.61L241.5 608.38L241 593.49L240.5 554.39L240 554.28L239.5 553.56L239 553.59L238.5 554.73L238 553.57L237.5 555.17L237 553.71L236.5 555.12L236 554.7L235.5 555.17L235 553.81L234.5 557.93L234 555.1L233.5 553.5L233 553.51L232.5 555.72L232 555.82L231.5 554.36L231 554.77L230.5 555.56L230 553.71L229.5 553.51L229 554.86L228.5 553.74L228 556.77L227.5 554.49L227 553.95L226.5 554.65L226 554.58L225.5 553.72L225 553.7L224.5 553.54L224 555.41L223.5 556.83L223 555L222.5 553.59L222 553.51L221.5 557.1L221 554.78L220.5 555.94L220 553.58L219.5 555.72L219 553.83L218.5 554.08L218 561.27L217.5 554.62L217 557.21L216.5 557.96L216 557.02L215.5 560.78L215 588.46L214.5 609.1L214 609.67L213.5 609.61L213 611.73L212.5 613.3L212 609.63L211.5 609.78L211 610.14L210.5 613.86L210 609.93L209.5 610.21L209 610.24L208.5 610.36L208 609.65L207.5 610.87L207 613.63L206.5 612.44L206 609.72L205.5 609.6L205 609.6L204.5 610.2L204 610.95L203.5 610.74L203 610.22L202.5 609.6L202 610.27L201.5 610.42L201 610.63L200.5 609.65L200 613.1L199.5 609.79L199 610.45L198.5 610.8L198 612L197.5 609.69L197 611.18L196.5 611.58L196 610.57L195.5 611.25L195 609.6L194.5 612.18L194 610.86L193.5 611.84L193 610.07L192.5 616.58L192 611.05L191.5 609.77L191 610.39L190.5 614.03L190 611.07L189.5 609.96L189 609.76L188.5 609.65L188 610.61L187.5 610.1L187 610.9L186.5 609.96L186 610.54L185.5 611.02L185 612.66L184.5 609.76L184 609.64L183.5 610.28L183 610.09L182.5 611L182 611.86L181.5 609.62L181 609.84L180.5 611.42L180 611.15L179.5 610.08L179 614.97L178.5 609.65L178 609.67L177.5 610.07L177 609.65L176.5 611.53L176 610.93L175.5 611.34L175 609.65L174.5 609.61L174 609.76L173.5 609.7L173 610.17L172.5 611.75L172 611.13L171.5 612.03L171 612.15L170.5 609.71L170 609.72L169.5 610.12L169 609.77L168.5 610.05L168 609.79L167.5 609.62L167 612.14L166.5 609.66L166 611.18L165.5 612.7L165 610.57L164.5 610.46L164 610.34L163.5 614.75L163 609.72L162.5 611.47L162 610.04L161.5 609.6L161 612.81L160.5 611.87L160 610.2L159.5 610.25L159 613.51L158.5 610.05L158 612.65L157.5 610.07L157 613.54L156.5 609.89L156 611.39L155.5 611.48L155 609.69L154.5 609.69L154 609.82L153.5 610.54L153 609.62L152.5 609.62L152 609.61L151.5 609.73L151 618.23L150.5 609.6L150 609.99L149.5 609.68L149 613.24L148.5 610.25L148 610.84L147.5 609.87L147 612.54L146.5 610.58L146 609.7L145.5 609.86L145 610.77L144.5 610.57L144 609.69L143.5 609.79L143 609.68L142.5 609.66L142 609.81L141.5 609.68L141 610.01L140.5 609.63L140 610.06L139.5 614.23L139 611.68L138.5 610.03L138 609.99L137.5 609.62L137 611.62L136.5 614.26L136 614.95L135.5 610.67L135 610.48L134.5 611.4L134 609.61L133.5 611.29L133 609.77L132.5 610.99L132 609.6L131.5 609.62L131 612.42L130.5 610.09L130 610.94L129.5 609.74L129 610.99L128.5 610.13L128 610.09L127.5 610.13L127 610.53L126.5 609.74L126 610.31L125.5 609.86L125 611.16L124.5 610.15L124 610.39L123.5 609.8L123 610.51L122.5 609.69L122 611.31L121.5 609.81L121 611.33L120.5 610.07L120 609.6L119.5 610.38L119 613.25L118.5 610.4L118 615.33L117.5 610.99L117 610.41L116.5 612.14L116 609.83L115.5 614.16L115 609.97L114.5 609.6L114 609.97L113.5 609.65L113 610.35L112.5 609.72L112 611.14L111.5 609.85L111 609.77L110.5 610.29L110 609.6L109.5 612.41L109 609.8L108.5 610.6L108 609.65L107.5 610.62L107 614.81L106.5 610.2L106 609.99L105.5 609.63L105 610.9L104.5 610.11L104 609.97L103.5 612.08L103 612.17L102.5 610.39L102 610.75L101.5 609.66L101 609.99L100.5 612.59L100 609.78L99.5 609.83L99 610.4L98.5 611.04L98 610.24L97.5 610.63L97 609.82L96.5 610.01L96 611.12L95.5 610.09L95 609.6L94.5 609.77L94 611.57L93.5 612.17L93 611.75L92.5 609.8L92 610.22L91.5 609.62L91 611.57L90.5 609.87L90 609.77L89.5 610.17L89 609.9L88.5 611.21L88 615.22L87.5 609.96L87 610.78L86.5 612.22L86 610.17L85.5 610.15L85 610.46L84.5 609.61L84 610.57L83.5 609.75L83 610.76L82.5 609.88L82 610.6L81.5 611.11L81 612.46L80.5 610.12L80 609.83L79.5 609.67L79 609.62L78.5 610.02L78 609.89L77.5 613.07L77 610.7L76.5 609.66L76 611.14L75.5 612.51L75 612.16L74.5 609.92L74 613.08L73.5 610.59L73 612.19L72.5 611.56L72 609.67L71.5 609.66L71 611.83L70.5 609.66L70 614.77L69.5 610.34L69 613.12L68.5 612.72L68 612.89L67.5 609.78L67 611.85L66.5 610.92L66 609.83L65.5 610.06L65 609.67L64.5 609.65L64 609.62L63.5 615.31L63 609.64L62.5 614.95L62 609.65L61.5 611.74L61 610.99L60.5 609.64L60 609.78L59.5 612.23L59 611.66L58.5 611.43L58 611.46L57.5 609.87L57 617.82L56.5 609.63L56 609.61L55.5 610.16L55 609.6L54.5 610.05L54 609.71L53.5 610.3L53 609.98L52.5 609.86L52 611.64L51.5 609.61L51 610.52L50.5 610.21L50 609.75L49.5 609.6L49 609.68L48.5 610.09L48 610.93L47.5 609.62L47 610.42L46.5 609.73L46 610.74L45.5 609.65L45 609.67L44.5 615.44L44 611.61L43.5 610.17L43 610.29L42.5 612.76L42 609.85L41.5 611.71L41 612.89L40.5 612.13L40 609.77L39.5 609.71L39 610.2L38.5 610.84L38 610.18L37.5 609.88L37 611.14L36.5 609.93L36 609.68L35.5 609.91L35 609.61L34.5 609.84L34 610.11L33.5 609.99L33 610.92L32.5 609.76L32 609.84L31.5 611.32L31 609.63L30.5 609.71L30 614.43L29.5 611.39L29 610.01L28.5 609.95L28 611.08L27.5 610.71L27 609.6L26.5 609.62L26 610.42L25.5 610.49L25 612.7L24.5 611.75L24 610.06L23.5 610.03L23 609.92L22.5 610.18L22 612.67L21.5 610.93L21 610.42L20.5 609.68L20 611.1L19.5 610.07L19 609.61L18.5 611.19L18 611.41L17.5 610.83L17 609.63Z" fill="#0cf40c"/>
<path d="M996.5 568.3 L1004.8 564.4 L1004.8 572.2 Z" fill="#18e818"/>
<rect x="1003" y="567.7" width="13" height="1.2" fill="#18e818"/>
<text x="19.6" y="118.6" font-size="12" fill="#ea3ce2" textLength="22.6" lengthAdjust="spacingAndGlyphs">Vout</text>
<text x="19.6" y="501" font-size="12.4" fill="#30e8e8" textLength="38.8" lengthAdjust="spacingAndGlyphs">SR VDS</text>
<text x="24" y="627" font-size="12.4" fill="#30e830" textLength="23" lengthAdjust="spacingAndGlyphs">DRV</text>
<circle cx="11.9" cy="286.4" r="10.5" fill="#f8bc58"/>
<path d="M19 285.4 L24 285.4 L24 281.1 L34 286.4 L24 291.7 L24 287.4 L19 287.4 Z" fill="#ff10f8" stroke="#000" stroke-width="1.6" stroke-linejoin="round"/>
<path d="M19 285.4 L24 285.4 L24 281.1 L34 286.4 L24 291.7 L24 287.4 L19 287.4 Z" fill="#ff10f8"/>
<circle cx="11.9" cy="286.4" r="8.5" fill="#ff10f8"/>
<text x="11.700000000000001" y="290.3" font-size="11" text-anchor="middle" fill="#7a0a80">3</text>
<circle cx="12.4" cy="476.1" r="9.7" fill="#06141c" opacity="0.8"/>
<path d="M19 474.3 L24 474.3 L24 470 L34 475.3 L24 480.6 L24 476.3 L19 476.3 Z" fill="#08f0ea" stroke="#000" stroke-width="1.6" stroke-linejoin="round"/>
<path d="M19 474.3 L24 474.3 L24 470 L34 475.3 L24 480.6 L24 476.3 L19 476.3 Z" fill="#08f0ea"/>
<circle cx="11.9" cy="475.3" r="8.5" fill="#08f0ea"/>
<text x="11.700000000000001" y="479.2" font-size="11" text-anchor="middle" fill="#064850">2</text>
<circle cx="12.4" cy="601.8" r="9.7" fill="#06141c" opacity="0.8"/>
<path d="M19 600 L24 600 L24 595.7 L34 601 L24 606.3 L24 602 L19 602 Z" fill="#0cf40c" stroke="#000" stroke-width="1.6" stroke-linejoin="round"/>
<path d="M19 600 L24 600 L24 595.7 L34 601 L24 606.3 L24 602 L19 602 Z" fill="#0cf40c"/>
<circle cx="11.9" cy="601.0" r="8.5" fill="#0cf40c"/>
<text x="11.700000000000001" y="604.9" font-size="11" text-anchor="middle" fill="#064808">4</text>
<rect x="21.5" y="674.3" width="280.2" height="69.2" rx="5" fill="none" stroke="#d8d8d8" stroke-width="1"/>
<rect x="29.6" y="681.7" width="33" height="13" rx="6.5" fill="url(#gc2)"/>
<text x="40" y="691.6" font-size="9.2" font-weight="bold" fill="#06444c" textLength="11.4" lengthAdjust="spacingAndGlyphs">C2</text>
<text x="68.3" y="691.2" font-size="11.4" font-weight="bold" fill="#f4f4f4" textLength="51.6" lengthAdjust="spacingAndGlyphs">10.0V/div</text>
<text x="182.8" y="691.2" font-size="11.4" font-weight="bold" fill="#f4f4f4" textLength="25.6" lengthAdjust="spacingAndGlyphs">1MΩ</text>
<text font-weight="bold" fill="#f4f4f4"><tspan x="215.3" y="688.2" font-size="8.6">B</tspan><tspan x="220.2" y="693.8" font-size="11.5" textLength="9.6" lengthAdjust="spacingAndGlyphs">W</tspan><tspan x="229.6" y="691.2" font-size="11.4" textLength="33.8" lengthAdjust="spacingAndGlyphs">:250M</tspan></text>
<rect x="29.6" y="702.7" width="33" height="13" rx="6.5" fill="url(#gc3)"/>
<text x="40" y="712.6" font-size="9.2" font-weight="bold" fill="#5c0662" textLength="11.4" lengthAdjust="spacingAndGlyphs">C3</text>
<text x="67.3" y="712.2" font-size="11.4" font-weight="bold" fill="#f4f4f4" textLength="45.4" lengthAdjust="spacingAndGlyphs">2.0V/div</text>
<text x="182.8" y="712.2" font-size="11.4" font-weight="bold" fill="#f4f4f4" textLength="25.6" lengthAdjust="spacingAndGlyphs">1MΩ</text>
<text font-weight="bold" fill="#f4f4f4"><tspan x="215.3" y="709.2" font-size="8.6">B</tspan><tspan x="220.2" y="714.8" font-size="11.5" textLength="9.6" lengthAdjust="spacingAndGlyphs">W</tspan><tspan x="229.6" y="712.2" font-size="11.4" textLength="37.4" lengthAdjust="spacingAndGlyphs">:20.0M</tspan></text>
<rect x="29.6" y="723.7" width="33" height="13" rx="6.5" fill="url(#gc4)"/>
<text x="40" y="733.6" font-size="9.2" font-weight="bold" fill="#064a0a" textLength="11.4" lengthAdjust="spacingAndGlyphs">C4</text>
<text x="68.3" y="733.2" font-size="11.4" font-weight="bold" fill="#f4f4f4" textLength="51.6" lengthAdjust="spacingAndGlyphs">10.0V/div</text>
<text x="182.8" y="733.2" font-size="11.4" font-weight="bold" fill="#f4f4f4" textLength="25.6" lengthAdjust="spacingAndGlyphs">1MΩ</text>
<text font-weight="bold" fill="#f4f4f4"><tspan x="215.3" y="730.2" font-size="8.6">B</tspan><tspan x="220.2" y="735.8" font-size="11.5" textLength="9.6" lengthAdjust="spacingAndGlyphs">W</tspan><tspan x="229.6" y="733.2" font-size="11.4" textLength="33.8" lengthAdjust="spacingAndGlyphs">:250M</tspan></text>
<rect x="591.5" y="674.3" width="185.5" height="23.4" rx="5" fill="none" stroke="#d8d8d8" stroke-width="1"/>
<rect x="597" y="680.3" width="16" height="15.2" fill="#f0b474"/>
<rect x="598.4" y="681.7" width="13.2" height="12.4" fill="#ecdcdc"/>
<text x="598.8" y="691.8" font-size="11.4" font-weight="bold" fill="#141838" textLength="11.4" lengthAdjust="spacingAndGlyphs">A'</text>
<rect x="614.8" y="681.7" width="32.6" height="12.9" rx="6.45" fill="url(#gc4)"/>
<text x="624.6" y="691.5" font-size="9.2" font-weight="bold" fill="#064a0a" textLength="11.4" lengthAdjust="spacingAndGlyphs">C4</text>
<path d="M650.4 692.9 L655.4 692.9 L660.5 682 L664.8 682" stroke="#fff" stroke-width="1.7" fill="none"/>
<text x="667.5" y="691" font-size="11.4" font-weight="bold" fill="#f4f4f4" textLength="23.7" lengthAdjust="spacingAndGlyphs">5.2V</text>
<rect x="781.5" y="674.3" width="230.5" height="92.4" rx="5" fill="none" stroke="#d8d8d8" stroke-width="1"/>
<text x="789.3" y="691.2" font-size="11.4" font-weight="bold" fill="#f4f4f4" textLength="37.1" lengthAdjust="spacingAndGlyphs">10.0µs</text>
<text x="839.4" y="691.2" font-size="11.4" font-weight="bold" fill="#f4f4f4" textLength="44.3" lengthAdjust="spacingAndGlyphs">2.5GS/s</text>
<text x="933.9" y="691.2" font-size="11.4" font-weight="bold" fill="#f4f4f4" textLength="49.8" lengthAdjust="spacingAndGlyphs">400ps/pt</text>
<text x="789.3" y="712.2" font-size="11.4" font-weight="bold" fill="#e81818" textLength="48.4" lengthAdjust="spacingAndGlyphs">Stopped</text>
<text x="789.3" y="733.2" font-size="11.4" font-weight="bold" fill="#f4f4f4" textLength="44.3" lengthAdjust="spacingAndGlyphs">56 acqs</text>
<text x="929.3" y="733.2" font-size="11.4" font-weight="bold" fill="#f4f4f4" textLength="47.2" lengthAdjust="spacingAndGlyphs">RL:250k</text>
<text x="789.3" y="754.2" font-size="11.4" font-weight="bold" fill="#f4f4f4" textLength="26.7" lengthAdjust="spacingAndGlyphs">Auto</text>
<text x="831.2" y="754.2" font-size="11.4" font-weight="bold" fill="#f4f4f4" textLength="97.8" lengthAdjust="spacingAndGlyphs">January 05, 2016</text>
<text x="957" y="754.2" font-size="11.4" font-weight="bold" fill="#f1a01f" textLength="47" lengthAdjust="spacingAndGlyphs">16:26:01</text>
</svg>
</body>
</html>
